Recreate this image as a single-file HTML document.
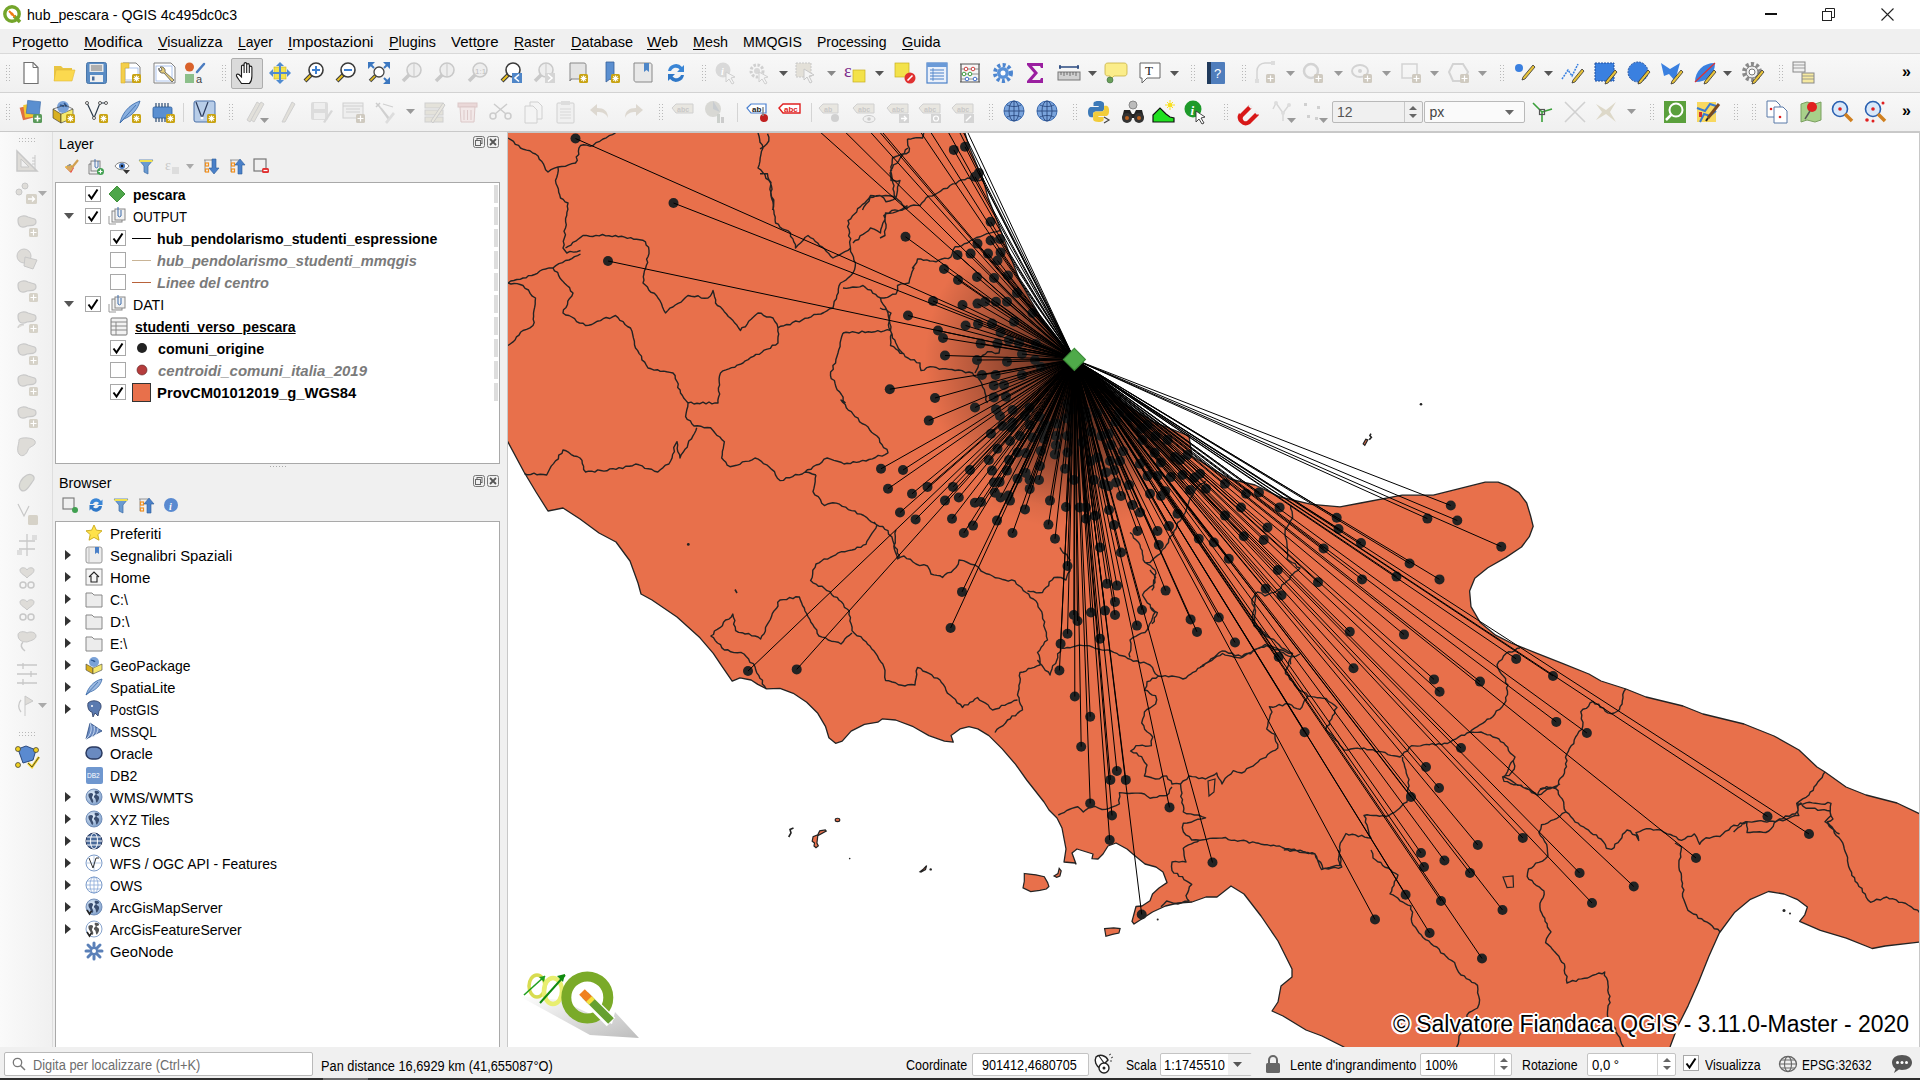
<!DOCTYPE html><html><head><meta charset="utf-8"><style>
*{box-sizing:border-box;margin:0;padding:0}
html,body{width:1920px;height:1080px;overflow:hidden;background:#f0f0f0;font-family:"Liberation Sans",sans-serif;color:#000}
.a{position:absolute}
.t{position:absolute;white-space:nowrap;line-height:1;transform-origin:0 0}
svg{position:absolute;overflow:visible}
</style></head><body><div class="a" style="left:0px;top:0px;width:1920px;height:29px;background:#ffffff;"></div>
<div class="t" style="left:27px;top:7.30px;font-size:15px;color:#000;font-weight:normal;font-style:normal;transform:scaleX(0.9433);">hub_pescara - QGIS 4c495dc0c3</div>
<div class="a" style="left:0px;top:29px;width:1920px;height:24px;background:#f0f0f0;"></div>
<div class="t" style="left:11.7px;top:34.30px;font-size:15px;color:#000;font-weight:normal;font-style:normal;transform:scaleX(0.9982);text-decoration-thickness:1px;text-underline-offset:2px;">P<u>r</u>ogetto</div>
<div class="t" style="left:84px;top:34.30px;font-size:15px;color:#000;font-weight:normal;font-style:normal;transform:scaleX(1.0474);text-decoration-thickness:1px;text-underline-offset:2px;"><u>M</u>odifica</div>
<div class="t" style="left:158px;top:34.30px;font-size:15px;color:#000;font-weight:normal;font-style:normal;transform:scaleX(0.9590);text-decoration-thickness:1px;text-underline-offset:2px;"><u>V</u>isualizza</div>
<div class="t" style="left:238px;top:34.30px;font-size:15px;color:#000;font-weight:normal;font-style:normal;transform:scaleX(0.9328);text-decoration-thickness:1px;text-underline-offset:2px;"><u>L</u>ayer</div>
<div class="t" style="left:288px;top:34.30px;font-size:15px;color:#000;font-weight:normal;font-style:normal;transform:scaleX(1.0154);text-decoration-thickness:1px;text-underline-offset:2px;"><u>I</u>mpostazioni</div>
<div class="t" style="left:389px;top:34.30px;font-size:15px;color:#000;font-weight:normal;font-style:normal;transform:scaleX(0.9553);text-decoration-thickness:1px;text-underline-offset:2px;"><u>P</u>lugins</div>
<div class="t" style="left:451px;top:34.30px;font-size:15px;color:#000;font-weight:normal;font-style:normal;transform:scaleX(0.9993);text-decoration-thickness:1px;text-underline-offset:2px;">Vett<u>o</u>re</div>
<div class="t" style="left:514px;top:34.30px;font-size:15px;color:#000;font-weight:normal;font-style:normal;transform:scaleX(0.9280);text-decoration-thickness:1px;text-underline-offset:2px;"><u>R</u>aster</div>
<div class="t" style="left:570.5px;top:34.30px;font-size:15px;color:#000;font-weight:normal;font-style:normal;transform:scaleX(0.9656);text-decoration-thickness:1px;text-underline-offset:2px;"><u>D</u>atabase</div>
<div class="t" style="left:647px;top:34.30px;font-size:15px;color:#000;font-weight:normal;font-style:normal;transform:scaleX(1.0140);text-decoration-thickness:1px;text-underline-offset:2px;"><u>W</u>eb</div>
<div class="t" style="left:693px;top:34.30px;font-size:15px;color:#000;font-weight:normal;font-style:normal;transform:scaleX(0.9542);text-decoration-thickness:1px;text-underline-offset:2px;"><u>M</u>esh</div>
<div class="t" style="left:743px;top:34.30px;font-size:15px;color:#000;font-weight:normal;font-style:normal;transform:scaleX(0.9440);text-decoration-thickness:1px;text-underline-offset:2px;">MMQGIS</div>
<div class="t" style="left:817px;top:34.30px;font-size:15px;color:#000;font-weight:normal;font-style:normal;transform:scaleX(0.9366);text-decoration-thickness:1px;text-underline-offset:2px;">Pro<u>c</u>essing</div>
<div class="t" style="left:902px;top:34.30px;font-size:15px;color:#000;font-weight:normal;font-style:normal;transform:scaleX(0.9619);text-decoration-thickness:1px;text-underline-offset:2px;"><u>G</u>uida</div>
<div class="a" style="left:0px;top:53px;width:1920px;height:1px;background:#d9d9d9;"></div>
<div class="a" style="left:0px;top:54px;width:1920px;height:38px;background:linear-gradient(#f8f8f8,#f0f0f0);"></div>
<div class="a" style="left:0px;top:92px;width:1920px;height:1px;background:#d2d2d2;"></div>
<div class="a" style="left:0px;top:93px;width:1920px;height:38px;background:linear-gradient(#f8f8f8,#f0f0f0);"></div>
<div class="a" style="left:0px;top:131px;width:1920px;height:1px;background:#c9c9c9;"></div>
<div class="a" style="left:0px;top:132px;width:53px;height:915px;background:linear-gradient(90deg,#fafafa,#f0f0f0);"></div>
<div class="a" style="left:52px;top:132px;width:1px;height:915px;background:#dedede;"></div>
<div class="a" style="left:53px;top:132px;width:455px;height:915px;background:#f0f0f0;"></div>
<div class="t" style="left:59.2px;top:135.60px;font-size:15px;color:#000;font-weight:normal;font-style:normal;transform:scaleX(0.9221);">Layer</div>
<div class="a" style="left:55px;top:182px;width:445px;height:282px;background:#ffffff;border:1px solid #a9a9a9"></div>
<div class="t" style="left:59.2px;top:475.00px;font-size:15px;color:#000;font-weight:normal;font-style:normal;transform:scaleX(0.9562);">Browser</div>
<div class="a" style="left:55px;top:521px;width:445px;height:527px;background:#ffffff;border:1px solid #a9a9a9"></div>
<div class="a" style="left:0px;top:1047px;width:1920px;height:31px;background:#f0f0f0;"></div>
<div class="a" style="left:0px;top:1078px;width:1920px;height:2px;background:#2e2e2e;"></div>
<div class="a" style="left:323px;top:1078px;width:45px;height:2px;background:#6a6a6a;"></div>
<svg style="left:508px;top:133px;overflow:hidden" width="1411" height="914" viewBox="508 133 1411 914"><rect x="508" y="133" width="1411" height="914" fill="#fff"/><polygon points="500,125 962,125 965,133 969,146.5 976,163 983,179 988,197.5 997,220.6 1004,239 1011,258 1020,281 1030,299 1044,322.5 1062,346 1074,359.6 1091,378 1123,403 1154,422 1189,436 1192,456 1208,466 1230,479 1255,485 1280,497 1311.5,504.3 1340,506.9 1360.7,503 1402.2,495.2 1433.3,495.2 1459.3,488.7 1485.2,482.2 1498.2,482.2 1508.5,486.1 1518.9,492.6 1526.7,503 1530.6,516 1533.2,526.3 1529.3,536.7 1521.5,547 1506,557.4 1487.8,567.8 1474.8,578.2 1469.6,591.1 1471,606.7 1480,622.2 1495.6,635.2 1511.1,643 1537,653.3 1563,663.7 1588.9,674 1601,681 1626,689 1646,697 1683,706 1703,714 1744,724 1774,736 1799,750 1817,767 1825,772 1846,787 1866,795 1897,803 1920,814 1926,817 1926,941 1920,942 1885.2,946 1872.2,948.5 1846.3,938.2 1820.4,930.4 1799.6,921.3 1804.8,914.8 1807.4,907 1797,899.3 1784,894 1768.5,891.5 1750.4,899.3 1734.8,912.2 1719.3,933 1708.9,956.3 1698.5,982.2 1688.2,1005.6 1677.8,1026.3 1670,1047 1666,1056 1347,1056 1344,1047 1322,1036 1306,1030 1283,1016 1272,1011 1278,1002 1281,986 1292,977 1292,969 1278,941 1261,916 1244,894 1231,886 1217,897 1206,897 1192,902 1178,903 1165.5,906 1152.5,912 1134,924 1132,921.4 1136,906.5 1142,906 1150,900.7 1152.5,894 1159,888 1167,882.6 1163,872 1156,867 1145,864 1134,855 1127,849 1116,843 1108,846 1103,854 1098,859 1092,858.6 1093,854 1085,851.5 1077,849 1072,853 1076,864 1075,863 1064,862 1066,849 1064,838.5 1062,828 1057,818 1049,810 1044,802 1026.7,780 1015.6,764.4 1002.2,748.9 988.9,735.6 977.8,728.9 968.9,726.7 960,728.9 951.1,735.6 953.3,742.2 944.4,741.1 928.9,735.6 913.3,726.7 895.6,720 882.2,718.9 877.8,722.2 864.4,724.4 851.1,731.1 842.2,741.1 835.6,743.3 828.9,737.8 825.6,726.7 817.8,713.3 806.7,702.2 793.3,693.3 780,688.4 766.7,688.9 757.8,684.4 751.1,680 740,677.8 732.2,681.1 722.2,666.7 713.3,653.3 700,637.8 677,617 652,600 641,594 638,583 630,561 616,542 599,533 580,519 563,508 548,511 536,492 524,472 508,442 500,430" fill="#e8704b" stroke="#232323" stroke-width="1.3" stroke-linejoin="round"/><path d="M788.7 837L791 833L790 829.5L793.5 828M1369.3 439.8L1371.4 437.3L1369.9 435.7L1370.9 433.7M735 589.5L737 593" stroke="#232323" stroke-width="1.6" fill="none"/><g fill="#232323"><circle cx="1421" cy="404.2" r="1.3"/><circle cx="849.7" cy="858.6" r="0.8"/><circle cx="930.7" cy="869.4" r="1.2"/><circle cx="1157.7" cy="919.5" r="1"/><circle cx="688.3" cy="544.4" r="1.4"/><circle cx="1784" cy="910.5" r="1.5"/><circle cx="1790" cy="913.5" r="1"/></g><ellipse cx="837.5" cy="819.9" rx="2.3" ry="1.7" fill="#e8704b" stroke="#232323" stroke-width="1.1"/><polygon points="1024.3,873.5 1029.4,874.1 1035.9,874.8 1044.3,876.7 1047.6,882.6 1048.9,886.5 1046.3,889 1039.8,890.3 1030.7,891.6 1023,887.8 1024.3,881.3" fill="#e8704b" stroke="#232323" stroke-width="1.2"/><polygon points="1054,876 1058,873.5 1059.2,868.3 1061.2,870.9 1059.9,876 1056.7,877.4" fill="#e8704b" stroke="#232323" stroke-width="1.2"/><polygon points="1104.6,928.6 1113.7,927.9 1120.1,928.6 1118.9,933.1 1112.4,934.4 1105.9,936.3" fill="#e8704b" stroke="#232323" stroke-width="1.2"/><polygon points="1363.2,443.9 1365.8,439.3 1367.8,439.8 1364.8,445.4" fill="#e8704b" stroke="#232323" stroke-width="1.2"/><polygon points="812.2,841.2 813.1,836.6 817.8,834.7 819.7,830.9 825.3,830 826.2,831 817.8,835.6 816.9,843.1 818.3,845.9 816,847.8 814,846 814.5,843.1" fill="#e8704b" stroke="#232323" stroke-width="1.2"/><polygon points="920,871.7 923.5,869 926.6,865.6 925.5,869.5 921,872" fill="#e8704b" stroke="#232323" stroke-width="1.2"/><path d="M508.0 138.0L510.7 139.7L513.5 141.4L515.3 144.3L518.6 145.3L520.5 148.0L523.5 149.3L526.6 150.1L529.9 150.7L532.5 152.8L535.5 154.0L538.1 156.0L539.2 159.1L541.6 161.2L543.4 163.8L544.6 166.8L545.6 169.8L548.0 172.0L551.0 169.6L554.4 168.1L558.0 167.0L561.6 166.5L565.2 166.4L568.5 164.8L571.9 163.6L575.5 163.0L577.3 160.4L576.2 156.9L578.8 154.5L578.4 151.2L578.9 148.2L580.5 145.5L583.6 144.7L586.8 145.1L589.9 146.2L593.0 145.5L596.0 142.7L599.8 141.3L603.0 139.0L606.3 137.8L609.1 135.7L612.4 134.6L615.5 133.0M558.0 167.0L558.3 170.6L557.7 173.9L556.8 177.2L555.5 180.5L556.0 183.5L557.3 186.3L558.4 189.1L558.7 192.2L559.8 195.1L560.5 198.0L563.2 199.3L565.1 201.9L568.0 203.0L567.3 206.1L567.9 209.3L566.9 212.4L566.7 215.5L565.6 218.5L565.6 221.7L566.3 224.9L565.5 228.0L564.0 231.2L565.5 234.8L564.4 238.0L563.3 241.3L564.2 244.8L563.0 248.0L564.9 250.5L566.8 253.0L570.0 251.4L573.7 252.1L577.2 251.7L580.5 250.5M565.5 248.0L568.1 246.3L571.0 245.1L572.8 242.3L575.7 241.2L578.1 239.2L580.6 237.4L583.0 235.5L586.2 235.4L589.5 236.2L592.8 236.5L596.0 235.4L599.2 235.9L602.5 234.5L605.8 235.9L609.0 235.8L612.2 236.6L615.5 235.5L618.4 236.8L621.6 236.3L624.6 237.1L627.4 238.4L630.7 237.6L633.5 239.2L636.6 239.2L639.7 239.7L642.7 240.2L645.5 241.8L646.1 244.9L648.6 247.3L649.0 250.5L649.0 253.6L648.1 256.5L646.6 259.2L647.7 262.5L646.4 265.3L645.6 268.2L644.4 271.0L643.9 274.0L643.3 276.9L644.0 280.1L643.0 283.0L645.3 285.0L647.5 287.1L648.8 290.0L650.9 292.3L654.3 293.2L656.4 295.4L658.0 298.0L660.0 300.7L661.5 303.7L662.5 307.0L663.8 310.1L665.5 313.0L667.7 310.6L669.8 308.2L672.9 307.0L675.3 305.0L678.1 303.4L681.1 302.1L683.3 299.7L685.5 297.5L688.0 295.5L691.3 296.2L694.6 296.7L698.1 295.8L701.2 298.0L704.6 298.2L708.0 298.0L710.4 296.0L711.9 293.4L713.0 290.5L713.9 293.6L714.5 296.7L715.7 299.7L715.5 303.0L717.4 305.5L720.4 306.9L722.5 309.2L724.3 311.7L726.5 314.0L728.3 316.5L730.8 318.4L733.0 320.6L734.8 323.1L737.0 325.3L738.6 328.0L740.5 330.5L741.9 327.6L745.5 326.7L747.2 324.1L748.7 321.2L751.1 319.2L753.4 317.1L755.6 315.0L758.0 313.0L761.3 313.2L763.8 315.7L766.7 317.0L770.0 316.9L773.0 318.0L774.7 321.3L777.1 324.3L778.0 328.0L780.7 326.2L783.9 325.7L786.8 324.5L790.2 324.7L792.8 322.3L795.7 321.0L799.3 321.9L802.0 320.1L804.8 318.3L808.0 318.0L811.2 316.8L813.9 314.5L817.4 314.3L820.9 314.0L823.9 312.5L826.9 310.9L829.7 308.8L833.0 308.0L833.7 304.8L834.2 301.5L836.4 298.8L836.8 295.5L838.3 292.6L838.3 289.1L839.0 285.9L840.5 283.0L843.4 281.5L846.2 279.8L848.5 277.6L850.9 275.5L853.0 273.0L854.5 269.8L855.2 266.5L855.5 263.0L853.9 260.2L853.5 257.0L852.2 254.1L850.5 251.3L850.5 248.0M508.0 283.0L510.7 281.0L513.8 280.5L516.8 279.5L520.1 279.4L523.0 278.0L526.2 277.8L528.6 275.6L531.8 275.5L534.6 274.5L537.4 273.3L539.8 271.0L542.5 269.6L545.5 269.0L549.2 267.9L553.0 268.0L555.8 265.6L558.9 263.7L562.5 262.6L565.5 260.5L568.9 260.0L571.8 258.6L574.5 256.6L577.6 255.6L580.5 254.0M553.0 268.0L554.5 270.9L557.7 272.4L558.7 275.7L560.3 278.6L562.5 280.9L564.6 283.3L567.0 285.5L569.6 287.6L570.5 290.9L573.0 293.0L571.9 296.0L569.6 298.4L567.8 301.1L567.5 304.5L566.1 307.4L563.5 309.7L563.0 313.0L565.6 315.0L569.0 315.5L571.8 317.0L574.6 318.6L576.6 321.6L579.5 323.0L583.1 323.3L585.5 325.5L588.7 325.2L591.8 324.5L594.6 322.8L597.4 321.2L600.5 320.6L603.2 318.7L606.2 317.5L609.8 318.5L612.6 316.8L615.5 315.5L618.0 317.6L619.9 320.4L623.1 321.6L625.0 324.5L627.5 326.5L630.5 328.0L632.0 331.2L632.7 334.5L633.4 337.9L634.4 341.2L634.5 344.7L635.5 348.0L637.7 350.6L639.2 353.6L641.5 356.1L641.9 359.9L644.7 362.1L646.3 365.1L648.0 368.0L651.1 368.8L654.1 370.1L657.4 369.7L660.3 371.4L663.6 371.1L666.7 371.8L669.9 372.4L673.0 373.0L675.1 375.5L675.3 378.7L676.9 381.3L678.3 384.0L677.7 387.5L680.1 389.9L680.5 393.0L682.4 395.5L683.9 398.3L686.0 400.6L688.0 403.0L687.8 406.5L686.8 409.8L686.1 413.3L685.6 416.7L687.2 419.4L690.4 420.8L691.8 423.8L694.0 426.0L697.4 425.8L700.7 426.2L703.9 427.7L707.3 427.5L710.6 427.8L712.8 430.2L714.8 432.8L716.9 435.4L719.9 437.0L721.9 439.6L724.4 441.7L723.8 445.0L723.3 448.2L722.4 451.4L722.3 454.8L721.7 458.0L723.7 460.2L725.9 462.3L727.2 465.2L730.0 466.7L733.3 466.0L736.5 465.3L739.7 464.4L742.3 461.9L745.7 461.4L749.1 461.1L752.1 459.8L755.0 458.0L758.2 459.2L761.0 461.1L763.4 463.6L766.7 464.8L769.2 467.0L771.7 469.4L774.5 471.6L775.6 475.2L777.4 478.2L780.0 480.6L783.4 480.4L786.0 477.7L789.5 477.8L792.6 476.6L795.4 474.5L799.0 474.9L802.2 474.0L805.0 472.0L807.4 469.7L811.1 469.3L813.2 466.6L816.1 465.0L819.4 464.2L822.0 462.1L824.0 459.1L827.2 458.0L830.6 459.1L833.9 460.4L837.4 461.3L840.9 462.2L844.0 464.0L847.1 463.2L850.4 463.6L853.3 461.7L856.6 462.4L859.7 461.7L862.7 460.4L866.0 461.0L869.0 459.5L872.4 458.9L875.4 457.5L878.2 455.4L882.1 456.1L885.1 454.6L888.0 452.8L887.0 449.4L883.6 447.7L882.1 444.7L879.8 442.2L879.3 438.5L877.0 436.0L874.2 434.2L871.6 432.3L869.6 429.7L867.8 426.7L865.2 424.8L862.0 423.5L859.4 421.6L858.1 418.2L855.0 416.7L853.1 414.2L851.3 411.6L848.3 410.1L846.3 407.8L845.3 404.5L842.9 402.5L841.0 400.0L845.5 403.0M688.0 403.0L691.0 402.1L694.0 404.0L697.0 403.3L700.0 403.7L703.0 402.1L706.0 403.8L709.0 402.0L712.0 403.8L715.0 402.9L718.0 403.0L717.9 400.0L718.6 397.0L719.7 394.1L718.5 391.0L718.4 387.9L719.6 385.0L719.2 382.0L719.1 378.9L719.5 375.9L720.5 373.0L722.9 370.8L725.9 369.9L728.8 368.9L731.6 367.6L734.8 367.3L737.2 365.1L740.2 364.3L743.0 363.0L745.3 360.8L748.2 359.6L750.6 357.5L753.5 356.4L755.9 354.4L759.4 354.2L761.9 352.3L764.2 350.1L767.2 349.1L770.4 348.4L772.2 345.3L775.7 345.1L778.0 343.0L777.9 340.0L778.0 337.0L778.7 334.0L777.8 331.0L778.0 328.0M758.0 133.0L759.0 136.0L759.6 139.1L760.0 142.3L762.3 144.9L763.0 148.0L761.5 151.2L760.9 154.6L760.2 157.9L759.9 161.4L759.2 164.7L758.0 168.0L760.8 169.9L762.8 172.5L765.0 174.9L765.9 178.3L768.8 180.2L770.5 183.0L771.5 186.1L772.0 189.2L770.7 192.4L770.9 195.6L771.7 198.7L772.9 201.7L773.3 204.8L773.0 208.0L773.9 210.9L774.1 214.0L775.2 216.9L775.1 220.0L775.5 223.0L778.3 224.2L779.9 227.2L782.4 228.9L785.4 229.8L788.3 230.9L790.5 233.0L790.5 236.3L792.9 238.9L793.8 241.9L795.5 244.7L795.5 248.0L797.8 245.3L800.5 243.0L803.0 240.5L805.0 237.5L808.0 235.5L810.3 237.6L813.3 238.8L815.2 241.3L817.7 243.0L819.5 245.6L822.3 247.0L824.6 249.0L826.5 251.5L828.8 253.5L830.6 256.1L833.0 258.0L835.9 256.4L839.1 255.1L841.9 253.3L844.9 251.7L848.0 250.4L850.5 248.0L850.0 245.0L849.6 241.9L850.7 238.7L848.6 235.8L849.6 232.7L849.1 229.6L847.6 226.7L849.0 223.5L848.0 220.5L850.7 218.8L852.3 216.1L854.5 214.0L856.7 211.9L857.6 208.6L860.3 206.9L862.3 204.6L864.9 202.8L866.9 200.5L869.0 198.3L870.5 195.5L873.5 195.7L876.5 196.4L879.5 195.9L882.5 195.9L885.5 195.5L889.0 195.8L892.4 196.2L895.5 198.0L894.2 195.1L894.1 191.9L893.0 189.0L894.0 185.6L892.8 182.7L892.4 179.6L891.9 176.6L891.4 173.5L890.5 170.5L892.4 168.0L893.5 164.8L896.9 163.4L898.7 160.8L900.2 158.0L902.2 155.5L904.4 153.2L905.3 149.9L908.0 148.0M508.0 283.0L510.9 284.0L514.1 283.5L517.2 283.6L520.1 284.5L523.0 285.5L525.1 288.4L528.5 290.0L530.1 293.4L532.3 296.2L535.5 298.0L535.2 301.1L535.2 304.1L534.7 307.2L534.0 310.2L533.5 313.2L533.6 316.3L533.2 319.4L534.2 322.5L533.0 325.5L530.0 327.9L526.6 329.3L523.0 330.5L520.5 332.3L519.0 335.1L516.5 336.8L515.2 339.8L513.0 341.9L510.5 343.7L508.0 345.5M843.0 333.0L841.8 336.2L840.9 339.6L840.1 342.9L840.1 346.4L838.8 349.7L838.0 353.0L837.0 356.2L835.9 359.5L835.6 362.9L832.9 365.6L833.3 369.3L830.6 372.0L830.5 375.5L831.2 378.7L834.4 380.5L835.1 383.7L835.9 386.8L837.1 389.7L839.6 391.9L841.4 394.5L843.1 397.2L843.1 400.7L845.5 403.0M843.0 333.0L846.1 332.2L849.3 332.8L852.5 331.7L855.7 332.4L858.9 333.2L862.0 331.2L865.2 332.5L868.3 331.7L871.5 332.3L874.7 331.8L877.8 330.6L881.0 331.9L884.2 330.8L887.3 329.6L890.5 330.5L891.6 333.5L890.5 336.5L890.6 339.5L890.9 342.5L890.5 345.5L893.5 346.6L895.7 348.8L898.2 350.5L900.1 353.3L903.6 353.5L905.2 356.7L908.0 358.0L910.7 359.9L914.3 359.7L916.6 362.6L920.0 363.0L920.0 366.8L921.0 370.5L924.3 370.1L926.8 367.6L930.0 366.8L933.2 366.9L936.3 367.5L939.2 369.2L942.5 368.8L945.7 368.8L948.8 369.4L951.9 369.5L955.0 370.5L958.6 370.0L962.1 370.6L965.4 372.7L969.1 372.0L972.5 373.0L974.3 376.2L977.9 377.6L980.0 380.5L981.7 383.4L982.5 386.8L984.4 389.6L985.0 393.0L986.1 396.3L985.7 399.9L987.5 403.0M843.0 288.0L846.4 288.4L849.8 287.8L853.0 287.0L856.4 287.2L859.8 286.9L863.0 285.5L865.4 287.4L867.7 289.5L871.1 290.1L872.7 293.1L875.6 294.3L877.7 296.7L880.5 298.0L884.0 298.0L887.5 297.4L890.2 295.8L892.8 294.2L896.0 294.0L897.7 289.9L897.5 285.5L901.2 283.9L905.2 283.8L909.0 283.0L909.7 279.2L911.0 275.5L912.1 271.6L914.0 268.0L912.5 268.0L914.6 265.3L916.7 262.5L917.5 259.0L920.7 258.9L923.6 260.3L926.8 259.9L929.8 261.0L933.0 261.1L936.0 261.8L938.8 260.1L941.8 259.0L944.8 258.1L948.3 258.6L951.0 256.8L952.3 253.4L953.1 249.9L955.0 246.8L958.4 246.7L961.6 245.9L964.3 243.8L967.5 243.0L970.3 240.7L973.4 239.3L976.5 237.5L980.0 236.8L983.2 235.4L986.4 233.8L989.8 233.1L993.2 232.1L996.7 231.7L1000.0 230.5M880.5 298.0L881.2 301.4L883.0 304.2L885.2 306.9L886.7 309.9L888.0 313.0L888.4 316.5L889.3 320.0L889.9 323.4L891.0 326.9L890.5 330.5M853.0 243.0L855.2 240.5L858.7 239.5L860.0 235.9L863.0 234.4L865.7 232.5L868.5 230.7L870.5 228.0L874.1 229.1L877.4 230.9L880.5 233.0L880.8 229.5L882.0 226.3L882.9 223.0L884.8 219.9L885.4 216.5L885.5 213.0L888.9 213.1L891.7 210.5L894.9 209.9L898.5 210.6L901.8 210.3L904.8 208.7L908.0 208.0M880.0 308.0L882.7 309.4L886.0 309.5L888.3 311.5L891.0 313.0L889.7 315.9L889.5 318.9L889.0 321.9L888.4 324.9L889.0 328.0L890.7 331.2L892.1 334.4L892.5 338.0L894.8 340.1L895.8 343.0L897.2 345.7L898.4 348.5L900.4 350.8L902.5 353.0M975.0 373.0L976.5 370.2L978.0 367.4L978.7 364.2L980.1 361.4L980.3 358.0L982.5 355.5L985.4 354.1L987.5 351.8L991.4 351.6L995.1 353.5L999.0 353.0L1000.0 348.0M907.5 139.0L910.5 139.1L913.5 138.2L916.4 137.6L919.5 137.7L922.5 138.0L923.8 133.0M907.5 139.0L907.6 142.2L907.8 145.4L909.5 148.5L909.0 151.8L906.1 153.8L902.5 154.0L899.1 155.3L895.8 156.5L892.5 158.0L892.2 161.0L892.1 164.1L890.8 167.0L891.6 170.2L890.0 173.0L890.9 176.7L891.0 180.5L894.0 180.4L897.0 181.5L900.0 180.5L898.9 183.8L897.5 187.0L897.5 190.5L896.8 194.3L896.0 198.0L892.9 199.8L889.5 201.0L886.0 201.8L883.7 197.9L880.0 195.5L876.6 195.7L873.4 197.2L870.0 197.5L869.0 201.2L866.3 203.8L864.0 206.7L862.5 210.0M896.0 198.0L898.4 200.1L900.9 202.0L902.5 204.8L905.0 206.8L908.1 207.4L911.0 205.7L913.9 205.0L917.0 205.4L920.0 205.5L921.9 202.9L924.3 200.8L926.0 198.0L928.6 196.1L932.0 196.1L934.8 194.7L937.5 193.0L940.6 191.1L943.4 188.7L947.4 188.3L950.0 185.5L952.8 183.9L956.1 183.6L958.5 181.2L961.4 179.9L964.8 179.8L967.5 178.0L971.4 178.8L975.0 180.5L979.5 180.7L983.8 179.0M907.5 205.5L904.6 207.1L902.1 209.2L899.2 210.7L896.0 211.8L893.0 212.9L889.8 213.3L886.5 213.6L883.8 215.5L885.1 218.5L885.1 221.7L886.1 224.8L886.0 228.0L884.5 231.6L885.0 235.5L880.0 238.0M767.5 133.8L768.9 137.2L768.8 141.0L766.5 144.3L763.6 146.9L760.0 148.8M760.0 173.8L763.8 173.5L767.5 173.8L767.9 177.0L769.0 179.9L771.0 182.5L770.5 185.8L769.9 189.2L771.0 192.5L771.5 196.6L773.8 200.0L773.7 203.4L773.6 206.8L772.5 210.0M524.4 473.6L527.5 474.8L530.7 474.5L534.0 473.2L537.1 474.8L540.3 474.3L543.5 474.5L546.7 475.0L548.2 472.0L549.7 469.0L551.2 466.1L553.5 463.6L555.5 460.9L558.4 458.9L558.7 455.1L562.0 453.3L563.0 450.0L566.1 450.8L568.8 452.4L571.2 454.6L574.0 456.0L577.2 456.5L580.0 458.0L582.0 460.4L582.3 463.6L583.6 466.3L583.6 469.5L585.6 472.0L588.6 471.1L591.7 471.2L594.8 472.1L597.7 469.9L600.8 470.5L603.9 471.1L606.9 470.8L609.8 468.9L612.9 468.6L616.0 469.4L619.0 467.6L622.8 468.5L625.7 466.2L629.2 466.3L632.6 465.7L635.6 464.0L638.9 464.8L642.1 465.8L644.8 468.4L648.2 468.8L651.6 469.2L654.5 471.3L657.8 472.0L660.3 469.7L663.1 467.6L665.5 465.1L668.9 464.0L670.6 461.0L672.1 457.9L672.6 454.5L674.4 451.6L673.7 447.7L675.3 444.7L677.0 441.7L677.7 445.0L677.2 448.4L677.8 451.7L679.6 454.7L680.0 458.0L681.1 454.9L683.1 452.3L684.8 449.6L687.2 447.3L688.0 444.0L688.8 441.0L691.5 438.9L692.8 436.1L694.4 433.5L695.8 430.8L696.7 427.8M816.0 475.0L815.2 478.3L815.2 481.7L814.6 485.1L813.9 488.4L813.0 491.7L814.8 494.9L818.3 496.7L820.4 499.6L821.7 503.2L824.4 505.6L828.4 503.7L832.8 502.8L836.3 503.1L839.5 504.2L842.3 506.4L845.6 507.1L848.3 509.6L851.5 510.6L855.0 511.0L857.2 513.7L860.8 514.1L863.7 515.5L866.5 517.3L868.8 519.7L871.3 521.9L874.3 523.2L877.0 525.0L875.9 528.1L874.0 530.6L872.1 533.2L870.4 535.9L868.7 538.6L866.9 541.3L866.0 544.4L863.1 545.2L860.7 547.4L857.3 547.1L855.0 549.3L852.0 550.0L848.5 550.6L845.2 551.7L841.6 551.6L838.3 552.8L835.8 554.8L833.0 556.1L830.2 557.5L827.5 559.1L824.0 559.0L821.5 561.0L819.0 562.9L816.0 564.0L815.1 567.4L812.8 570.3L812.7 574.0L812.2 577.5L810.6 580.6L813.0 582.8L816.0 584.1L818.4 586.3L822.1 586.2L824.5 588.5L826.9 590.7L830.0 591.7L831.6 594.4L833.7 596.6L837.2 597.4L838.9 600.0L841.4 601.8L843.4 604.1L844.4 607.4L847.1 609.0L849.4 611.0L848.9 614.4L850.5 617.5L849.9 620.9L851.2 624.1L852.1 627.3L852.0 630.6L854.4 633.3L857.0 635.8L860.9 636.6L863.1 639.6L866.0 641.7L867.7 644.3L870.2 646.3L871.8 649.0L874.1 651.1L875.9 653.7L877.6 656.2L878.9 659.2L880.7 661.7L882.8 664.0L884.0 667.2L885.0 670.5L884.9 673.9L884.7 677.3L885.6 680.6L889.0 680.8L892.2 682.0L895.5 682.7L898.4 684.8L901.7 685.2L905.0 686.0L908.2 684.7L911.6 684.5L915.0 685.0L915.3 681.5L916.1 678.0L916.8 674.5L916.1 670.9L917.5 667.5L920.7 668.4L922.9 671.0L926.0 672.0L929.0 673.3L931.8 674.9L933.9 677.7L937.4 678.1L940.0 680.0L941.5 682.6L943.6 684.8L945.2 687.4L946.0 690.4L947.4 693.1L950.0 695.0L952.7 697.3L955.5 699.5L957.1 702.9L960.5 704.5L962.5 707.5L964.4 704.9L968.0 704.9L969.9 702.4L972.9 701.4L974.9 699.0L977.5 697.5L979.5 700.2L982.6 701.6L985.5 703.2L988.2 705.0L989.9 708.0L992.5 710.0L995.7 709.0L999.1 708.3L1001.5 705.4L1005.1 705.2L1008.0 703.5L1011.3 702.5L1014.1 700.5L1017.5 700.0M805.0 472.0L808.8 472.5L812.3 474.0L816.0 475.0M710.6 636.0L713.5 634.5L714.4 631.0L717.2 629.4L720.0 627.7L722.4 625.7L723.5 622.3L725.6 620.0L729.0 619.1L731.3 616.9L732.8 614.0L733.4 617.3L734.9 620.5L733.6 624.1L735.3 627.2L735.6 630.6L738.6 632.4L742.0 632.7L745.1 634.0L748.7 633.5L751.6 635.7L755.0 636.0L758.1 637.0L760.6 639.0L761.8 636.1L764.1 633.8L765.4 631.0L765.5 627.5L767.0 624.8L768.7 622.2L770.3 619.5L771.5 616.6L772.3 613.6L774.0 610.9L776.3 608.6L778.0 606.0L777.7 602.3L780.0 600.0L783.3 599.6L786.6 599.6L789.5 597.5L793.0 598.7L796.0 596.7L799.4 597.0L800.3 599.9L801.5 602.6L802.5 605.5L804.3 608.0L805.0 611.0L806.7 613.7L808.0 616.6L809.8 619.3L810.9 622.3L812.9 624.8L814.5 627.6L816.8 629.9L817.2 633.4L819.0 636.0L822.2 637.1L825.5 637.7L828.2 640.0L831.4 641.2L834.7 641.6L838.1 642.2L841.0 644.0L843.2 641.8L844.8 639.0L847.0 636.8L849.7 635.1L852.0 633.0M710.6 636.0L713.5 637.7L715.3 640.6L717.5 643.0L720.5 644.6L721.9 647.9L724.4 650.0L727.9 649.8L730.8 651.8L734.1 652.6L737.5 652.7L740.9 652.4L744.0 654.0L746.2 656.5L748.6 658.9L749.9 662.3L753.4 663.6L755.0 666.7L755.7 669.8L756.8 672.8L758.7 675.3L759.9 678.2L762.5 680.3L762.3 683.9L764.6 686.2L766.0 689.0M874.0 522.0L876.3 524.6L879.1 526.2L882.8 526.5L884.9 529.4L888.0 530.6L888.6 534.3L891.9 536.9L892.8 540.5L894.0 544.0L894.8 547.1L897.4 549.5L897.3 553.1L899.4 555.6L897.5 559.0L900.5 557.1L904.0 556.0L906.6 558.6L910.4 559.3L913.0 562.0L916.0 564.0L919.7 565.6L923.8 564.7L927.5 566.0L929.7 569.8L931.0 574.0L933.9 574.9L936.9 575.4L939.9 575.7L942.5 577.5L944.8 574.9L947.5 572.9L951.2 572.3L953.5 569.8L956.0 567.5L958.3 564.1L959.0 560.0L963.5 560.6L967.5 562.5L971.1 564.3L975.0 565.0L978.6 567.4L981.0 571.0L983.8 572.3L986.6 573.8L989.7 574.5L992.5 576.0L995.4 577.8L998.7 578.1L1001.8 579.2L1005.0 580.0L1008.2 581.2L1011.8 579.8L1015.0 581.0L1016.4 584.0L1019.2 585.8L1021.8 587.7L1023.3 590.7L1026.0 592.5L1028.8 594.2L1030.3 597.6L1033.4 599.0L1036.0 601.0L1037.6 603.7L1038.1 606.8L1040.0 609.3L1041.8 611.9L1042.5 615.0L1042.6 618.6L1044.7 621.8L1043.7 625.6L1045.0 629.0L1046.4 632.5L1046.4 636.4L1047.5 640.0L1044.7 641.8L1043.4 644.9L1041.2 647.3L1039.8 650.3L1037.5 652.5L1039.2 655.4L1039.8 658.5L1040.1 661.7L1040.0 665.0L1037.1 665.8L1034.3 667.3L1031.4 668.2L1028.3 668.5L1026.0 671.1L1023.1 672.0L1020.0 672.5L1019.3 675.7L1020.3 679.0L1020.0 682.3L1018.9 685.4L1019.1 688.7L1018.2 691.8L1017.5 695.0L1019.1 697.8L1019.3 701.1L1020.3 704.1L1022.1 706.8L1022.5 710.0L1019.8 711.4L1017.5 713.4L1015.4 715.7L1012.0 715.9L1010.3 718.8L1007.5 720.0L1005.5 723.0L1003.1 725.6L999.8 727.3L996.9 729.4L995.0 732.5M896.0 530.0L894.9 533.1L895.3 536.4L895.2 539.7L895.3 542.9L893.8 546.0L894.4 549.3L895.5 552.5L896.9 555.7L897.5 559.0M1027.5 591.0L1030.5 591.6L1033.5 591.5L1036.4 592.9L1039.4 592.7L1042.5 592.5L1043.8 589.7L1046.0 587.5L1048.7 585.6L1049.2 581.9L1052.1 580.0L1054.0 577.5L1057.5 577.3L1061.0 577.5L1066.0 580.0L1066.8 576.8L1067.8 573.6L1070.0 571.0L1070.6 567.3L1068.9 563.7L1070.0 560.0L1068.1 557.4L1066.8 554.4L1063.4 553.0L1061.5 550.4L1060.0 547.5M1037.5 660.0L1039.4 662.7L1041.7 665.0L1043.5 667.7L1045.3 670.4L1048.5 672.0L1050.0 675.0L1050.8 671.9L1052.0 668.9L1052.7 665.7L1055.7 663.5L1056.7 660.4L1057.8 657.4L1057.6 653.8L1060.5 651.6L1061.0 648.3L1064.2 648.4L1067.3 647.5L1070.5 647.7L1073.6 646.7L1076.6 645.8L1079.8 645.1L1083.0 645.6L1086.2 645.6L1089.4 645.8L1092.4 647.0L1095.3 648.5L1098.5 649.0L1101.5 649.9L1104.7 650.3L1108.0 649.9L1111.0 651.0L1113.8 652.3L1116.7 653.3L1119.2 655.2L1122.2 655.8L1125.2 656.5L1127.7 658.5L1130.6 659.4L1133.5 661.3L1137.2 660.7L1140.1 663.0L1143.8 662.1L1146.9 663.6L1150.0 665.0L1152.5 667.4L1153.7 670.8L1155.4 673.8L1158.3 676.0L1161.7 676.5L1165.2 675.6L1168.6 676.8L1172.0 676.0L1175.8 676.6L1179.5 677.4L1183.0 679.0L1186.0 678.0L1188.1 675.7L1190.7 674.1L1193.1 672.3L1196.0 671.1L1197.8 668.4L1200.8 667.4L1202.8 665.0L1205.8 663.4L1208.7 661.6L1210.9 658.9L1214.1 657.4L1216.6 655.1L1219.0 652.7L1222.0 651.0L1225.5 651.3L1228.5 653.2L1232.1 653.0L1234.9 655.7L1238.6 655.0L1241.7 656.7L1244.1 654.5L1246.9 653.4L1250.4 653.9L1252.7 651.5L1255.3 649.8L1257.9 648.4L1260.7 647.1L1264.1 647.2L1266.7 645.6L1269.4 647.1L1272.1 648.5L1274.8 649.8L1278.2 649.7L1280.5 651.9L1283.5 652.7L1285.9 654.9L1288.6 656.1L1291.7 656.7L1296.1 656.2L1300.0 654.0M1130.0 657.5L1129.0 654.0L1130.8 650.5L1130.9 647.0L1131.0 643.5L1130.0 640.0L1132.6 637.7L1135.7 636.4L1138.6 634.7L1141.5 633.1L1145.0 632.5L1147.1 630.0L1148.5 627.1L1149.5 624.1L1151.4 621.4L1152.4 618.3L1153.2 615.1L1155.0 612.5L1152.5 610.5L1150.7 608.0L1150.1 604.7L1147.3 602.9L1145.7 600.2L1144.1 597.6L1142.5 595.0L1144.3 591.8L1147.1 589.6L1149.7 587.2L1152.8 585.3L1155.0 582.5L1154.7 579.4L1154.6 576.2L1156.0 573.1L1155.0 570.0L1152.5 568.1L1150.5 565.6L1147.7 564.2L1145.0 562.5L1143.2 559.9L1143.1 556.7L1142.4 553.8L1142.2 550.7L1140.5 548.0L1140.0 545.0L1138.4 542.2L1136.1 539.9L1133.5 537.9L1132.6 534.5L1130.0 532.5M1158.3 676.0L1155.9 678.2L1152.3 678.2L1150.2 680.9L1147.0 681.7L1146.7 686.2L1144.4 690.0L1147.5 690.8L1149.7 693.3L1152.3 695.1L1155.6 695.6L1156.7 699.8L1155.6 704.0L1152.8 706.0L1150.0 708.0L1146.8 709.5L1144.4 712.0L1144.2 715.8L1142.6 719.3L1141.7 723.0L1143.8 725.7L1144.6 729.2L1147.0 731.7L1150.3 734.0L1152.8 737.0L1151.1 741.1L1151.4 745.6L1148.3 746.1L1145.2 746.2L1142.2 745.2L1139.1 745.6L1136.0 745.6L1133.9 748.9L1130.6 751.0L1133.2 752.7L1136.6 753.0L1138.6 755.8L1141.7 756.7L1143.1 759.7L1144.7 762.6L1147.0 765.0L1145.9 768.6L1145.6 772.4L1144.4 776.0L1148.2 776.8L1151.9 777.8L1155.6 779.0L1159.5 778.8L1162.8 776.1L1166.7 776.0L1167.8 779.1L1171.1 780.8L1172.0 784.0L1176.3 783.4L1180.6 784.0L1183.0 781.0L1186.8 779.3L1189.0 776.0L1192.3 776.6L1195.7 776.9L1198.8 778.6L1202.4 777.8L1205.6 779.0L1208.3 777.4L1211.2 776.1L1214.2 775.0L1216.7 773.0L1217.5 776.0L1219.1 778.6L1221.0 781.1L1222.0 784.0L1223.6 781.1L1225.3 778.2L1227.8 776.0L1231.1 773.8L1233.3 770.6L1237.4 772.1L1241.7 773.0L1244.7 771.6L1246.7 768.7L1249.8 767.4L1252.9 766.2L1255.4 764.0L1258.0 762.0L1260.0 759.6L1262.9 758.4L1265.9 757.4L1267.6 754.5L1270.0 752.7L1272.6 751.1L1275.6 750.1L1277.8 748.0L1277.8 744.4L1275.7 741.4L1275.0 738.0L1275.0 734.4L1271.9 733.1L1269.3 731.1L1266.7 729.0L1267.8 725.6L1268.1 722.0L1269.5 718.7L1270.3 715.2L1272.0 712.0L1269.4 706.7L1272.8 707.3L1276.0 706.3L1279.0 704.5L1282.5 705.9L1285.5 703.6L1288.9 704.0L1291.8 705.1L1294.0 707.7L1296.9 708.6L1300.0 709.4L1302.0 707.0L1303.1 704.0L1304.2 701.0L1306.7 698.8L1308.0 696.0M1255.0 595.0L1255.6 598.1L1255.1 601.2L1254.4 604.2L1254.9 607.3L1253.8 610.3L1252.7 613.3L1252.6 616.4L1252.8 619.4L1252.5 622.5L1254.8 624.9L1257.6 626.7L1260.5 628.3L1262.4 631.2L1265.1 633.1L1267.2 635.8L1270.0 637.5M1200.0 667.0L1203.3 666.1L1205.5 663.5L1208.5 662.1L1211.5 660.7L1214.0 658.4L1216.6 656.4L1219.9 655.6L1222.5 653.5L1225.3 655.1L1228.4 655.6L1231.4 656.2L1234.3 657.3L1237.4 657.6L1240.5 658.0L1243.4 656.8L1245.9 654.9L1248.5 653.1L1251.5 652.2L1253.7 649.7L1256.7 648.8L1259.9 648.0L1262.5 646.4L1265.0 644.5L1267.9 645.8L1271.2 646.0L1274.1 647.3L1277.0 648.4L1279.9 649.8L1283.1 650.3L1285.9 651.9L1288.7 653.4L1292.0 653.5L1291.7 656.6L1289.8 659.2L1288.6 662.0L1288.5 665.1L1287.4 668.0L1285.4 670.5L1285.5 673.8L1288.5 675.9L1289.9 679.4L1292.8 681.7L1294.5 685.0L1296.8 687.7L1299.3 690.2L1302.6 691.6L1305.9 693.1L1308.0 696.0L1311.0 696.6L1314.0 696.9L1316.9 697.7L1320.0 697.7L1323.0 698.4L1326.0 698.5L1328.3 701.3L1331.5 703.0L1334.4 705.1L1337.0 707.5L1334.7 709.9L1334.8 713.4L1332.5 715.8L1331.7 718.9L1329.6 721.3L1329.5 724.7L1326.4 726.7L1326.0 730.0L1328.5 732.3L1331.2 734.3L1333.1 737.2L1335.2 739.9L1338.0 741.8L1339.6 744.9L1341.9 747.4L1344.0 750.0L1347.4 750.1L1350.6 749.0L1353.9 748.5L1357.3 748.1L1360.7 748.9L1364.0 748.0L1366.8 749.7L1370.0 749.6L1373.1 749.7L1375.8 751.6L1379.1 751.5L1382.2 751.9L1385.2 752.5L1387.9 754.6L1390.8 755.4L1393.9 755.8L1397.0 756.2L1400.0 757.0L1402.4 754.8L1404.2 752.1L1407.6 751.0L1409.0 747.8L1411.5 745.8L1414.5 745.9L1417.5 746.1L1420.5 745.9L1423.5 744.9L1426.5 744.4L1429.5 744.7L1432.4 743.6L1435.5 745.0L1438.5 743.7L1441.5 744.6L1444.5 743.2L1447.5 743.5L1450.2 741.8L1452.9 740.1L1455.9 739.0L1458.4 737.1L1461.1 735.3L1464.6 735.3L1467.0 733.0L1470.0 732.0L1472.1 729.8L1474.7 728.1L1477.4 726.6L1479.8 724.8L1482.6 723.4L1485.1 721.6L1487.1 719.3L1490.3 718.6L1492.7 716.7L1494.8 714.2L1496.3 710.9L1499.8 709.3L1502.2 706.7L1504.2 703.9L1506.0 700.8L1505.6 697.5L1507.5 694.5L1507.5 691.3L1506.5 688.0L1508.0 685.0L1505.5 682.6L1505.7 678.7L1503.6 676.2L1501.2 673.7L1499.4 671.0L1497.9 668.0L1497.0 664.8L1498.8 661.6L1502.0 659.5L1503.5 656.1L1506.0 653.5L1508.5 651.7L1511.9 652.1L1514.6 650.8L1516.9 648.4L1520.0 648.0M1402.5 757.0L1402.6 760.5L1404.1 763.5L1404.7 766.8L1405.9 770.0L1406.3 773.3L1407.5 776.5L1409.0 779.5L1408.0 782.6L1409.1 786.0L1407.7 789.1L1407.8 792.4L1407.0 795.5L1407.4 798.8L1407.0 802.0L1403.9 803.3L1401.8 805.8L1399.6 808.2L1397.1 810.2L1394.6 812.3L1391.6 813.6L1389.0 815.5L1385.9 816.5L1382.8 815.6L1379.6 816.3L1376.5 815.5L1373.4 815.5L1370.2 815.4L1367.1 814.7L1364.0 815.5L1366.0 818.4L1365.3 822.2L1367.1 825.1L1367.9 828.4L1368.7 831.7L1369.3 835.0L1371.0 838.0L1367.8 837.7L1364.7 837.1L1361.8 835.3L1358.3 836.7L1355.4 834.9L1352.3 834.3L1348.9 835.1L1346.0 833.5L1344.2 836.8L1342.4 840.1L1340.3 843.2L1339.5 847.0L1340.2 850.3L1339.2 853.8L1340.6 857.0L1341.0 860.3L1340.5 863.8L1341.8 867.0L1338.5 868.4L1334.9 867.4L1331.6 868.0L1328.3 869.0L1324.8 868.3L1321.5 869.5L1319.9 866.5L1318.7 863.2L1317.5 860.0L1316.6 856.7L1314.8 853.8L1311.7 853.8L1308.8 852.8L1305.9 852.2L1303.0 851.4L1300.1 850.2L1296.9 850.8L1294.2 849.1L1291.1 849.5L1288.2 848.7L1285.1 848.6L1282.3 847.5L1279.5 846.0L1276.4 846.1L1273.5 845.2L1270.4 845.7L1267.5 844.8L1264.4 844.7L1261.4 844.3L1258.5 843.2L1255.5 842.7L1252.6 841.9L1249.3 843.1L1246.6 841.1L1243.6 840.3L1240.5 840.6L1237.4 841.2L1234.4 840.2L1231.3 840.4L1228.4 839.6L1225.6 837.5L1222.5 838.0L1219.3 838.1L1216.0 838.3L1212.8 838.3L1209.6 838.4L1206.4 839.4L1203.2 839.7L1200.0 840.2M1470.0 732.0L1473.7 732.3L1477.3 732.4L1481.0 732.0L1483.9 733.4L1486.9 734.7L1490.2 734.9L1492.9 737.0L1496.0 737.7L1499.0 739.0L1500.6 741.6L1503.7 742.9L1505.5 745.3L1507.8 747.3L1508.5 750.7L1510.3 753.1L1512.7 755.0L1515.0 757.0L1513.7 760.0L1511.2 762.4L1509.7 765.3L1508.6 768.4L1507.6 771.5L1506.0 774.4L1504.0 777.0L1506.9 778.3L1509.8 779.6L1512.4 781.4L1515.0 783.3L1517.5 785.3L1521.2 785.1L1523.5 787.6L1526.8 788.1L1529.5 789.8L1531.6 792.6L1534.6 793.6L1537.5 795.0L1541.3 794.2L1544.2 791.6L1547.2 789.2L1551.0 788.5L1553.9 786.8L1557.1 785.7L1560.0 784.0M1625.6 689.0L1623.8 691.7L1622.8 694.6L1623.0 697.8L1622.3 700.8L1622.1 704.0L1620.1 706.6L1619.5 709.6L1616.9 711.5L1614.2 713.0L1611.0 713.7L1607.8 712.8L1605.2 711.1L1603.5 708.1L1600.2 707.4L1598.7 704.1L1595.1 704.0L1593.0 701.5L1590.0 702.9L1588.6 706.2L1586.3 708.4L1582.9 709.3L1580.8 711.7L1581.8 715.2L1581.3 718.9L1583.0 722.3L1582.8 726.0L1582.0 729.3L1579.0 731.4L1577.5 734.3L1575.6 737.0L1574.2 740.0L1573.8 743.6L1571.1 745.8L1569.4 748.6L1568.2 751.7L1566.5 754.5L1565.5 757.5L1567.0 760.6L1565.5 763.7L1566.5 766.7L1564.6 769.4L1564.5 773.0L1563.1 775.9L1560.4 778.2L1558.6 780.9L1558.6 784.5L1556.3 787.0L1553.1 787.8L1549.7 787.3L1546.6 788.9L1543.2 787.8L1540.0 789.0M1825.0 771.8L1823.2 774.4L1822.2 777.5L1819.9 779.7L1817.8 782.0L1816.2 784.8L1814.0 787.0L1813.2 790.3L1810.2 792.1L1809.0 795.0L1806.1 797.3L1802.7 798.9L1799.6 801.1L1796.7 803.4L1797.4 806.4L1798.0 809.5L1797.6 812.7L1798.8 815.6L1795.2 815.5L1792.1 816.7L1789.0 818.1L1785.9 819.5L1782.8 820.9L1779.0 819.8L1776.0 821.7L1773.0 821.3L1770.0 821.0L1766.9 822.1L1763.9 821.5L1760.9 820.6L1757.9 821.0L1754.9 821.5L1751.8 822.1L1748.8 821.9L1745.8 821.7L1742.8 823.1L1741.1 826.0L1738.2 827.6L1735.9 829.8L1733.6 832.0M1796.7 803.4L1799.8 804.3L1802.9 804.1L1806.1 802.9L1809.2 802.3L1812.3 802.9L1815.4 803.2L1818.5 803.6L1821.6 804.1L1824.8 804.3L1827.9 802.4L1831.0 803.4L1830.3 806.5L1830.3 809.5L1830.2 812.5L1831.0 815.6L1827.9 818.5L1825.0 821.7L1827.7 823.4L1829.3 826.4L1831.8 828.4L1834.4 830.2L1836.5 832.6L1839.5 834.0M1513.0 760.0L1513.8 763.0L1514.8 765.9L1514.3 769.0L1511.6 772.2L1509.0 775.6L1505.7 775.6L1502.6 776.9L1504.0 781.4L1507.4 781.6L1510.3 783.5L1513.4 784.7L1516.9 784.6L1520.3 785.4L1523.3 787.4L1526.4 788.9L1529.8 789.8L1532.4 791.7L1535.4 793.1L1537.6 795.6L1538.3 792.5L1540.0 789.8L1543.6 788.7L1546.7 786.6L1549.6 787.9L1552.7 787.8L1555.7 788.5L1558.1 790.6L1558.4 794.1L1560.1 796.6L1562.2 798.9L1563.7 802.0L1563.9 805.4L1564.2 808.9L1566.0 811.9L1562.5 813.3L1560.0 816.1L1557.0 818.3L1553.9 819.6L1550.7 820.7L1548.0 822.8L1544.9 824.1L1541.5 824.8L1540.9 828.9L1538.9 832.6L1540.5 835.8L1543.1 838.3L1544.6 841.5L1546.7 844.3L1547.3 848.2L1547.5 852.1L1548.0 856.0L1545.4 858.8L1542.5 861.1L1538.9 862.4L1535.7 863.1L1533.8 865.9L1531.6 868.0L1528.5 868.9L1527.6 872.8L1527.2 876.7L1528.9 879.3L1532.1 880.5L1533.7 883.2L1536.1 885.3L1539.1 886.8L1541.4 889.1L1544.0 891.0L1544.2 894.3L1543.3 897.3L1541.5 900.0L1540.0 903.3L1539.9 906.8L1540.3 910.4L1541.7 913.1L1542.8 915.8L1544.8 918.2L1545.1 921.4L1547.1 923.8L1547.4 927.0L1549.1 929.5L1551.0 931.9L1548.6 935.2L1546.5 938.6L1545.6 942.6L1548.1 944.6L1550.5 946.7L1552.4 949.3L1554.5 951.6L1556.7 953.9L1558.9 956.2L1560.1 959.3L1561.7 962.2L1564.4 964.0L1564.9 967.2L1564.3 970.5L1564.8 973.6L1567.1 976.5L1566.4 979.9L1567.0 983.0L1569.8 981.9L1572.6 980.5L1576.0 981.4L1578.5 979.1L1581.5 978.9L1584.5 978.2L1587.6 978.0L1590.3 976.6L1593.0 975.2L1596.0 974.4L1598.7 973.0L1602.1 973.8L1604.7 972.0L1604.3 975.3L1606.6 977.9L1607.7 980.9L1607.9 984.0L1608.3 987.1L1607.8 990.4L1608.5 993.5L1610.0 996.3L1608.8 999.3L1610.1 1002.7L1608.1 1005.6L1607.8 1008.7L1607.5 1011.8L1607.4 1015.0L1608.1 1018.2L1611.5 1019.9L1612.9 1022.7L1613.4 1026.1L1615.5 1028.5L1615.9 1032.0L1617.8 1034.8L1619.9 1037.6L1620.6 1040.9L1621.6 1044.1L1623.5 1047.0M1566.0 811.9L1568.9 813.9L1570.9 816.8L1573.3 819.3L1575.2 822.2L1578.2 823.2L1580.4 825.6L1583.4 826.8L1585.9 828.7L1588.6 830.2L1590.7 832.6L1593.1 834.5L1596.4 834.9L1598.2 837.8L1601.0 839.0L1603.3 841.7L1605.4 844.6L1606.3 848.2L1611.5 849.4L1614.2 847.6L1614.9 844.2L1618.1 842.7L1619.9 840.2L1621.9 837.8L1622.5 834.4L1625.0 832.4L1627.0 830.0L1630.4 831.0L1632.5 834.3L1636.0 835.2L1638.7 840.4L1638.1 836.3L1636.0 832.6L1639.6 831.6L1643.0 829.9L1646.5 828.7L1650.1 828.7L1653.5 830.1L1657.2 829.6L1660.7 830.0L1663.8 832.2L1667.2 833.9L1670.4 834.5L1673.2 835.9L1676.2 836.9L1678.4 839.5L1681.5 840.4L1684.8 838.9L1687.6 836.5L1691.5 836.3L1694.4 833.9L1696.6 837.1L1698.0 840.7L1699.6 844.3L1701.2 841.6L1703.5 839.6L1706.0 837.8L1709.6 838.2L1713.0 836.8L1716.4 836.1L1720.0 836.5L1722.7 834.1L1725.2 831.4L1728.8 830.0L1731.0 827.0L1733.9 825.2L1737.7 825.9L1740.3 823.0L1744.1 823.7L1747.0 821.8L1746.6 825.4L1747.6 828.9L1747.0 832.5L1750.1 832.5L1753.3 832.0L1756.4 832.0L1759.5 831.8L1762.7 832.2L1765.8 832.5L1768.8 831.0L1771.1 828.8L1773.2 826.4L1774.2 822.9L1776.7 820.9L1779.3 819.0L1782.8 818.8L1785.4 816.0L1789.1 816.3L1792.0 814.3L1795.4 813.7L1798.1 810.6L1798.0 806.1L1800.8 803.0L1802.9 806.1L1806.0 808.3L1809.0 808.3L1812.1 808.2L1815.1 808.2L1817.9 810.4L1821.0 810.0L1824.1 809.6L1827.0 810.5L1830.0 811.0L1830.7 815.3L1833.0 819.0L1830.6 821.0L1827.6 821.8L1829.3 824.6L1831.8 826.7L1833.6 829.5L1834.3 832.9L1836.2 835.5L1838.9 837.6L1840.9 840.1L1842.7 842.8L1843.7 846.0L1844.3 849.0L1845.3 851.9L1846.6 854.7L1847.6 857.6L1847.5 860.8L1848.1 863.8L1848.7 866.8L1850.0 869.6L1851.6 872.4L1851.8 875.5L1854.5 877.6L1855.1 881.2L1857.6 883.4L1858.9 886.5L1862.0 888.3L1862.5 892.0L1865.3 894.1L1866.2 897.4L1868.1 900.1L1870.6 902.3L1873.8 901.2L1876.7 899.2L1880.5 900.0L1883.5 898.0L1886.7 897.0L1889.5 898.9L1893.0 898.8L1896.1 899.8L1898.6 902.3L1902.0 902.4L1905.2 903.2L1908.0 905.0L1911.2 906.8L1913.9 909.2L1917.6 910.1L1920.0 913.0M1675.0 843.0L1678.2 845.0L1681.5 846.9L1681.1 850.3L1680.4 853.6L1680.8 857.1L1679.0 860.3L1678.9 863.7L1678.9 867.1L1679.4 870.4L1681.2 873.4L1681.5 876.7L1681.4 880.1L1682.5 883.3L1682.0 886.7L1683.9 889.9L1682.5 893.4L1682.6 896.8L1684.0 900.0L1685.3 903.5L1686.6 906.9L1688.0 910.4L1690.6 912.2L1693.3 914.0L1696.6 914.8L1698.1 918.3L1701.7 918.7L1704.0 921.0L1707.1 922.2L1709.8 923.9L1712.3 926.0L1714.3 928.8L1717.9 929.2L1720.0 931.9M1283.8 850.0L1287.0 849.5L1289.9 851.2L1293.2 850.5L1296.4 850.5L1299.3 852.2L1302.5 852.6L1305.6 852.8L1308.7 853.6L1312.0 852.7L1315.0 854.0L1315.9 857.3L1317.8 860.1L1320.7 862.4L1322.1 865.4L1323.0 868.8L1326.4 868.1L1329.8 867.5L1333.1 866.4L1336.4 865.4L1340.0 865.6L1339.4 862.5L1338.4 859.5L1339.0 856.2L1339.2 853.0L1338.0 850.0M1371.0 850.0L1372.8 853.8L1373.0 858.0L1375.4 859.8L1377.7 861.8L1380.9 862.5L1382.6 865.4L1385.0 867.3L1388.1 868.0L1390.6 869.8L1392.6 872.2L1395.5 873.3L1398.0 875.0L1396.9 878.5L1394.4 881.6L1394.0 885.4L1392.1 887.9L1391.7 891.1L1390.0 893.8L1392.9 894.8L1395.4 896.5L1397.9 898.2L1400.0 900.8L1402.8 902.0L1405.3 903.7L1408.0 905.1L1411.0 906.0L1410.6 909.2L1412.6 912.2L1412.0 915.5L1411.3 918.8L1411.7 921.9L1413.0 925.0L1415.4 927.2L1417.1 929.9L1418.8 932.7L1421.2 934.8L1423.0 937.5L1425.6 939.6L1428.8 940.9L1431.0 943.6L1433.5 945.8L1436.8 947.0L1439.2 949.3L1440.7 952.8L1444.0 954.0L1446.3 956.6L1448.7 959.0L1451.8 960.6L1454.6 962.5L1455.6 965.9L1457.0 969.1L1458.6 972.3L1461.0 975.0L1464.3 975.9L1466.3 978.7L1469.5 979.8L1471.8 982.3L1475.0 983.2L1477.5 985.4L1477.9 989.1L1477.6 992.8L1478.8 996.4L1479.6 1000.0L1479.1 1004.1L1477.5 1008.0L1474.6 1009.5L1471.9 1011.1L1469.0 1012.5L1466.9 1015.1L1467.1 1018.5L1466.0 1021.4L1464.1 1024.1L1464.1 1027.4L1461.9 1030.0L1461.0 1033.0L1459.0 1036.2L1458.8 1040.0L1458.3 1043.6L1456.7 1047.0M1058.3 815.0L1061.1 813.7L1063.9 812.7L1066.4 810.7L1069.1 809.5L1071.9 808.3L1074.8 807.5L1077.8 806.7L1080.7 809.2L1083.3 812.0L1085.9 809.8L1088.6 808.0L1091.7 806.7L1095.3 806.5L1098.6 808.2L1102.0 809.5L1105.6 809.4L1109.1 808.3L1112.6 806.8L1116.1 805.7L1119.4 804.0L1118.7 800.3L1119.9 796.5L1119.4 792.8L1122.5 792.9L1125.6 793.2L1128.8 793.5L1131.9 793.3L1135.0 793.1L1138.2 793.1L1141.3 793.2L1144.4 794.0L1147.2 796.2L1150.0 798.3L1153.3 797.5L1156.7 797.4L1159.8 795.6L1163.3 795.8L1166.7 795.6L1169.1 793.2L1169.7 789.6L1172.0 787.0M1180.6 784.0L1180.8 787.1L1181.2 790.2L1182.0 793.3L1180.7 796.5L1182.5 799.5L1181.8 802.7L1183.4 805.7L1183.9 808.8L1183.3 812.0L1186.8 813.8L1190.7 813.9L1194.4 815.0L1198.4 815.0L1201.9 816.6L1205.6 817.8L1201.9 818.9L1198.0 819.2L1194.4 820.6L1190.9 822.3L1187.1 823.0L1183.3 823.3L1182.3 827.5L1183.3 831.7L1185.7 834.8L1189.4 836.7L1191.7 840.0L1195.9 839.8L1200.0 840.2M1200.0 840.0L1197.4 841.7L1194.3 842.4L1191.5 843.9L1188.5 844.8L1185.8 846.3L1183.3 848.3L1183.9 851.7L1184.1 855.3L1184.8 858.7L1186.0 862.0L1182.5 861.4L1179.0 862.1L1175.5 861.4L1172.0 862.0L1171.5 866.3L1172.0 870.6L1173.9 873.1L1177.4 873.4L1178.9 876.4L1182.5 876.6L1184.0 879.7L1186.7 881.1L1189.2 882.7L1191.7 884.4L1189.4 886.7L1188.7 889.9L1187.6 892.9L1186.0 895.6L1187.0 898.6L1189.0 901.0L1185.1 901.2L1181.5 902.8L1177.8 904.0L1174.0 903.3L1170.4 902.1L1166.7 901.0L1163.9 903.9L1161.0 906.7M1290.7 505.2L1290.7 508.5L1292.1 511.5L1292.4 514.8L1292.6 518.0L1290.6 520.8L1289.1 523.8L1287.4 526.7L1285.2 529.3L1285.0 533.1L1285.3 536.7L1286.6 540.3L1287.0 544.0L1287.1 547.0L1287.7 550.0L1287.4 553.0L1287.8 556.0L1287.0 559.0L1289.5 560.9L1292.1 562.7L1295.3 563.7L1296.9 567.0L1300.0 568.0L1298.1 570.4L1295.1 571.8L1293.0 574.0L1290.6 576.0L1289.6 579.3L1287.0 581.0L1284.8 583.4L1281.8 584.9L1280.9 588.5L1277.8 590.0L1275.0 592.4L1271.2 592.9L1268.1 594.5L1264.8 596.0L1261.5 593.2L1257.4 592.0L1255.1 594.2L1253.7 597.0L1251.9 599.6L1252.1 603.6L1254.3 607.0L1255.6 610.7L1255.2 613.7L1254.4 616.6L1254.7 619.7L1254.4 622.7L1253.7 625.6L1256.3 628.1L1259.5 629.9L1261.4 633.3L1264.8 634.8L1267.4 636.9L1270.4 638.4L1273.7 639.5L1276.0 642.0L1279.0 644.7L1281.5 647.8L1284.4 649.0L1287.0 650.7L1289.8 652.1L1292.6 653.3L1291.1 656.9L1290.3 660.5L1290.7 664.4M1145.0 562.5L1150.0 562.6L1152.4 560.1L1154.8 557.6L1157.6 555.4L1160.6 553.5L1162.1 550.0L1164.8 547.8L1166.4 545.0L1168.5 542.5L1168.8 539.1L1170.6 536.4L1173.4 534.3L1174.0 531.0L1176.1 528.7L1176.9 525.7L1177.6 522.6L1180.5 520.7L1181.6 517.9L1183.3 515.3L1185.1 512.8L1186.3 510.1L1187.0 507.0L1188.3 503.8L1189.3 500.5L1191.1 497.5L1193.0 494.7L1194.5 491.6L1196.0 488.5L1198.0 486.1L1200.4 484.2L1203.4 483.1L1205.6 481.0M1150.0 570.0L1151.7 572.6L1154.0 574.7L1155.6 577.4L1153.6 580.4L1153.5 583.8L1153.8 587.4L1151.9 590.4M1150.0 607.0L1152.6 608.7L1154.6 611.2L1157.4 612.6L1156.4 615.6L1154.3 618.0L1154.3 621.4L1151.9 623.7" stroke="#232323" stroke-width="1.4" fill="none" stroke-linejoin="round"/><polygon points="1503,877 1513,876 1513.5,887 1507,887.5" fill="none" stroke="#232323" stroke-width="1.2"/><polygon points="1208,781 1215,779 1214,792 1209,796" fill="none" stroke="#232323" stroke-width="1.2"/><defs><radialGradient id="rg" cx="1074.4" cy="359.4" r="170" gradientUnits="userSpaceOnUse"><stop offset="0" stop-color="#000" stop-opacity="0.95"/><stop offset="0.35" stop-color="#000" stop-opacity="0.6"/><stop offset="1" stop-color="#000" stop-opacity="0"/></radialGradient><radialGradient id="rg2" cx="1074.4" cy="359.4" r="110" gradientUnits="userSpaceOnUse"><stop offset="0" stop-color="#000" stop-opacity="0.9"/><stop offset="0.4" stop-color="#000" stop-opacity="0.45"/><stop offset="1" stop-color="#000" stop-opacity="0"/></radialGradient></defs><clipPath id="landclip"><polygon points="500,125 962,125 965,133 969,146.5 976,163 983,179 988,197.5 997,220.6 1004,239 1011,258 1020,281 1030,299 1044,322.5 1062,346 1074,359.6 1091,378 1123,403 1154,422 1189,436 1192,456 1208,466 1230,479 1255,485 1280,497 1311.5,504.3 1340,506.9 1360.7,503 1402.2,495.2 1433.3,495.2 1459.3,488.7 1485.2,482.2 1498.2,482.2 1508.5,486.1 1518.9,492.6 1526.7,503 1530.6,516 1533.2,526.3 1529.3,536.7 1521.5,547 1506,557.4 1487.8,567.8 1474.8,578.2 1469.6,591.1 1471,606.7 1480,622.2 1495.6,635.2 1511.1,643 1537,653.3 1563,663.7 1588.9,674 1601,681 1626,689 1646,697 1683,706 1703,714 1744,724 1774,736 1799,750 1817,767 1825,772 1846,787 1866,795 1897,803 1920,814 1926,817 1926,941 1920,942 1885.2,946 1872.2,948.5 1846.3,938.2 1820.4,930.4 1799.6,921.3 1804.8,914.8 1807.4,907 1797,899.3 1784,894 1768.5,891.5 1750.4,899.3 1734.8,912.2 1719.3,933 1708.9,956.3 1698.5,982.2 1688.2,1005.6 1677.8,1026.3 1670,1047 1666,1056 1347,1056 1344,1047 1322,1036 1306,1030 1283,1016 1272,1011 1278,1002 1281,986 1292,977 1292,969 1278,941 1261,916 1244,894 1231,886 1217,897 1206,897 1192,902 1178,903 1165.5,906 1152.5,912 1134,924 1132,921.4 1136,906.5 1142,906 1150,900.7 1152.5,894 1159,888 1167,882.6 1163,872 1156,867 1145,864 1134,855 1127,849 1116,843 1108,846 1103,854 1098,859 1092,858.6 1093,854 1085,851.5 1077,849 1072,853 1076,864 1075,863 1064,862 1066,849 1064,838.5 1062,828 1057,818 1049,810 1044,802 1026.7,780 1015.6,764.4 1002.2,748.9 988.9,735.6 977.8,728.9 968.9,726.7 960,728.9 951.1,735.6 953.3,742.2 944.4,741.1 928.9,735.6 913.3,726.7 895.6,720 882.2,718.9 877.8,722.2 864.4,724.4 851.1,731.1 842.2,741.1 835.6,743.3 828.9,737.8 825.6,726.7 817.8,713.3 806.7,702.2 793.3,693.3 780,688.4 766.7,688.9 757.8,684.4 751.1,680 740,677.8 732.2,681.1 722.2,666.7 713.3,653.3 700,637.8 677,617 652,600 641,594 638,583 630,561 616,542 599,533 580,519 563,508 548,511 536,492 524,472 508,442 500,430"/></clipPath><defs><radialGradient id="rg3" cx="1074.4" cy="359.4" r="150" gradientUnits="userSpaceOnUse"><stop offset="0" stop-color="#000" stop-opacity="0.9"/><stop offset="0.3" stop-color="#000" stop-opacity="0.45"/><stop offset="1" stop-color="#000" stop-opacity="0"/></radialGradient></defs><g clip-path="url(#landclip)"><circle cx="1074.4" cy="359.4" r="150" fill="url(#rg3)"/><path d="M1074.4 359.4L1217.8 459.8L1209.9 470.1L1201.3 479.9L1192.1 488.9L1182.1 497.3L1171.6 504.9L1160.6 511.7L1149.0 517.7L1137.1 522.8L1124.8 527.0L1112.3 530.3L1099.5 532.6L1086.6 534.0L1073.6 534.4L1060.7 533.9L1047.8 532.4L1035.0 529.9L1022.5 526.5L1010.3 522.2L998.4 517.0L986.9 511.0Z" fill="url(#rg)" opacity="0.5"/></g><g fill="#232323"><circle cx="575.5" cy="138.5" r="5"/><circle cx="673.5" cy="203.0" r="5"/><circle cx="608.0" cy="261.0" r="5"/><circle cx="905.5" cy="236.8" r="5"/><circle cx="908.0" cy="315.5" r="5"/><circle cx="889.8" cy="389.2" r="5"/><circle cx="953.8" cy="149.9" r="5"/><circle cx="965.0" cy="146.8" r="5"/><circle cx="978.8" cy="173.0" r="5"/><circle cx="975.0" cy="176.8" r="5"/><circle cx="990.6" cy="221.8" r="5"/><circle cx="977.5" cy="243.6" r="5"/><circle cx="990.6" cy="240.5" r="5"/><circle cx="1000.0" cy="239.0" r="5"/><circle cx="957.5" cy="254.9" r="5"/><circle cx="970.6" cy="253.6" r="5"/><circle cx="988.0" cy="253.6" r="5"/><circle cx="1000.6" cy="252.4" r="5"/><circle cx="997.5" cy="260.5" r="5"/><circle cx="944.0" cy="269.0" r="5"/><circle cx="958.0" cy="280.0" r="5"/><circle cx="977.0" cy="277.0" r="5"/><circle cx="994.0" cy="278.0" r="5"/><circle cx="1008.0" cy="275.5" r="5"/><circle cx="1017.0" cy="293.0" r="5"/><circle cx="933.0" cy="301.0" r="5"/><circle cx="962.5" cy="305.0" r="5"/><circle cx="977.5" cy="303.6" r="5"/><circle cx="985.0" cy="301.8" r="5"/><circle cx="996.0" cy="301.8" r="5"/><circle cx="1007.0" cy="301.8" r="5"/><circle cx="1032.5" cy="313.0" r="5"/><circle cx="1014.0" cy="321.8" r="5"/><circle cx="965.6" cy="325.5" r="5"/><circle cx="978.0" cy="324.0" r="5"/><circle cx="992.0" cy="323.6" r="5"/><circle cx="938.0" cy="330.5" r="5"/><circle cx="1000.6" cy="332.4" r="5"/><circle cx="943.0" cy="338.0" r="5"/><circle cx="980.6" cy="343.6" r="5"/><circle cx="997.5" cy="343.6" r="5"/><circle cx="1009.0" cy="340.0" r="5"/><circle cx="1019.0" cy="343.0" r="5"/><circle cx="1036.0" cy="344.0" r="5"/><circle cx="945.0" cy="355.5" r="5"/><circle cx="977.0" cy="360.0" r="5"/><circle cx="1007.0" cy="361.8" r="5"/><circle cx="1022.0" cy="354.0" r="5"/><circle cx="1035.0" cy="360.0" r="5"/><circle cx="1041.0" cy="367.0" r="5"/><circle cx="982.0" cy="375.0" r="5"/><circle cx="995.6" cy="375.0" r="5"/><circle cx="1022.0" cy="375.0" r="5"/><circle cx="993.8" cy="385.5" r="5"/><circle cx="1004.0" cy="385.0" r="5"/><circle cx="935.0" cy="398.0" r="5"/><circle cx="993.8" cy="397.4" r="5"/><circle cx="1006.0" cy="396.8" r="5"/><circle cx="975.0" cy="407.5" r="5"/><circle cx="928.8" cy="420.6" r="5"/><circle cx="996.0" cy="409.4" r="5"/><circle cx="1012.5" cy="410.0" r="5"/><circle cx="1000.0" cy="416.0" r="5"/><circle cx="1012.5" cy="422.5" r="5"/><circle cx="1002.5" cy="426.0" r="5"/><circle cx="1025.0" cy="416.0" r="5"/><circle cx="1030.0" cy="425.0" r="5"/><circle cx="991.0" cy="433.8" r="5"/><circle cx="1011.0" cy="427.5" r="5"/><circle cx="1020.0" cy="436.0" r="5"/><circle cx="1032.5" cy="437.5" r="5"/><circle cx="1044.0" cy="439.0" r="5"/><circle cx="1056.0" cy="436.0" r="5"/><circle cx="1067.5" cy="436.0" r="5"/><circle cx="1046.0" cy="425.0" r="5"/><circle cx="1010.0" cy="441.0" r="5"/><circle cx="997.5" cy="448.8" r="5"/><circle cx="1017.5" cy="452.5" r="5"/><circle cx="1041.0" cy="451.0" r="5"/><circle cx="1067.5" cy="452.5" r="5"/><circle cx="881.0" cy="468.8" r="5"/><circle cx="903.0" cy="470.0" r="5"/><circle cx="988.8" cy="460.0" r="5"/><circle cx="1009.0" cy="460.0" r="5"/><circle cx="1040.0" cy="466.0" r="5"/><circle cx="1065.0" cy="468.8" r="5"/><circle cx="970.0" cy="470.0" r="5"/><circle cx="992.0" cy="470.6" r="5"/><circle cx="1007.0" cy="470.6" r="5"/><circle cx="1017.5" cy="478.8" r="5"/><circle cx="1039.0" cy="480.0" r="5"/><circle cx="1074.0" cy="480.0" r="5"/><circle cx="888.0" cy="488.8" r="5"/><circle cx="927.5" cy="486.9" r="5"/><circle cx="953.0" cy="486.9" r="5"/><circle cx="912.0" cy="493.8" r="5"/><circle cx="994.0" cy="482.5" r="5"/><circle cx="958.8" cy="497.5" r="5"/><circle cx="945.0" cy="500.6" r="5"/><circle cx="1000.6" cy="497.5" r="5"/><circle cx="1010.0" cy="500.6" r="5"/><circle cx="1050.0" cy="500.6" r="5"/><circle cx="1066.0" cy="507.0" r="5"/><circle cx="900.0" cy="512.5" r="5"/><circle cx="915.6" cy="519.4" r="5"/><circle cx="952.0" cy="518.8" r="5"/><circle cx="1025.0" cy="509.4" r="5"/><circle cx="997.0" cy="520.6" r="5"/><circle cx="973.0" cy="525.6" r="5"/><circle cx="963.8" cy="533.0" r="5"/><circle cx="1012.5" cy="533.0" r="5"/><circle cx="1108.8" cy="433.8" r="5"/><circle cx="1142.5" cy="440.0" r="5"/><circle cx="1167.5" cy="440.0" r="5"/><circle cx="1147.5" cy="425.0" r="5"/><circle cx="1111.0" cy="445.0" r="5"/><circle cx="1097.5" cy="457.5" r="5"/><circle cx="1110.0" cy="461.0" r="5"/><circle cx="1120.0" cy="461.0" r="5"/><circle cx="1140.0" cy="463.8" r="5"/><circle cx="1161.0" cy="462.5" r="5"/><circle cx="1187.5" cy="455.0" r="5"/><circle cx="1180.0" cy="460.0" r="5"/><circle cx="1094.0" cy="480.0" r="5"/><circle cx="1106.0" cy="472.5" r="5"/><circle cx="1116.0" cy="482.5" r="5"/><circle cx="1129.0" cy="485.0" r="5"/><circle cx="1147.5" cy="476.0" r="5"/><circle cx="1157.5" cy="476.0" r="5"/><circle cx="1182.5" cy="475.0" r="5"/><circle cx="1200.0" cy="473.8" r="5"/><circle cx="1225.0" cy="483.8" r="5"/><circle cx="1190.0" cy="490.0" r="5"/><circle cx="1206.0" cy="488.8" r="5"/><circle cx="1121.0" cy="496.0" r="5"/><circle cx="1150.0" cy="493.8" r="5"/><circle cx="1161.0" cy="496.0" r="5"/><circle cx="1246.0" cy="493.8" r="5"/><circle cx="1259.0" cy="492.5" r="5"/><circle cx="1086.0" cy="507.5" r="5"/><circle cx="1109.0" cy="510.0" r="5"/><circle cx="1132.5" cy="505.0" r="5"/><circle cx="1140.0" cy="512.5" r="5"/><circle cx="1177.5" cy="513.8" r="5"/><circle cx="1241.0" cy="507.5" r="5"/><circle cx="1225.0" cy="515.6" r="5"/><circle cx="1086.0" cy="518.8" r="5"/><circle cx="1114.0" cy="525.0" r="5"/><circle cx="1137.5" cy="531.0" r="5"/><circle cx="1157.5" cy="531.0" r="5"/><circle cx="1169.0" cy="526.0" r="5"/><circle cx="1267.5" cy="527.5" r="5"/><circle cx="1279.6" cy="507.4" r="5"/><circle cx="1263.7" cy="540.0" r="5"/><circle cx="1336.7" cy="517.7" r="5"/><circle cx="1338.5" cy="529.0" r="5"/><circle cx="1450.8" cy="505.5" r="5"/><circle cx="1427.4" cy="518.6" r="5"/><circle cx="1457.3" cy="520.5" r="5"/><circle cx="1501.3" cy="546.7" r="5"/><circle cx="1361.0" cy="543.0" r="5"/><circle cx="1323.6" cy="548.5" r="5"/><circle cx="1409.6" cy="563.5" r="5"/><circle cx="1277.8" cy="570.0" r="5"/><circle cx="1396.5" cy="576.6" r="5"/><circle cx="1439.5" cy="579.4" r="5"/><circle cx="1362.0" cy="579.4" r="5"/><circle cx="1318.0" cy="582.2" r="5"/><circle cx="1265.6" cy="588.8" r="5"/><circle cx="1281.5" cy="595.3" r="5"/><circle cx="1349.8" cy="631.8" r="5"/><circle cx="1404.0" cy="634.6" r="5"/><circle cx="1278.7" cy="657.0" r="5"/><circle cx="1353.5" cy="668.2" r="5"/><circle cx="1516.2" cy="658.9" r="5"/><circle cx="1055.0" cy="538.8" r="5"/><circle cx="962.0" cy="591.9" r="5"/><circle cx="950.6" cy="628.0" r="5"/><circle cx="1067.5" cy="566.0" r="5"/><circle cx="1073.8" cy="615.0" r="5"/><circle cx="1077.5" cy="621.0" r="5"/><circle cx="1067.5" cy="633.8" r="5"/><circle cx="1060.6" cy="643.8" r="5"/><circle cx="1198.8" cy="538.8" r="5"/><circle cx="1213.8" cy="542.5" r="5"/><circle cx="1243.8" cy="536.2" r="5"/><circle cx="1228.8" cy="558.8" r="5"/><circle cx="1100.0" cy="547.5" r="5"/><circle cx="1121.0" cy="552.5" r="5"/><circle cx="1158.8" cy="545.0" r="5"/><circle cx="1107.0" cy="583.8" r="5"/><circle cx="1117.0" cy="585.6" r="5"/><circle cx="1165.6" cy="590.6" r="5"/><circle cx="1115.0" cy="601.9" r="5"/><circle cx="1142.0" cy="610.0" r="5"/><circle cx="1091.0" cy="612.5" r="5"/><circle cx="1105.0" cy="610.6" r="5"/><circle cx="1115.0" cy="615.0" r="5"/><circle cx="1190.6" cy="619.4" r="5"/><circle cx="1218.8" cy="617.5" r="5"/><circle cx="1136.9" cy="625.6" r="5"/><circle cx="1197.0" cy="631.9" r="5"/><circle cx="1100.0" cy="638.8" r="5"/><circle cx="1235.0" cy="642.5" r="5"/><circle cx="1059.4" cy="670.5" r="5"/><circle cx="1074.8" cy="696.5" r="5"/><circle cx="1090.2" cy="716.7" r="5"/><circle cx="1081.2" cy="746.7" r="5"/><circle cx="1116.9" cy="771.0" r="5"/><circle cx="1110.4" cy="779.9" r="5"/><circle cx="1125.8" cy="779.9" r="5"/><circle cx="1090.2" cy="803.4" r="5"/><circle cx="1112.0" cy="815.5" r="5"/><circle cx="1169.5" cy="807.4" r="5"/><circle cx="748.0" cy="671.0" r="5"/><circle cx="796.7" cy="669.4" r="5"/><circle cx="1109.7" cy="840.0" r="5"/><circle cx="1141.7" cy="914.5" r="5"/><circle cx="1212.5" cy="862.5" r="5"/><circle cx="1375.0" cy="919.5" r="5"/><circle cx="1429.6" cy="933.0" r="5"/><circle cx="1482.0" cy="958.5" r="5"/><circle cx="1405.6" cy="894.8" r="5"/><circle cx="1441.0" cy="901.0" r="5"/><circle cx="1421.0" cy="853.0" r="5"/><circle cx="1444.4" cy="860.5" r="5"/><circle cx="1470.0" cy="873.0" r="5"/><circle cx="1477.8" cy="845.0" r="5"/><circle cx="1502.5" cy="910.0" r="5"/><circle cx="1411.0" cy="797.0" r="5"/><circle cx="1439.0" cy="788.0" r="5"/><circle cx="1522.8" cy="837.9" r="5"/><circle cx="1579.6" cy="873.0" r="5"/><circle cx="1592.0" cy="903.0" r="5"/><circle cx="1633.8" cy="886.5" r="5"/><circle cx="1696.0" cy="858.0" r="5"/><circle cx="1767.5" cy="816.5" r="5"/><circle cx="1809.0" cy="834.0" r="5"/><circle cx="1553.0" cy="676.0" r="5"/><circle cx="1556.3" cy="721.9" r="5"/><circle cx="1586.9" cy="733.0" r="5"/><circle cx="1434.0" cy="679.4" r="5"/><circle cx="1439.6" cy="691.8" r="5"/><circle cx="1480.0" cy="681.6" r="5"/><circle cx="1304.6" cy="732.2" r="5"/><circle cx="1461.0" cy="748.0" r="5"/><circle cx="1426.0" cy="767.0" r="5"/><circle cx="1424.0" cy="867.0" r="5"/><circle cx="1041.9" cy="431.5" r="5"/><circle cx="1066.5" cy="418.3" r="5"/><circle cx="1056.8" cy="423.6" r="5"/><circle cx="1067.4" cy="404.3" r="5"/><circle cx="1086.7" cy="416.6" r="5"/><circle cx="1091.0" cy="431.5" r="5"/><circle cx="1039.3" cy="416.6" r="5"/><circle cx="1029.6" cy="407.8" r="5"/><circle cx="1114.2" cy="470.2" r="5"/><circle cx="1025.8" cy="453.1" r="5"/><circle cx="1155.4" cy="436.1" r="5"/><circle cx="1079.6" cy="507.4" r="5"/><circle cx="1070.6" cy="409.7" r="5"/><circle cx="981.0" cy="502.0" r="5"/><circle cx="1085.5" cy="411.0" r="5"/><circle cx="1103.4" cy="484.3" r="5"/><circle cx="1108.4" cy="486.0" r="5"/><circle cx="1101.2" cy="436.0" r="5"/><circle cx="974.9" cy="502.7" r="5"/><circle cx="1029.7" cy="488.9" r="5"/><circle cx="1115.7" cy="421.8" r="5"/><circle cx="1106.3" cy="403.1" r="5"/><circle cx="1054.8" cy="454.5" r="5"/><circle cx="994.9" cy="492.7" r="5"/><circle cx="999.6" cy="481.9" r="5"/><circle cx="1090.7" cy="461.3" r="5"/><circle cx="1175.1" cy="456.9" r="5"/><circle cx="1129.7" cy="417.3" r="5"/><circle cx="1165.2" cy="491.2" r="5"/><circle cx="1141.2" cy="428.7" r="5"/><circle cx="1029.6" cy="479.8" r="5"/><circle cx="1055.8" cy="445.2" r="5"/><circle cx="1154.7" cy="452.8" r="5"/><circle cx="1122.9" cy="451.3" r="5"/><circle cx="1095.1" cy="515.7" r="5"/><circle cx="1008.4" cy="495.6" r="5"/><circle cx="1119.2" cy="412.7" r="5"/><circle cx="1048.4" cy="524.6" r="5"/><circle cx="1194.3" cy="477.8" r="5"/><circle cx="1025.7" cy="472.9" r="5"/><circle cx="1097.1" cy="413.3" r="5"/><circle cx="1170.7" cy="477.1" r="5"/><circle cx="1082.2" cy="442.2" r="5"/></g><path d="M1074.4 359.4L575.5 138.5M1074.4 359.4L673.5 203.0M1074.4 359.4L608.0 261.0M1074.4 359.4L905.5 236.8M1074.4 359.4L908.0 315.5M1074.4 359.4L889.8 389.2M1074.4 359.4L953.8 149.9M1074.4 359.4L965.0 146.8M1074.4 359.4L978.8 173.0M1074.4 359.4L975.0 176.8M1074.4 359.4L990.6 221.8M1074.4 359.4L977.5 243.6M1074.4 359.4L990.6 240.5M1074.4 359.4L1000.0 239.0M1074.4 359.4L957.5 254.9M1074.4 359.4L970.6 253.6M1074.4 359.4L988.0 253.6M1074.4 359.4L1000.6 252.4M1074.4 359.4L997.5 260.5M1074.4 359.4L944.0 269.0M1074.4 359.4L958.0 280.0M1074.4 359.4L977.0 277.0M1074.4 359.4L994.0 278.0M1074.4 359.4L1008.0 275.5M1074.4 359.4L1017.0 293.0M1074.4 359.4L933.0 301.0M1074.4 359.4L962.5 305.0M1074.4 359.4L977.5 303.6M1074.4 359.4L985.0 301.8M1074.4 359.4L996.0 301.8M1074.4 359.4L1007.0 301.8M1074.4 359.4L1032.5 313.0M1074.4 359.4L1014.0 321.8M1074.4 359.4L965.6 325.5M1074.4 359.4L978.0 324.0M1074.4 359.4L992.0 323.6M1074.4 359.4L938.0 330.5M1074.4 359.4L1000.6 332.4M1074.4 359.4L943.0 338.0M1074.4 359.4L980.6 343.6M1074.4 359.4L997.5 343.6M1074.4 359.4L1009.0 340.0M1074.4 359.4L1019.0 343.0M1074.4 359.4L1036.0 344.0M1074.4 359.4L945.0 355.5M1074.4 359.4L977.0 360.0M1074.4 359.4L1007.0 361.8M1074.4 359.4L1022.0 354.0M1074.4 359.4L1035.0 360.0M1074.4 359.4L1041.0 367.0M1074.4 359.4L982.0 375.0M1074.4 359.4L995.6 375.0M1074.4 359.4L1022.0 375.0M1074.4 359.4L993.8 385.5M1074.4 359.4L1004.0 385.0M1074.4 359.4L935.0 398.0M1074.4 359.4L993.8 397.4M1074.4 359.4L1006.0 396.8M1074.4 359.4L975.0 407.5M1074.4 359.4L928.8 420.6M1074.4 359.4L996.0 409.4M1074.4 359.4L1012.5 410.0M1074.4 359.4L1000.0 416.0M1074.4 359.4L1012.5 422.5M1074.4 359.4L1002.5 426.0M1074.4 359.4L1025.0 416.0M1074.4 359.4L1030.0 425.0M1074.4 359.4L991.0 433.8M1074.4 359.4L1011.0 427.5M1074.4 359.4L1020.0 436.0M1074.4 359.4L1032.5 437.5M1074.4 359.4L1044.0 439.0M1074.4 359.4L1056.0 436.0M1074.4 359.4L1067.5 436.0M1074.4 359.4L1046.0 425.0M1074.4 359.4L1010.0 441.0M1074.4 359.4L997.5 448.8M1074.4 359.4L1017.5 452.5M1074.4 359.4L1041.0 451.0M1074.4 359.4L1067.5 452.5M1074.4 359.4L881.0 468.8M1074.4 359.4L903.0 470.0M1074.4 359.4L988.8 460.0M1074.4 359.4L1009.0 460.0M1074.4 359.4L1040.0 466.0M1074.4 359.4L1065.0 468.8M1074.4 359.4L970.0 470.0M1074.4 359.4L992.0 470.6M1074.4 359.4L1007.0 470.6M1074.4 359.4L1017.5 478.8M1074.4 359.4L1039.0 480.0M1074.4 359.4L1074.0 480.0M1074.4 359.4L888.0 488.8M1074.4 359.4L927.5 486.9M1074.4 359.4L953.0 486.9M1074.4 359.4L912.0 493.8M1074.4 359.4L994.0 482.5M1074.4 359.4L958.8 497.5M1074.4 359.4L945.0 500.6M1074.4 359.4L1000.6 497.5M1074.4 359.4L1010.0 500.6M1074.4 359.4L1050.0 500.6M1074.4 359.4L1066.0 507.0M1074.4 359.4L900.0 512.5M1074.4 359.4L915.6 519.4M1074.4 359.4L952.0 518.8M1074.4 359.4L1025.0 509.4M1074.4 359.4L997.0 520.6M1074.4 359.4L973.0 525.6M1074.4 359.4L963.8 533.0M1074.4 359.4L1012.5 533.0M1074.4 359.4L1108.8 433.8M1074.4 359.4L1142.5 440.0M1074.4 359.4L1167.5 440.0M1074.4 359.4L1147.5 425.0M1074.4 359.4L1111.0 445.0M1074.4 359.4L1097.5 457.5M1074.4 359.4L1110.0 461.0M1074.4 359.4L1120.0 461.0M1074.4 359.4L1140.0 463.8M1074.4 359.4L1161.0 462.5M1074.4 359.4L1187.5 455.0M1074.4 359.4L1180.0 460.0M1074.4 359.4L1094.0 480.0M1074.4 359.4L1106.0 472.5M1074.4 359.4L1116.0 482.5M1074.4 359.4L1129.0 485.0M1074.4 359.4L1147.5 476.0M1074.4 359.4L1157.5 476.0M1074.4 359.4L1182.5 475.0M1074.4 359.4L1200.0 473.8M1074.4 359.4L1225.0 483.8M1074.4 359.4L1190.0 490.0M1074.4 359.4L1206.0 488.8M1074.4 359.4L1121.0 496.0M1074.4 359.4L1150.0 493.8M1074.4 359.4L1161.0 496.0M1074.4 359.4L1246.0 493.8M1074.4 359.4L1259.0 492.5M1074.4 359.4L1086.0 507.5M1074.4 359.4L1109.0 510.0M1074.4 359.4L1132.5 505.0M1074.4 359.4L1140.0 512.5M1074.4 359.4L1177.5 513.8M1074.4 359.4L1241.0 507.5M1074.4 359.4L1225.0 515.6M1074.4 359.4L1086.0 518.8M1074.4 359.4L1114.0 525.0M1074.4 359.4L1137.5 531.0M1074.4 359.4L1157.5 531.0M1074.4 359.4L1169.0 526.0M1074.4 359.4L1267.5 527.5M1074.4 359.4L1279.6 507.4M1074.4 359.4L1263.7 540.0M1074.4 359.4L1336.7 517.7M1074.4 359.4L1338.5 529.0M1074.4 359.4L1450.8 505.5M1074.4 359.4L1427.4 518.6M1074.4 359.4L1457.3 520.5M1074.4 359.4L1501.3 546.7M1074.4 359.4L1361.0 543.0M1074.4 359.4L1323.6 548.5M1074.4 359.4L1409.6 563.5M1074.4 359.4L1277.8 570.0M1074.4 359.4L1396.5 576.6M1074.4 359.4L1439.5 579.4M1074.4 359.4L1362.0 579.4M1074.4 359.4L1318.0 582.2M1074.4 359.4L1265.6 588.8M1074.4 359.4L1281.5 595.3M1074.4 359.4L1349.8 631.8M1074.4 359.4L1404.0 634.6M1074.4 359.4L1278.7 657.0M1074.4 359.4L1353.5 668.2M1074.4 359.4L1516.2 658.9M1074.4 359.4L1055.0 538.8M1074.4 359.4L962.0 591.9M1074.4 359.4L950.6 628.0M1074.4 359.4L1067.5 566.0M1074.4 359.4L1073.8 615.0M1074.4 359.4L1077.5 621.0M1074.4 359.4L1067.5 633.8M1074.4 359.4L1060.6 643.8M1074.4 359.4L1198.8 538.8M1074.4 359.4L1213.8 542.5M1074.4 359.4L1243.8 536.2M1074.4 359.4L1228.8 558.8M1074.4 359.4L1100.0 547.5M1074.4 359.4L1121.0 552.5M1074.4 359.4L1158.8 545.0M1074.4 359.4L1107.0 583.8M1074.4 359.4L1117.0 585.6M1074.4 359.4L1165.6 590.6M1074.4 359.4L1115.0 601.9M1074.4 359.4L1142.0 610.0M1074.4 359.4L1091.0 612.5M1074.4 359.4L1105.0 610.6M1074.4 359.4L1115.0 615.0M1074.4 359.4L1190.6 619.4M1074.4 359.4L1218.8 617.5M1074.4 359.4L1136.9 625.6M1074.4 359.4L1197.0 631.9M1074.4 359.4L1100.0 638.8M1074.4 359.4L1235.0 642.5M1074.4 359.4L1059.4 670.5M1074.4 359.4L1074.8 696.5M1074.4 359.4L1090.2 716.7M1074.4 359.4L1081.2 746.7M1074.4 359.4L1116.9 771.0M1074.4 359.4L1110.4 779.9M1074.4 359.4L1125.8 779.9M1074.4 359.4L1090.2 803.4M1074.4 359.4L1112.0 815.5M1074.4 359.4L1169.5 807.4M1074.4 359.4L748.0 671.0M1074.4 359.4L796.7 669.4M1074.4 359.4L1109.7 840.0M1074.4 359.4L1141.7 914.5M1074.4 359.4L1212.5 862.5M1074.4 359.4L1375.0 919.5M1074.4 359.4L1429.6 933.0M1074.4 359.4L1482.0 958.5M1074.4 359.4L1405.6 894.8M1074.4 359.4L1441.0 901.0M1074.4 359.4L1421.0 853.0M1074.4 359.4L1444.4 860.5M1074.4 359.4L1470.0 873.0M1074.4 359.4L1477.8 845.0M1074.4 359.4L1502.5 910.0M1074.4 359.4L1411.0 797.0M1074.4 359.4L1439.0 788.0M1074.4 359.4L1522.8 837.9M1074.4 359.4L1579.6 873.0M1074.4 359.4L1592.0 903.0M1074.4 359.4L1633.8 886.5M1074.4 359.4L1696.0 858.0M1074.4 359.4L1767.5 816.5M1074.4 359.4L1809.0 834.0M1074.4 359.4L1553.0 676.0M1074.4 359.4L1556.3 721.9M1074.4 359.4L1586.9 733.0M1074.4 359.4L1434.0 679.4M1074.4 359.4L1439.6 691.8M1074.4 359.4L1480.0 681.6M1074.4 359.4L1304.6 732.2M1074.4 359.4L1461.0 748.0M1074.4 359.4L1426.0 767.0M1074.4 359.4L1424.0 867.0M1074.4 359.4L1041.9 431.5M1074.4 359.4L1066.5 418.3M1074.4 359.4L1056.8 423.6M1074.4 359.4L1067.4 404.3M1074.4 359.4L1086.7 416.6M1074.4 359.4L1091.0 431.5M1074.4 359.4L1039.3 416.6M1074.4 359.4L1029.6 407.8M1074.4 359.4L1114.2 470.2M1074.4 359.4L1025.8 453.1M1074.4 359.4L1155.4 436.1M1074.4 359.4L1079.6 507.4M1074.4 359.4L1070.6 409.7M1074.4 359.4L981.0 502.0M1074.4 359.4L1085.5 411.0M1074.4 359.4L1103.4 484.3M1074.4 359.4L1108.4 486.0M1074.4 359.4L1101.2 436.0M1074.4 359.4L974.9 502.7M1074.4 359.4L1029.7 488.9M1074.4 359.4L1115.7 421.8M1074.4 359.4L1106.3 403.1M1074.4 359.4L1054.8 454.5M1074.4 359.4L994.9 492.7M1074.4 359.4L999.6 481.9M1074.4 359.4L1090.7 461.3M1074.4 359.4L1175.1 456.9M1074.4 359.4L1129.7 417.3M1074.4 359.4L1165.2 491.2M1074.4 359.4L1141.2 428.7M1074.4 359.4L1029.6 479.8M1074.4 359.4L1055.8 445.2M1074.4 359.4L1154.7 452.8M1074.4 359.4L1122.9 451.3M1074.4 359.4L1095.1 515.7M1074.4 359.4L1008.4 495.6M1074.4 359.4L1119.2 412.7M1074.4 359.4L1048.4 524.6M1074.4 359.4L1194.3 477.8M1074.4 359.4L1025.7 472.9M1074.4 359.4L1097.1 413.3M1074.4 359.4L1170.7 477.1M1074.4 359.4L1082.2 442.2M1074.4 359.4L770.6 87.7M1074.4 359.4L800.6 87.7M1074.4 359.4L830.6 87.7M1074.4 359.4L841.7 87.7M1074.4 359.4L844.7 87.7M1074.4 359.4L890.6 87.7M1074.4 359.4L902.6 87.7M1074.4 359.4L923.6 87.7M1074.4 359.4L937.1 87.7M1074.4 359.4L941.6 87.7M1074.4 359.4L946.7 87.7" stroke="#000" stroke-width="1" fill="none"/><polygon points="1074.4,348.4 1085.4,359.4 1074.4,370.4 1063.4,359.4" fill="#4faa4a" stroke="#3a8a36" stroke-width="1.2"/></svg>
<div class="a" style="left:507px;top:132px;width:1413px;height:1px;background:#c8c8c8;"></div>
<div class="a" style="left:507px;top:132px;width:1px;height:915px;background:#c8c8c8;"></div>
<div class="a" style="left:1919px;top:132px;width:1px;height:915px;background:#c8c8c8;"></div>
<svg style="left:515px;top:970px" width="130" height="75" viewBox="515 970 130 75">
<defs><linearGradient id="sh" x1="0" y1="0" x2="1" y2="1"><stop offset="0" stop-color="#fff"/><stop offset="1" stop-color="#bdbdbd"/></linearGradient></defs>
<path d="M519 996L590 1035L639 1038L615 1012L612 1024L560 1000z" fill="url(#sh)"/>
<ellipse cx="537" cy="986" rx="8" ry="11" fill="none" stroke="#d8dc50" stroke-width="3.5"/>
<path d="M524 995L545 976" stroke="#20a020" stroke-width="1.6"/><path d="M545 976l-6 1 5 5z" fill="#20a020"/>
<ellipse cx="553" cy="991" rx="9" ry="13" fill="none" stroke="#e8ee70" stroke-width="4.5"/>
<path d="M540 1003L565 975" stroke="#108a10" stroke-width="2"/><path d="M565 974l-8 2 6 6z" fill="#108a10"/>
<circle cx="587.3" cy="997.4" r="21" fill="none" stroke="#7aaa28" stroke-width="10"/>
<path d="M584 995L611 1022" stroke="#fff" stroke-width="12"/>
<path d="M585 995L611 1021" stroke="#66a030" stroke-width="8"/>
<path d="M582 992L590 1000" stroke="#f08020" stroke-width="8"/>
<path d="M589 999L592 1002" stroke="#f4e040" stroke-width="8"/>
</svg>
<div class="t" style="left:133.2px;top:187.20px;font-size:15px;color:#000;font-weight:bold;font-style:normal;transform:scaleX(0.9275);">pescara</div>
<div class="t" style="left:133.2px;top:208.60px;font-size:15px;color:#000;font-weight:normal;font-style:normal;transform:scaleX(0.8774);">OUTPUT</div>
<div class="t" style="left:157.4px;top:230.90px;font-size:15px;color:#000;font-weight:bold;font-style:normal;transform:scaleX(0.9446);">hub_pendolarismo_studenti_espressione</div>
<div class="t" style="left:157.4px;top:252.90px;font-size:15px;color:#7a7a7a;font-weight:bold;font-style:italic;transform:scaleX(0.9741);">hub_pendolarismo_studenti_mmqgis</div>
<div class="t" style="left:157.4px;top:274.90px;font-size:15px;color:#7a7a7a;font-weight:bold;font-style:italic;transform:scaleX(0.9719);">Linee del centro</div>
<div class="t" style="left:133.2px;top:296.80px;font-size:15px;color:#000;font-weight:normal;font-style:normal;transform:scaleX(0.9439);">DATI</div>
<div class="t" style="left:135.4px;top:318.90px;font-size:15px;color:#000;font-weight:bold;font-style:normal;transform:scaleX(0.9351);"><u>studenti_verso_pescara</u></div>
<div class="t" style="left:158.4px;top:340.90px;font-size:15px;color:#000;font-weight:bold;font-style:normal;transform:scaleX(0.9500);">comuni_origine</div>
<div class="t" style="left:158.4px;top:362.90px;font-size:15px;color:#7a7a7a;font-weight:bold;font-style:italic;transform:scaleX(0.9988);">centroidi_comuni_italia_2019</div>
<div class="t" style="left:157.4px;top:384.70px;font-size:15px;color:#000;font-weight:bold;font-style:normal;transform:scaleX(0.9877);">ProvCM01012019_g_WGS84</div>
<div class="t" style="left:110.2px;top:526.00px;font-size:15px;color:#000;font-weight:normal;font-style:normal;transform:scaleX(0.9927);">Preferiti</div>
<div class="t" style="left:110.2px;top:548.00px;font-size:15px;color:#000;font-weight:normal;font-style:normal;transform:scaleX(0.9902);">Segnalibri Spaziali</div>
<div class="t" style="left:110.2px;top:570.00px;font-size:15px;color:#000;font-weight:normal;font-style:normal;transform:scaleX(1.0072);">Home</div>
<div class="t" style="left:110.2px;top:592.00px;font-size:15px;color:#000;font-weight:normal;font-style:normal;transform:scaleX(0.9339);">C:\</div>
<div class="t" style="left:110.2px;top:614.00px;font-size:15px;color:#000;font-weight:normal;font-style:normal;transform:scaleX(1.0173);">D:\</div>
<div class="t" style="left:110.2px;top:636.00px;font-size:15px;color:#000;font-weight:normal;font-style:normal;transform:scaleX(0.9269);">E:\</div>
<div class="t" style="left:110.2px;top:658.00px;font-size:15px;color:#000;font-weight:normal;font-style:normal;transform:scaleX(0.9294);">GeoPackage</div>
<div class="t" style="left:110.2px;top:680.00px;font-size:15px;color:#000;font-weight:normal;font-style:normal;transform:scaleX(0.9818);">SpatiaLite</div>
<div class="t" style="left:110.2px;top:702.00px;font-size:15px;color:#000;font-weight:normal;font-style:normal;transform:scaleX(0.8737);">PostGIS</div>
<div class="t" style="left:110.2px;top:724.00px;font-size:15px;color:#000;font-weight:normal;font-style:normal;transform:scaleX(0.8874);">MSSQL</div>
<div class="t" style="left:110.2px;top:746.00px;font-size:15px;color:#000;font-weight:normal;font-style:normal;transform:scaleX(0.9688);">Oracle</div>
<div class="t" style="left:110.2px;top:768.00px;font-size:15px;color:#000;font-weight:normal;font-style:normal;transform:scaleX(0.9390);">DB2</div>
<div class="t" style="left:110.2px;top:790.00px;font-size:15px;color:#000;font-weight:normal;font-style:normal;transform:scaleX(0.9625);">WMS/WMTS</div>
<div class="t" style="left:110.2px;top:812.00px;font-size:15px;color:#000;font-weight:normal;font-style:normal;transform:scaleX(0.9278);">XYZ Tiles</div>
<div class="t" style="left:110.2px;top:834.00px;font-size:15px;color:#000;font-weight:normal;font-style:normal;transform:scaleX(0.8744);">WCS</div>
<div class="t" style="left:110.2px;top:856.00px;font-size:15px;color:#000;font-weight:normal;font-style:normal;transform:scaleX(0.9267);">WFS / OGC API - Features</div>
<div class="t" style="left:110.2px;top:878.00px;font-size:15px;color:#000;font-weight:normal;font-style:normal;transform:scaleX(0.9015);">OWS</div>
<div class="t" style="left:110.2px;top:900.00px;font-size:15px;color:#000;font-weight:normal;font-style:normal;transform:scaleX(0.9513);">ArcGisMapServer</div>
<div class="t" style="left:110.2px;top:922.00px;font-size:15px;color:#000;font-weight:normal;font-style:normal;transform:scaleX(0.9349);">ArcGisFeatureServer</div>
<div class="t" style="left:110.2px;top:944.00px;font-size:15px;color:#000;font-weight:normal;font-style:normal;transform:scaleX(0.9874);">GeoNode</div>
<div class="t" style="left:321px;top:1058.85px;font-size:14px;color:#000;font-weight:normal;font-style:normal;transform:scaleX(0.9127);">Pan distance 16,6929 km (41,655087°O)</div>
<div class="t" style="left:906.3px;top:1058.45px;font-size:14px;color:#000;font-weight:normal;font-style:normal;transform:scaleX(0.8936);">Coordinate</div>
<div class="t" style="left:1125.9px;top:1058.45px;font-size:14px;color:#000;font-weight:normal;font-style:normal;transform:scaleX(0.8681);">Scala</div>
<div class="t" style="left:1290.3px;top:1058.45px;font-size:14px;color:#000;font-weight:normal;font-style:normal;transform:scaleX(0.9160);">Lente d'ingrandimento</div>
<div class="t" style="left:1521.9px;top:1058.45px;font-size:14px;color:#000;font-weight:normal;font-style:normal;transform:scaleX(0.8804);">Rotazione</div>
<div class="t" style="left:1705.2px;top:1058.45px;font-size:14px;color:#000;font-weight:normal;font-style:normal;transform:scaleX(0.8857);">Visualizza</div>
<div class="t" style="left:1802.2px;top:1058.45px;font-size:14px;color:#000;font-weight:normal;font-style:normal;transform:scaleX(0.8517);">EPSG:32632</div>
<svg style="left:6.0px;top:65.0px" width="4" height="16" viewBox="0 0 4 16"><rect x="0" y="0" width="1" height="1" fill="#b8b8b8"/><rect x="0" y="3" width="1" height="1" fill="#b8b8b8"/><rect x="0" y="6" width="1" height="1" fill="#b8b8b8"/><rect x="0" y="9" width="1" height="1" fill="#b8b8b8"/><rect x="0" y="12" width="1" height="1" fill="#b8b8b8"/><rect x="0" y="15" width="1" height="1" fill="#b8b8b8"/><rect x="3" y="0" width="1" height="1" fill="#b8b8b8"/><rect x="3" y="3" width="1" height="1" fill="#b8b8b8"/><rect x="3" y="6" width="1" height="1" fill="#b8b8b8"/><rect x="3" y="9" width="1" height="1" fill="#b8b8b8"/><rect x="3" y="12" width="1" height="1" fill="#b8b8b8"/><rect x="3" y="15" width="1" height="1" fill="#b8b8b8"/></svg>
<svg style="left:19.0px;top:61.0px" width="24" height="24" viewBox="0 0 24 24"><path d="M5 1.5h9l5 5v16H5z" fill="#fff" stroke="#707070" stroke-width="1.2"/><path d="M14 1.5v5h5" fill="none" stroke="#707070" stroke-width="1"/></svg>
<svg style="left:52.0px;top:61.0px" width="24" height="24" viewBox="0 0 24 24"><path d="M2 5h7l2 2h9v13H2z" fill="#e9c542"/><path d="M4 9h19l-3 11H2z" fill="#fbd94f" stroke="#e0b83a" stroke-width=".6"/></svg>
<svg style="left:85.0px;top:61.0px" width="24" height="24" viewBox="0 0 24 24"><rect x="1.5" y="1.5" width="20" height="21" rx="2" fill="#5a8cc4" stroke="#4a77aa"/><rect x="4.5" y="3" width="14" height="8" fill="#e9e9e9"/><path d="M6 5h11M6 7h11M6 9h11" stroke="#555" stroke-width=".8"/><rect x="5" y="14" width="13" height="7" fill="#f0f0f0"/><rect x="7" y="15.5" width="2.5" height="4" fill="#4a6c9a"/></svg>
<svg style="left:118.5px;top:61.0px" width="24" height="24" viewBox="0 0 24 24"><path d="M4 2h13l4 4v15H4z" fill="#fff" stroke="#808080"/><rect x="6" y="7" width="13" height="12" fill="none" stroke="#9ab6e8" stroke-width=".8"/><path d="M2 2h8v5H6v15H2z" fill="#f4cf4a" stroke="#d8b030" stroke-width=".6"/><rect x="13" y="13" width="9" height="9" rx="1.5" fill="#c9a414"/><path d="M17.5 14.5v6M14.5 17.5h6M15.3 15.3l4.4 4.4M19.7 15.3l-4.4 4.4" stroke="#fff" stroke-width="1.2"/></svg>
<svg style="left:151.5px;top:61.0px" width="24" height="24" viewBox="0 0 24 24"><path d="M2 2h17l4 4v16H2z" fill="#fff" stroke="#808080"/><rect x="4" y="5" width="16" height="15" fill="none" stroke="#9ab6e8" stroke-width=".8"/><path d="M7 7a4 4 0 0 0 5 5l8 9 2-2-9-8a4 4 0 0 0-5-5l2 2-1 2-2-1z" fill="#e8d07a" stroke="#555" stroke-width=".8"/></svg>
<svg style="left:183.5px;top:61.0px" width="24" height="24" viewBox="0 0 24 24"><circle cx="5.5" cy="6" r="4.5" fill="#d9622b"/><path d="M13 11L20 3" stroke="#4b7cc0" stroke-width="2.5" stroke-linecap="round"/><rect x="1" y="13" width="9" height="9" fill="#8cbf8a"/><text x="12" y="22" font-size="11" font-family="Liberation Sans" fill="#444">a</text></svg>
<svg style="left:222.0px;top:65.0px" width="4" height="16" viewBox="0 0 4 16"><rect x="0" y="0" width="1" height="1" fill="#b8b8b8"/><rect x="0" y="3" width="1" height="1" fill="#b8b8b8"/><rect x="0" y="6" width="1" height="1" fill="#b8b8b8"/><rect x="0" y="9" width="1" height="1" fill="#b8b8b8"/><rect x="0" y="12" width="1" height="1" fill="#b8b8b8"/><rect x="0" y="15" width="1" height="1" fill="#b8b8b8"/><rect x="3" y="0" width="1" height="1" fill="#b8b8b8"/><rect x="3" y="3" width="1" height="1" fill="#b8b8b8"/><rect x="3" y="6" width="1" height="1" fill="#b8b8b8"/><rect x="3" y="9" width="1" height="1" fill="#b8b8b8"/><rect x="3" y="12" width="1" height="1" fill="#b8b8b8"/><rect x="3" y="15" width="1" height="1" fill="#b8b8b8"/></svg>
<div class="a" style="left:231px;top:58px;width:32px;height:31px;background:#dadada;border:1px solid #adadad;border-radius:2px"></div>
<svg style="left:235.0px;top:61.0px" width="24" height="24" viewBox="0 0 24 24"><g fill="#fff" stroke="#1a1a1a" stroke-width="1.1"><path d="M6.5 22.5c-1.5-2.5-4.5-6-5-7.5-.5-1.5 1-2.5 2.5-1.5l2.5 2.5V5.5c0-1.8 2.6-1.8 2.6 0V12V3c0-1.8 2.6-1.8 2.6 0v9V4c0-1.8 2.6-1.8 2.6 0v8V6.5c0-1.8 2.6-1.8 2.6 0v8.5c0 3.5-1 6-2.5 7.5z"/></g></svg>
<svg style="left:268.0px;top:61.0px" width="24" height="24" viewBox="0 0 24 24"><rect x="6" y="6" width="12" height="12" fill="#f3e24a" stroke="#c8b020" stroke-width=".6"/><path d="M12 1l4 4h-8zM12 23l4-4h-8zM1 12l4 4V8zM23 12l-4 4V8z" fill="#4f8ad0"/><path d="M12 4v16M4 12h16" stroke="#4f8ad0" stroke-width="2"/></svg>
<svg style="left:301.5px;top:61.0px" width="24" height="24" viewBox="0 0 24 24"><circle cx="14" cy="9" r="7" fill="#fff" stroke="#3a3a3a" stroke-width="1.6"/><path d="M9 14L3 20" stroke="#3a3a3a" stroke-width="4"/><path d="M8.5 14.5L3.5 19.5" stroke="#e8c020" stroke-width="2"/><path d="M10 9h8M14 5v8" stroke="#3d7fd0" stroke-width="2"/></svg>
<svg style="left:334.0px;top:61.0px" width="24" height="24" viewBox="0 0 24 24"><circle cx="14" cy="9" r="7" fill="#fff" stroke="#3a3a3a" stroke-width="1.6"/><path d="M9 14L3 20" stroke="#3a3a3a" stroke-width="4"/><path d="M8.5 14.5L3.5 19.5" stroke="#e8c020" stroke-width="2"/><path d="M10 9h8" stroke="#3d7fd0" stroke-width="2"/></svg>
<svg style="left:367.0px;top:61.0px" width="24" height="24" viewBox="0 0 24 24"><path d="M1 1h7L1 8zM23 1h-7l7 7zM23 23h-7l7-7z" fill="#3d78c0"/><path d="M2 2l5 5M22 2l-5 5M22 22l-5-5" stroke="#3d78c0" stroke-width="2"/><circle cx="12" cy="11" r="5" fill="#fff" stroke="#444" stroke-width="1.3"/><path d="M8.5 14.5L3 20" stroke="#444" stroke-width="3.5"/><path d="M8 15L3.5 19.5" stroke="#e8c020" stroke-width="1.6"/></svg>
<svg style="left:399.5px;top:61.0px" width="24" height="24" viewBox="0 0 24 24"><circle cx="14" cy="9" r="7" fill="#eee" stroke="#c9c9c9" stroke-width="1.6"/><path d="M14 2v14" stroke="#c9c9c9" stroke-width="1"/><path d="M9 14L3 20" stroke="#c9c9c9" stroke-width="3.5"/></svg>
<svg style="left:433.0px;top:61.0px" width="24" height="24" viewBox="0 0 24 24"><circle cx="14" cy="9" r="7" fill="#eee" stroke="#c9c9c9" stroke-width="1.6"/><path d="M14 2v14" stroke="#c9c9c9" stroke-width="1"/><path d="M9 14L3 20" stroke="#c9c9c9" stroke-width="3.5"/></svg>
<svg style="left:465.5px;top:61.0px" width="24" height="24" viewBox="0 0 24 24"><circle cx="14" cy="9" r="7" fill="#eee" stroke="#c9c9c9" stroke-width="1.6"/><text x="9" y="13" font-size="8" font-family="Liberation Sans" fill="#c0c0c0">1:1</text><path d="M9 14L3 20" stroke="#c9c9c9" stroke-width="3.5"/></svg>
<svg style="left:499.0px;top:61.0px" width="24" height="24" viewBox="0 0 24 24"><circle cx="14" cy="9" r="7" fill="#fff" stroke="#3a3a3a" stroke-width="1.6"/><path d="M9 14L3 20" stroke="#3a3a3a" stroke-width="4"/><path d="M8.5 14.5L3.5 19.5" stroke="#e8c020" stroke-width="2"/><rect x="13" y="12" width="10" height="10" fill="#4f86c8"/><path d="M20 13.5l-4 3.5 4 3.5" stroke="#fff" stroke-width="1.6" fill="none"/></svg>
<svg style="left:532.0px;top:61.0px" width="24" height="24" viewBox="0 0 24 24"><circle cx="14" cy="9" r="7" fill="#eee" stroke="#c9c9c9" stroke-width="1.6"/><path d="M14 2v14" stroke="#c9c9c9" stroke-width="1"/><path d="M9 14L3 20" stroke="#c9c9c9" stroke-width="3.5"/><rect x="13" y="12" width="10" height="10" fill="#d5d5d5"/><path d="M16 13.5l4 3.5-4 3.5" stroke="#fff" stroke-width="1.6" fill="none"/></svg>
<svg style="left:565.5px;top:61.0px" width="24" height="24" viewBox="0 0 24 24"><path d="M4 2h14c2 0 2 2 2 2v14H6c-2 0-2 2-2 2z" fill="#e4e4e4" stroke="#888"/><path d="M4 20c0-2 2-2 2-2" fill="none" stroke="#888"/><rect x="13" y="13" width="9" height="9" rx="1.5" fill="#c9a414"/><path d="M17.5 14.5v6M14.5 17.5h6M15.3 15.3l4.4 4.4M19.7 15.3l-4.4 4.4" stroke="#fff" stroke-width="1.2"/></svg>
<svg style="left:599.0px;top:61.0px" width="24" height="24" viewBox="0 0 24 24"><path d="M6 1h8v20l-4-3-4 3z" fill="#5b8fd0" stroke="#35609a" stroke-width=".8" transform="translate(1,0)"/><rect x="12" y="13" width="9" height="9" rx="1.5" fill="#c9a414"/><path d="M16.5 14.5v6M13.5 17.5h6M14.3 15.3l4.4 4.4M18.7 15.3l-4.4 4.4" stroke="#fff" stroke-width="1.2"/></svg>
<svg style="left:630.5px;top:61.0px" width="24" height="24" viewBox="0 0 24 24"><path d="M3 2h16c1 0 2 1 2 2v17H5c-1 0-2-1-2-2z" fill="#e8e8e8" stroke="#888"/><path d="M13 2h5v9l-2.5-2-2.5 2z" fill="#4d86c8"/></svg>
<svg style="left:664.0px;top:61.0px" width="24" height="24" viewBox="0 0 24 24"><path d="M4 10a8 8 0 0 1 14-4l2-2v7h-7l2.5-2.5A5 5 0 0 0 7 10z" fill="#3a86d6"/><path d="M20 14a8 8 0 0 1-14 4l-2 2v-7h7l-2.5 2.5A5 5 0 0 0 17 14z" fill="#2f78c8"/></svg>
<svg style="left:702.0px;top:65.0px" width="4" height="16" viewBox="0 0 4 16"><rect x="0" y="0" width="1" height="1" fill="#b8b8b8"/><rect x="0" y="3" width="1" height="1" fill="#b8b8b8"/><rect x="0" y="6" width="1" height="1" fill="#b8b8b8"/><rect x="0" y="9" width="1" height="1" fill="#b8b8b8"/><rect x="0" y="12" width="1" height="1" fill="#b8b8b8"/><rect x="0" y="15" width="1" height="1" fill="#b8b8b8"/><rect x="3" y="0" width="1" height="1" fill="#b8b8b8"/><rect x="3" y="3" width="1" height="1" fill="#b8b8b8"/><rect x="3" y="6" width="1" height="1" fill="#b8b8b8"/><rect x="3" y="9" width="1" height="1" fill="#b8b8b8"/><rect x="3" y="12" width="1" height="1" fill="#b8b8b8"/><rect x="3" y="15" width="1" height="1" fill="#b8b8b8"/></svg>
<svg style="left:714.0px;top:61.0px" width="24" height="24" viewBox="0 0 24 24"><circle cx="9" cy="9" r="7.5" fill="#d9d9d9"/><text x="7" y="14" font-size="10" font-weight="bold" font-style="italic" font-family="Liberation Serif" fill="#fff">i</text><path d="M12 11l9 5-4 1 3 5-2 1-3-5-3 3z" fill="#f4f4f4" stroke="#cfcfcf"/></svg>
<svg style="left:747.0px;top:61.0px" width="24" height="24" viewBox="0 0 24 24"><circle cx="10" cy="10" r="6" fill="none" stroke="#d0d0d0" stroke-width="3" stroke-dasharray="2.5 1.5"/><circle cx="10" cy="10" r="3" fill="#d8d8d8"/><path d="M12 11l9 5-4 1 3 5-2 1-3-5-3 3z" fill="#f4f4f4" stroke="#cfcfcf"/></svg>
<svg style="left:778.5px;top:70.5px" width="9" height="5" viewBox="0 0 9 5"><path d="M0 0h9l-4.5 5z" fill="#555"/></svg>
<svg style="left:794.0px;top:61.0px" width="24" height="24" viewBox="0 0 24 24"><rect x="2" y="2" width="15" height="14" fill="#e3e0d8" stroke="#c8c8c8" stroke-dasharray="2 1"/><path d="M10 8l10 6-5 1 3 6-2 1-3-6-3 3z" fill="#f4f4f4" stroke="#c8c8c8"/></svg>
<svg style="left:826.5px;top:70.5px" width="9" height="5" viewBox="0 0 9 5"><path d="M0 0h9l-4.5 5z" fill="#888"/></svg>
<svg style="left:843.0px;top:61.0px" width="24" height="24" viewBox="0 0 24 24"><rect x="10" y="9" width="12" height="12" fill="#f3e24a" stroke="#c8b020" stroke-width=".7"/><text x="1" y="16" font-size="18" font-family="Liberation Serif" fill="#7c2a8a">&#949;</text></svg>
<svg style="left:874.5px;top:70.5px" width="9" height="5" viewBox="0 0 9 5"><path d="M0 0h9l-4.5 5z" fill="#555"/></svg>
<svg style="left:893.0px;top:61.0px" width="24" height="24" viewBox="0 0 24 24"><rect x="2" y="2" width="14" height="14" fill="#f3e24a" stroke="#c8b020" stroke-width=".7"/><circle cx="17" cy="17" r="5.5" fill="#e03030"/><path d="M14.5 19.5l5-5" stroke="#fff" stroke-width="1.6"/></svg>
<svg style="left:925.0px;top:61.0px" width="24" height="24" viewBox="0 0 24 24"><rect x="2" y="2" width="20" height="20" fill="#eaf0fa" stroke="#4a80c8" stroke-width="1.2"/><rect x="2" y="2" width="20" height="4" fill="#6a9ad8"/><path d="M5 9h14M5 12h14M5 15h14M5 18h14" stroke="#4a80c8" stroke-width="1"/><path d="M8 7v13" stroke="#4a80c8" stroke-width=".8"/></svg>
<svg style="left:958.0px;top:61.0px" width="24" height="24" viewBox="0 0 24 24"><path d="M2 3h20M2 21h20M3 3v18M21 3v18" stroke="#555" stroke-width="1.2"/><path d="M3 8h18M3 13h18M3 18h18" stroke="#777" stroke-width=".8"/><circle cx="8" cy="8" r="1.8" fill="#fff" stroke="#d04040"/><circle cx="15" cy="8" r="1.8" fill="#fff" stroke="#d04040"/><circle cx="6" cy="13" r="1.8" fill="#fff" stroke="#40a040"/><circle cx="12" cy="13" r="1.8" fill="#fff" stroke="#40a040"/><circle cx="9" cy="18" r="1.8" fill="#fff" stroke="#4070d0"/><circle cx="17" cy="18" r="1.8" fill="#fff" stroke="#4070d0"/></svg>
<svg style="left:990.5px;top:61.0px" width="24" height="24" viewBox="0 0 24 24"><circle cx="12" cy="12" r="8" fill="none" stroke="#4d86d0" stroke-width="4" stroke-dasharray="3 2.3"/><circle cx="12" cy="12" r="6" fill="#5a92d8"/><circle cx="12" cy="12" r="2.5" fill="#fff"/></svg>
<svg style="left:1023.0px;top:61.0px" width="24" height="24" viewBox="0 0 24 24"><path d="M4 2h16v5h-2l-1-2H9l6 7-6 7h8l1-2h2v5H4v-2l7-8-7-8z" fill="#9a1fa0"/></svg>
<svg style="left:1057.0px;top:61.0px" width="24" height="24" viewBox="0 0 24 24"><path d="M2 6h20M3 4v4M21 4v4" stroke="#2a4a80" stroke-width="1.5"/><rect x="1" y="11" width="22" height="8" fill="#d0d0d0" stroke="#777"/><path d="M4 11v3M7 11v4M10 11v3M13 11v4M16 11v3M19 11v4" stroke="#555" stroke-width=".8"/></svg>
<svg style="left:1088.0px;top:70.5px" width="9" height="5" viewBox="0 0 9 5"><path d="M0 0h9l-4.5 5z" fill="#555"/></svg>
<svg style="left:1104.0px;top:61.0px" width="24" height="24" viewBox="0 0 24 24"><path d="M4 2h16c2 0 3 1 3 3v7c0 2-1 3-3 3H10l-4 4v-4H4c-2 0-3-1-3-3V5c0-2 1-3 3-3z" fill="#fbed8a" stroke="#c8b040" stroke-width=".8"/><circle cx="6" cy="19" r="3" fill="#6aa05a" stroke="#3a6a3a" stroke-width=".6"/></svg>
<svg style="left:1138.0px;top:61.0px" width="24" height="24" viewBox="0 0 24 24"><path d="M2 2h20v15H9l-5 5v-5H2z" fill="#fff" stroke="#666"/><text x="7" y="14" font-size="13" font-family="Liberation Serif" fill="#222">T</text></svg>
<svg style="left:1169.5px;top:70.5px" width="9" height="5" viewBox="0 0 9 5"><path d="M0 0h9l-4.5 5z" fill="#555"/></svg>
<svg style="left:1190.5px;top:65.0px" width="4" height="16" viewBox="0 0 4 16"><rect x="0" y="0" width="1" height="1" fill="#b8b8b8"/><rect x="0" y="3" width="1" height="1" fill="#b8b8b8"/><rect x="0" y="6" width="1" height="1" fill="#b8b8b8"/><rect x="0" y="9" width="1" height="1" fill="#b8b8b8"/><rect x="0" y="12" width="1" height="1" fill="#b8b8b8"/><rect x="0" y="15" width="1" height="1" fill="#b8b8b8"/><rect x="3" y="0" width="1" height="1" fill="#b8b8b8"/><rect x="3" y="3" width="1" height="1" fill="#b8b8b8"/><rect x="3" y="6" width="1" height="1" fill="#b8b8b8"/><rect x="3" y="9" width="1" height="1" fill="#b8b8b8"/><rect x="3" y="12" width="1" height="1" fill="#b8b8b8"/><rect x="3" y="15" width="1" height="1" fill="#b8b8b8"/></svg>
<svg style="left:1204.0px;top:61.0px" width="24" height="24" viewBox="0 0 24 24"><rect x="3" y="1" width="18" height="22" rx="1" fill="#4f7dbc"/><rect x="3" y="1" width="4" height="22" fill="#203a5c"/><text x="10" y="17" font-size="13" font-family="Liberation Sans" fill="#fff">?</text></svg>
<svg style="left:1242.0px;top:65.0px" width="4" height="16" viewBox="0 0 4 16"><rect x="0" y="0" width="1" height="1" fill="#b8b8b8"/><rect x="0" y="3" width="1" height="1" fill="#b8b8b8"/><rect x="0" y="6" width="1" height="1" fill="#b8b8b8"/><rect x="0" y="9" width="1" height="1" fill="#b8b8b8"/><rect x="0" y="12" width="1" height="1" fill="#b8b8b8"/><rect x="0" y="15" width="1" height="1" fill="#b8b8b8"/><rect x="3" y="0" width="1" height="1" fill="#b8b8b8"/><rect x="3" y="3" width="1" height="1" fill="#b8b8b8"/><rect x="3" y="6" width="1" height="1" fill="#b8b8b8"/><rect x="3" y="9" width="1" height="1" fill="#b8b8b8"/><rect x="3" y="12" width="1" height="1" fill="#b8b8b8"/><rect x="3" y="15" width="1" height="1" fill="#b8b8b8"/></svg>
<svg style="left:1253.0px;top:61.0px" width="24" height="24" viewBox="0 0 24 24"><path d="M4 20V10a8 8 0 0 1 8-8h8" fill="none" stroke="#d3d3d3" stroke-width="1.5"/><rect x="2" y="18" width="4" height="4" fill="#ddd"/><rect x="18" y="0" width="4" height="4" fill="#ddd"/><rect x="13" y="13" width="9" height="9" rx="1.5" fill="#cfcac0"/><path d="M17.5 14.5v6M14.5 17.5h6" stroke="#fff" stroke-width="1.2"/></svg>
<svg style="left:1285.5px;top:70.5px" width="9" height="5" viewBox="0 0 9 5"><path d="M0 0h9l-4.5 5z" fill="#999"/></svg>
<svg style="left:1301.0px;top:61.0px" width="24" height="24" viewBox="0 0 24 24"><circle cx="10" cy="10" r="7" fill="none" stroke="#d3d3d3" stroke-width="2.5"/><rect x="13" y="13" width="9" height="9" rx="1.5" fill="#cfcac0"/><path d="M17.5 14.5v6M14.5 17.5h6" stroke="#fff" stroke-width="1.2"/></svg>
<svg style="left:1334.2px;top:70.5px" width="9" height="5" viewBox="0 0 9 5"><path d="M0 0h9l-4.5 5z" fill="#999"/></svg>
<svg style="left:1350.0px;top:61.0px" width="24" height="24" viewBox="0 0 24 24"><ellipse cx="10" cy="10" rx="8" ry="6" fill="none" stroke="#d3d3d3" stroke-width="2"/><circle cx="10" cy="10" r="2" fill="#d3d3d3"/><rect x="13" y="13" width="9" height="9" rx="1.5" fill="#cfcac0"/><path d="M17.5 14.5v6M14.5 17.5h6" stroke="#fff" stroke-width="1.2"/></svg>
<svg style="left:1381.5px;top:70.5px" width="9" height="5" viewBox="0 0 9 5"><path d="M0 0h9l-4.5 5z" fill="#999"/></svg>
<svg style="left:1398.6px;top:61.0px" width="24" height="24" viewBox="0 0 24 24"><rect x="3" y="3" width="15" height="14" fill="none" stroke="#d3d3d3" stroke-width="1.5"/><rect x="13" y="13" width="9" height="9" rx="1.5" fill="#cfcac0"/><path d="M17.5 14.5v6M14.5 17.5h6" stroke="#fff" stroke-width="1.2"/></svg>
<svg style="left:1430.2px;top:70.5px" width="9" height="5" viewBox="0 0 9 5"><path d="M0 0h9l-4.5 5z" fill="#999"/></svg>
<svg style="left:1447.0px;top:61.0px" width="24" height="24" viewBox="0 0 24 24"><path d="M6 3h10l5 8-5 9H6l-4-9z" fill="none" stroke="#d3d3d3" stroke-width="2"/><rect x="13" y="13" width="9" height="9" rx="1.5" fill="#cfcac0"/><path d="M17.5 14.5v6M14.5 17.5h6" stroke="#fff" stroke-width="1.2"/></svg>
<svg style="left:1478.0px;top:70.5px" width="9" height="5" viewBox="0 0 9 5"><path d="M0 0h9l-4.5 5z" fill="#999"/></svg>
<svg style="left:1500.0px;top:65.0px" width="4" height="16" viewBox="0 0 4 16"><rect x="0" y="0" width="1" height="1" fill="#b8b8b8"/><rect x="0" y="3" width="1" height="1" fill="#b8b8b8"/><rect x="0" y="6" width="1" height="1" fill="#b8b8b8"/><rect x="0" y="9" width="1" height="1" fill="#b8b8b8"/><rect x="0" y="12" width="1" height="1" fill="#b8b8b8"/><rect x="0" y="15" width="1" height="1" fill="#b8b8b8"/><rect x="3" y="0" width="1" height="1" fill="#b8b8b8"/><rect x="3" y="3" width="1" height="1" fill="#b8b8b8"/><rect x="3" y="6" width="1" height="1" fill="#b8b8b8"/><rect x="3" y="9" width="1" height="1" fill="#b8b8b8"/><rect x="3" y="12" width="1" height="1" fill="#b8b8b8"/><rect x="3" y="15" width="1" height="1" fill="#b8b8b8"/></svg>
<svg style="left:1512.7px;top:61.0px" width="24" height="24" viewBox="0 0 24 24"><circle cx="6" cy="7" r="4" fill="#3a80e0"/><path d="M20 4l2 2-10 12-3 1 1-3z" fill="#e8c33a" stroke="#333" stroke-width=".8"/></svg>
<svg style="left:1544.2px;top:70.5px" width="9" height="5" viewBox="0 0 9 5"><path d="M0 0h9l-4.5 5z" fill="#555"/></svg>
<svg style="left:1561.0px;top:61.0px" width="24" height="24" viewBox="0 0 24 24"><path d="M1 18l6-9 4 6 6-12" fill="none" stroke="#3a80e0" stroke-width="1.5" stroke-dasharray="2 1"/><path d="M21 8l2 2-9 11-3 1 1-3z" fill="#e8c33a" stroke="#333" stroke-width=".8"/></svg>
<svg style="left:1594.0px;top:61.0px" width="24" height="24" viewBox="0 0 24 24"><rect x="1" y="2" width="19" height="18" fill="#3a80e0" stroke="#2050a0" stroke-dasharray="2 1"/><path d="M21 9l2 2-9 11-3 1 1-3z" fill="#e8c33a" stroke="#333" stroke-width=".8"/></svg>
<svg style="left:1626.8px;top:61.0px" width="24" height="24" viewBox="0 0 24 24"><circle cx="11" cy="11" r="10" fill="#3a80e0" stroke="#2050a0" stroke-dasharray="2 1"/><path d="M21 9l2 2-9 11-3 1 1-3z" fill="#e8c33a" stroke="#333" stroke-width=".8"/></svg>
<svg style="left:1659.6px;top:61.0px" width="24" height="24" viewBox="0 0 24 24"><path d="M1 2l9 6 10-6-5 18-6-7-5 2z" fill="#3a80e0"/><path d="M21 9l2 2-9 11-3 1 1-3z" fill="#e8c33a" stroke="#333" stroke-width=".8"/></svg>
<svg style="left:1693.0px;top:61.0px" width="24" height="24" viewBox="0 0 24 24"><path d="M2 21C2 10 10 2 22 2c0 12-8 19-20 19z" fill="#3a80e0"/><path d="M2 21L22 2" stroke="#e03030" stroke-width="1.2"/><path d="M21 9l2 2-9 11-3 1 1-3z" fill="#e8c33a" stroke="#333" stroke-width=".8"/></svg>
<svg style="left:1723.3px;top:70.5px" width="9" height="5" viewBox="0 0 9 5"><path d="M0 0h9l-4.5 5z" fill="#555"/></svg>
<svg style="left:1740.8px;top:61.0px" width="24" height="24" viewBox="0 0 24 24"><circle cx="11" cy="11" r="8" fill="none" stroke="#8a8a8a" stroke-width="4" stroke-dasharray="3 2.2"/><circle cx="11" cy="11" r="6" fill="#eee" stroke="#777"/><circle cx="11" cy="11" r="3" fill="#fff" stroke="#777"/><path d="M21 9l2 2-9 11-3 1 1-3z" fill="#e8c33a" stroke="#333" stroke-width=".8"/></svg>
<svg style="left:1779.0px;top:65.0px" width="4" height="16" viewBox="0 0 4 16"><rect x="0" y="0" width="1" height="1" fill="#b8b8b8"/><rect x="0" y="3" width="1" height="1" fill="#b8b8b8"/><rect x="0" y="6" width="1" height="1" fill="#b8b8b8"/><rect x="0" y="9" width="1" height="1" fill="#b8b8b8"/><rect x="0" y="12" width="1" height="1" fill="#b8b8b8"/><rect x="0" y="15" width="1" height="1" fill="#b8b8b8"/><rect x="3" y="0" width="1" height="1" fill="#b8b8b8"/><rect x="3" y="3" width="1" height="1" fill="#b8b8b8"/><rect x="3" y="6" width="1" height="1" fill="#b8b8b8"/><rect x="3" y="9" width="1" height="1" fill="#b8b8b8"/><rect x="3" y="12" width="1" height="1" fill="#b8b8b8"/><rect x="3" y="15" width="1" height="1" fill="#b8b8b8"/></svg>
<svg style="left:1791.8px;top:61.0px" width="24" height="24" viewBox="0 0 24 24"><rect x="1" y="1" width="12" height="10" fill="#f0f0f0" stroke="#888"/><path d="M1 4h12M1 7h12" stroke="#888" stroke-width=".8"/><rect x="10" y="12" width="12" height="10" fill="#f6e9a0" stroke="#888"/><path d="M10 15h12M10 18h12" stroke="#888" stroke-width=".8"/></svg>
<div class="t" style="left:1902px;top:64.46px;font-size:16px;color:#000;font-weight:bold;font-style:normal;">»</div>
<svg style="left:6.0px;top:103.5px" width="4" height="16" viewBox="0 0 4 16"><rect x="0" y="0" width="1" height="1" fill="#b8b8b8"/><rect x="0" y="3" width="1" height="1" fill="#b8b8b8"/><rect x="0" y="6" width="1" height="1" fill="#b8b8b8"/><rect x="0" y="9" width="1" height="1" fill="#b8b8b8"/><rect x="0" y="12" width="1" height="1" fill="#b8b8b8"/><rect x="0" y="15" width="1" height="1" fill="#b8b8b8"/><rect x="3" y="0" width="1" height="1" fill="#b8b8b8"/><rect x="3" y="3" width="1" height="1" fill="#b8b8b8"/><rect x="3" y="6" width="1" height="1" fill="#b8b8b8"/><rect x="3" y="9" width="1" height="1" fill="#b8b8b8"/><rect x="3" y="12" width="1" height="1" fill="#b8b8b8"/><rect x="3" y="15" width="1" height="1" fill="#b8b8b8"/></svg>
<svg style="left:19.0px;top:99.5px" width="24" height="24" viewBox="0 0 24 24"><rect x="2" y="6" width="13" height="13" fill="#e07040" transform="rotate(-15 8 12)"/><rect x="5" y="4" width="13" height="13" fill="#f2c830" transform="rotate(-8 11 10)"/><rect x="8" y="1" width="13" height="13" fill="#5a8fd0" stroke="#3a6aa8" stroke-width=".6" transform="rotate(6 14 7)"/><rect x="14" y="14" width="9" height="9" rx="1.5" fill="#5a9a5a"/><path d="M18.5 15.5v6M15.5 18.5h6" stroke="#fff" stroke-width="1.6"/></svg>
<svg style="left:52.0px;top:99.5px" width="24" height="24" viewBox="0 0 24 24"><path d="M1 9l8 5v9l-8-5z" fill="#d8b020" stroke="#333" stroke-width=".6"/><path d="M9 14l12-5v9l-12 5z" fill="#f6ea70" stroke="#333" stroke-width=".6"/><circle cx="11" cy="7" r="6" fill="#7aa2d8"/><path d="M8 5c2 1 3 0 4 2M12 3c1 1 3 2 2 4" stroke="#2d5a9a" stroke-width="1.5"/><path d="M1 9l12-4 8 4" fill="none" stroke="#333" stroke-width=".6"/><rect x="14" y="14" width="9" height="9" rx="1.5" fill="#c9a414"/><path d="M18.5 15.5v6M15.5 18.5h6M16.3 16.3l4.4 4.4M20.7 16.3l-4.4 4.4" stroke="#fff" stroke-width="1.2"/></svg>
<svg style="left:85.0px;top:99.5px" width="24" height="24" viewBox="0 0 24 24"><path d="M2 3l7 15 6-15h6" fill="none" stroke="#2a3a4a" stroke-width="1.2"/><circle cx="2" cy="3" r="1.5" fill="#fff" stroke="#333" stroke-width=".8"/><circle cx="9" cy="18" r="1.5" fill="#fff" stroke="#333" stroke-width=".8"/><circle cx="15" cy="3" r="1.5" fill="#fff" stroke="#333" stroke-width=".8"/><circle cx="21" cy="3" r="1.5" fill="#fff" stroke="#333" stroke-width=".8"/><rect x="14" y="14" width="9" height="9" rx="1.5" fill="#c9a414"/><path d="M18.5 15.5v6M15.5 18.5h6M16.3 16.3l4.4 4.4M20.7 16.3l-4.4 4.4" stroke="#fff" stroke-width="1.2"/></svg>
<svg style="left:118.0px;top:99.5px" width="24" height="24" viewBox="0 0 24 24"><path d="M2 23C4 14 10 5 22 1c-2 8-8 15-16 18z" fill="#8ab0e0" stroke="#3a6aa8" stroke-width=".8"/><path d="M2 23L18 5" stroke="#3a6aa8" stroke-width=".8"/><rect x="14" y="14" width="9" height="9" rx="1.5" fill="#c9a414"/><path d="M18.5 15.5v6M15.5 18.5h6M16.3 16.3l4.4 4.4M20.7 16.3l-4.4 4.4" stroke="#fff" stroke-width="1.2"/></svg>
<svg style="left:152.0px;top:99.5px" width="24" height="24" viewBox="0 0 24 24"><rect x="1" y="7" width="19" height="11" rx="1.5" fill="#5a8fd0" stroke="#2a5a9a" stroke-width=".8"/><path d="M4 3v4M7 3v4M10 3v4M13 3v4M16 3v4M4 18v4M7 18v4M10 18v4M13 18v4" stroke="#2a4a70" stroke-width="1.2"/><rect x="14" y="14" width="9" height="9" rx="1.5" fill="#c9a414"/><path d="M18.5 15.5v6M15.5 18.5h6M16.3 16.3l4.4 4.4M20.7 16.3l-4.4 4.4" stroke="#fff" stroke-width="1.2"/></svg>
<div class="a" style="left:183px;top:103px;width:1px;height:19px;background:#d4d4d4;"></div>
<svg style="left:192.5px;top:99.5px" width="24" height="24" viewBox="0 0 24 24"><rect x="1" y="1" width="21" height="21" rx="2" fill="#b8cde8" stroke="#4a70a8"/><path d="M3 2l6 16 6-16" fill="none" stroke="#2a3a5a" stroke-width="1.2"/><circle cx="9" cy="18" r="1.5" fill="#fff"/><rect x="14" y="14" width="9" height="9" rx="1.5" fill="#c9a414"/><path d="M18.5 15.5v6M15.5 18.5h6M16.3 16.3l4.4 4.4M20.7 16.3l-4.4 4.4" stroke="#fff" stroke-width="1.2"/></svg>
<svg style="left:229.0px;top:103.5px" width="4" height="16" viewBox="0 0 4 16"><rect x="0" y="0" width="1" height="1" fill="#b8b8b8"/><rect x="0" y="3" width="1" height="1" fill="#b8b8b8"/><rect x="0" y="6" width="1" height="1" fill="#b8b8b8"/><rect x="0" y="9" width="1" height="1" fill="#b8b8b8"/><rect x="0" y="12" width="1" height="1" fill="#b8b8b8"/><rect x="0" y="15" width="1" height="1" fill="#b8b8b8"/><rect x="3" y="0" width="1" height="1" fill="#b8b8b8"/><rect x="3" y="3" width="1" height="1" fill="#b8b8b8"/><rect x="3" y="6" width="1" height="1" fill="#b8b8b8"/><rect x="3" y="9" width="1" height="1" fill="#b8b8b8"/><rect x="3" y="12" width="1" height="1" fill="#b8b8b8"/><rect x="3" y="15" width="1" height="1" fill="#b8b8b8"/></svg>
<svg style="left:243.0px;top:99.5px" width="24" height="24" viewBox="0 0 24 24"><path d="M4 20L14 2l3 2L7 22z" fill="#e2e0da" stroke="#cfcfcf"/><path d="M8 20L18 2l3 2-10 18z" fill="#e2e0da" stroke="#cfcfcf"/></svg>
<svg style="left:260.0px;top:117.5px" width="9" height="5" viewBox="0 0 9 5"><path d="M0 0h9l-4.5 5z" fill="#999"/></svg>
<svg style="left:275.5px;top:99.5px" width="24" height="24" viewBox="0 0 24 24"><path d="M6 22L16 2l3 2L9 22z" fill="#e2e0da" stroke="#cfcfcf"/></svg>
<svg style="left:309.0px;top:99.5px" width="24" height="24" viewBox="0 0 24 24"><rect x="2" y="2" width="17" height="18" rx="2" fill="#dcdcdc"/><rect x="5" y="3" width="11" height="6" fill="#eee"/><rect x="5" y="13" width="11" height="6" fill="#eee"/><path d="M14 22l8-12 2 1-8 12z" fill="#d8d8d8"/></svg>
<svg style="left:342.0px;top:99.5px" width="24" height="24" viewBox="0 0 24 24"><rect x="1" y="3" width="20" height="15" fill="#eee" stroke="#d0d0d0"/><path d="M1 6h20M4 9h14M4 12h14" stroke="#d0d0d0"/><rect x="14" y="14" width="9" height="9" rx="1.5" fill="#cfcac0"/><path d="M18.5 15.5v6M15.5 18.5h6" stroke="#fff" stroke-width="1.2"/></svg>
<svg style="left:373.0px;top:99.5px" width="24" height="24" viewBox="0 0 24 24"><path d="M3 3l4 4M7 3l-4 4" stroke="#ccc" stroke-width="1.5"/><path d="M6 6l10 14M10 4l10 3M8 8l8 10" stroke="#d0d0d0" stroke-width="1.3"/><path d="M12 22l8-10 2 2-8 10z" fill="#ddd"/></svg>
<svg style="left:405.5px;top:109.0px" width="9" height="5" viewBox="0 0 9 5"><path d="M0 0h9l-4.5 5z" fill="#999"/></svg>
<svg style="left:423.0px;top:99.5px" width="24" height="24" viewBox="0 0 24 24"><rect x="2" y="3" width="18" height="5" fill="#e4e2da" stroke="#d0d0d0"/><rect x="2" y="10" width="18" height="5" fill="#e4e2da" stroke="#d0d0d0"/><rect x="2" y="17" width="18" height="5" fill="#e4e2da" stroke="#d0d0d0"/><path d="M8 21l12-18 2 2-12 18z" fill="#e8e6de" stroke="#ccc"/></svg>
<svg style="left:455.5px;top:99.5px" width="24" height="24" viewBox="0 0 24 24"><rect x="2" y="3" width="19" height="4" fill="#ead8d8" stroke="#dcc8c8"/><path d="M4 7h15l-1 15H5z" fill="#f2e8e8" stroke="#dcc8c8"/><path d="M8 10v10M11.5 10v10M15 10v10" stroke="#dcc8c8"/></svg>
<svg style="left:489.0px;top:99.5px" width="24" height="24" viewBox="0 0 24 24"><circle cx="4" cy="16" r="3" fill="none" stroke="#ccc" stroke-width="1.5"/><circle cx="19" cy="16" r="3" fill="none" stroke="#ccc" stroke-width="1.5"/><path d="M6 14L18 4M17 14L5 4" stroke="#ccc" stroke-width="1.5"/></svg>
<svg style="left:522.0px;top:99.5px" width="24" height="24" viewBox="0 0 24 24"><path d="M8 2h8l4 4v13H8z" fill="#f4f4f4" stroke="#d0d0d0"/><path d="M3 6h8l4 4v13H3z" fill="#f4f4f4" stroke="#d0d0d0"/></svg>
<svg style="left:554.0px;top:99.5px" width="24" height="24" viewBox="0 0 24 24"><rect x="3" y="3" width="17" height="20" rx="1" fill="#f0f0f0" stroke="#d0d0d0"/><rect x="7" y="1" width="9" height="4" fill="#ddd"/><path d="M6 9h11M6 12h11M6 15h11M6 18h11" stroke="#d8d8d8"/></svg>
<svg style="left:588.0px;top:99.5px" width="24" height="24" viewBox="0 0 24 24"><path d="M9 4L2 10l7 6v-4c5 0 9 1 11 6 0-7-4-10-11-10z" fill="#ddd8d0"/></svg>
<svg style="left:620.5px;top:99.5px" width="24" height="24" viewBox="0 0 24 24"><path d="M15 4l7 6-7 6v-4c-5 0-9 1-11 6 0-7 4-10 11-10z" fill="#ddd8d0"/></svg>
<svg style="left:659.0px;top:103.5px" width="4" height="16" viewBox="0 0 4 16"><rect x="0" y="0" width="1" height="1" fill="#b8b8b8"/><rect x="0" y="3" width="1" height="1" fill="#b8b8b8"/><rect x="0" y="6" width="1" height="1" fill="#b8b8b8"/><rect x="0" y="9" width="1" height="1" fill="#b8b8b8"/><rect x="0" y="12" width="1" height="1" fill="#b8b8b8"/><rect x="0" y="15" width="1" height="1" fill="#b8b8b8"/><rect x="3" y="0" width="1" height="1" fill="#b8b8b8"/><rect x="3" y="3" width="1" height="1" fill="#b8b8b8"/><rect x="3" y="6" width="1" height="1" fill="#b8b8b8"/><rect x="3" y="9" width="1" height="1" fill="#b8b8b8"/><rect x="3" y="12" width="1" height="1" fill="#b8b8b8"/><rect x="3" y="15" width="1" height="1" fill="#b8b8b8"/></svg>
<svg style="left:670.5px;top:99.5px" width="24" height="24" viewBox="0 0 24 24"><path d="M1 8l4-4h17v9H5z" fill="#e8e6e0" stroke="#d0d0d0"/><text x="6" y="12" font-size="7" font-weight="bold" font-family="Liberation Sans" fill="#c8c8c8">abc</text></svg>
<svg style="left:704.0px;top:99.5px" width="24" height="24" viewBox="0 0 24 24"><circle cx="9" cy="9" r="8" fill="#d8d8d4"/><path d="M9 1v8l7 3" fill="#c8ccd0"/><rect x="13" y="14" width="3" height="9" fill="#ccd0cc"/><rect x="17" y="17" width="3" height="6" fill="#cccccc"/></svg>
<div class="a" style="left:737px;top:103px;width:1px;height:19px;background:#d4d4d4;"></div>
<svg style="left:745.5px;top:99.5px" width="24" height="24" viewBox="0 0 24 24"><path d="M1 8l4-4h15v9H5z" fill="#fff" stroke="#4a80d0" stroke-width="1.2"/><text x="6" y="12" font-size="8" font-weight="bold" font-family="Liberation Sans" fill="#222">ab</text><circle cx="18" cy="18" r="4" fill="#c02020"/><path d="M17 7v9" stroke="#888" stroke-width="1.5"/></svg>
<svg style="left:778.0px;top:99.5px" width="24" height="24" viewBox="0 0 24 24"><path d="M1 8l4-4h17v9H5z" fill="#fff" stroke="#e02020" stroke-width="1.4"/><text x="6" y="12" font-size="8" font-weight="bold" font-family="Liberation Sans" fill="#e02020">abc</text></svg>
<div class="a" style="left:811px;top:103px;width:1px;height:19px;background:#d4d4d4;"></div>
<svg style="left:818.0px;top:99.5px" width="24" height="24" viewBox="0 0 24 24"><path d="M1 8l4-4h15v9H5z" fill="#e8e6e0" stroke="#d0d0d0"/><text x="6" y="12" font-size="7" font-weight="bold" font-family="Liberation Sans" fill="#c8c8c8">ab</text><circle cx="17" cy="18" r="4" fill="#d0d0d0"/></svg>
<svg style="left:852.0px;top:99.5px" width="24" height="24" viewBox="0 0 24 24"><path d="M1 8l4-4h17v9H5z" fill="#e8e6e0" stroke="#d0d0d0"/><text x="6" y="12" font-size="7" font-weight="bold" font-family="Liberation Sans" fill="#c8c8c8">abc</text><ellipse cx="17" cy="19" rx="6" ry="3.5" fill="#f0f0f0" stroke="#ccc"/><circle cx="17" cy="19" r="1.8" fill="#ccc"/></svg>
<svg style="left:885.5px;top:99.5px" width="24" height="24" viewBox="0 0 24 24"><path d="M1 8l4-4h17v9H5z" fill="#e8e6e0" stroke="#d0d0d0"/><text x="6" y="12" font-size="7" font-weight="bold" font-family="Liberation Sans" fill="#c8c8c8">abc</text><rect x="13" y="14" width="10" height="9" fill="#d4d4d4"/><path d="M15 18.5h5M18 16l2.5 2.5L18 21" stroke="#fff" stroke-width="1.3" fill="none"/></svg>
<svg style="left:918.0px;top:99.5px" width="24" height="24" viewBox="0 0 24 24"><path d="M1 8l4-4h17v9H5z" fill="#e8e6e0" stroke="#d0d0d0"/><text x="6" y="12" font-size="7" font-weight="bold" font-family="Liberation Sans" fill="#c8c8c8">abc</text><rect x="13" y="14" width="10" height="9" fill="#d4d4d4"/><circle cx="18" cy="18.5" r="2.5" fill="none" stroke="#fff" stroke-width="1.2"/></svg>
<svg style="left:950.5px;top:99.5px" width="24" height="24" viewBox="0 0 24 24"><path d="M1 8l4-4h17v9H5z" fill="#e8e6e0" stroke="#d0d0d0"/><text x="6" y="12" font-size="7" font-weight="bold" font-family="Liberation Sans" fill="#c8c8c8">abc</text><rect x="13" y="14" width="10" height="9" fill="#d4d4d4"/><path d="M15 21l5-5" stroke="#fff" stroke-width="1.5"/></svg>
<svg style="left:989.0px;top:103.5px" width="4" height="16" viewBox="0 0 4 16"><rect x="0" y="0" width="1" height="1" fill="#b8b8b8"/><rect x="0" y="3" width="1" height="1" fill="#b8b8b8"/><rect x="0" y="6" width="1" height="1" fill="#b8b8b8"/><rect x="0" y="9" width="1" height="1" fill="#b8b8b8"/><rect x="0" y="12" width="1" height="1" fill="#b8b8b8"/><rect x="0" y="15" width="1" height="1" fill="#b8b8b8"/><rect x="3" y="0" width="1" height="1" fill="#b8b8b8"/><rect x="3" y="3" width="1" height="1" fill="#b8b8b8"/><rect x="3" y="6" width="1" height="1" fill="#b8b8b8"/><rect x="3" y="9" width="1" height="1" fill="#b8b8b8"/><rect x="3" y="12" width="1" height="1" fill="#b8b8b8"/><rect x="3" y="15" width="1" height="1" fill="#b8b8b8"/></svg>
<svg style="left:1003.0px;top:99.5px" width="24" height="24" viewBox="0 0 24 24"><circle cx="11" cy="11" r="10" fill="#7aa4dc" stroke="#3a6ab0"/><path d="M1 11h20M11 1v20M4 5c4 2 10 2 14 0M4 17c4-2 10-2 14 0" fill="none" stroke="#2a4a80" stroke-width=".9"/><ellipse cx="11" cy="11" rx="5" ry="10" fill="none" stroke="#2a4a80" stroke-width=".9"/></svg>
<svg style="left:1035.5px;top:99.5px" width="24" height="24" viewBox="0 0 24 24"><circle cx="11" cy="11" r="10" fill="#7aa4dc" stroke="#3a6ab0"/><path d="M1 11h20M11 1v20M4 5c4 2 10 2 14 0M4 17c4-2 10-2 14 0" fill="none" stroke="#2a4a80" stroke-width=".9"/><ellipse cx="11" cy="11" rx="5" ry="10" fill="none" stroke="#2a4a80" stroke-width=".9"/></svg>
<svg style="left:1073.0px;top:103.5px" width="4" height="16" viewBox="0 0 4 16"><rect x="0" y="0" width="1" height="1" fill="#b8b8b8"/><rect x="0" y="3" width="1" height="1" fill="#b8b8b8"/><rect x="0" y="6" width="1" height="1" fill="#b8b8b8"/><rect x="0" y="9" width="1" height="1" fill="#b8b8b8"/><rect x="0" y="12" width="1" height="1" fill="#b8b8b8"/><rect x="0" y="15" width="1" height="1" fill="#b8b8b8"/><rect x="3" y="0" width="1" height="1" fill="#b8b8b8"/><rect x="3" y="3" width="1" height="1" fill="#b8b8b8"/><rect x="3" y="6" width="1" height="1" fill="#b8b8b8"/><rect x="3" y="9" width="1" height="1" fill="#b8b8b8"/><rect x="3" y="12" width="1" height="1" fill="#b8b8b8"/><rect x="3" y="15" width="1" height="1" fill="#b8b8b8"/></svg>
<svg style="left:1087.0px;top:99.5px" width="24" height="24" viewBox="0 0 24 24"><path d="M11.5 1C6 1 6.5 3.5 6.5 3.5V6h5.2v1H4.5S1 6.6 1 12s3 5.2 3 5.2h2v-2.6s-.1-3 3-3h5.1s2.9.1 2.9-2.8V3.9S17.5 1 11.5 1z" fill="#3d7ab8"/><path d="M11.6 22c5.5 0 5-2.5 5-2.5V17h-5.2v-1h7.2s3.5.4 3.5-5-3-5.2-3-5.2h-2v2.6s.1 3-3 3H9s-2.9-.1-2.9 2.8v4.9S5.6 22 11.6 22z" fill="#f2cc3a"/><path d="M17 17l5 3-5 3" fill="none" stroke="#444" stroke-width="1.2"/></svg>
<svg style="left:1120.5px;top:99.5px" width="24" height="24" viewBox="0 0 24 24"><circle cx="12" cy="5" r="4" fill="#bbb" stroke="#888"/><path d="M3 10h6l2 4h2l2-4h6l2 8H1z" fill="#222"/><circle cx="6" cy="18" r="5" fill="#333"/><circle cx="18" cy="18" r="5" fill="#333"/><circle cx="6" cy="18" r="2" fill="#b86020"/><circle cx="18" cy="18" r="2" fill="#b86020"/></svg>
<svg style="left:1152.0px;top:99.5px" width="24" height="24" viewBox="0 0 24 24"><path d="M1 22V15l7-7 6 6 4 3 4 1v4z" fill="#20e020" stroke="#111" stroke-width="1.2"/><circle cx="18" cy="5" r="2.5" fill="#f8e020"/><path d="M18 0v2M18 8v2M13 5h2M21 5h2M15 2l1 1M20 7l1 1M21 2l-1 1M15 8l1-1" stroke="#f8e020" stroke-width="1"/></svg>
<svg style="left:1184.0px;top:99.5px" width="24" height="24" viewBox="0 0 24 24"><circle cx="9" cy="9" r="8.5" fill="#1e9a2a"/><text x="6.5" y="15" font-size="13" font-weight="bold" font-style="italic" font-family="Liberation Serif" fill="#fff">i</text><path d="M12 11l9 6-4 1 3 5-2 1-3-5-3 3z" fill="#fff" stroke="#333" stroke-width=".9"/></svg>
<svg style="left:1224.0px;top:103.5px" width="4" height="16" viewBox="0 0 4 16"><rect x="0" y="0" width="1" height="1" fill="#b8b8b8"/><rect x="0" y="3" width="1" height="1" fill="#b8b8b8"/><rect x="0" y="6" width="1" height="1" fill="#b8b8b8"/><rect x="0" y="9" width="1" height="1" fill="#b8b8b8"/><rect x="0" y="12" width="1" height="1" fill="#b8b8b8"/><rect x="0" y="15" width="1" height="1" fill="#b8b8b8"/><rect x="3" y="0" width="1" height="1" fill="#b8b8b8"/><rect x="3" y="3" width="1" height="1" fill="#b8b8b8"/><rect x="3" y="6" width="1" height="1" fill="#b8b8b8"/><rect x="3" y="9" width="1" height="1" fill="#b8b8b8"/><rect x="3" y="12" width="1" height="1" fill="#b8b8b8"/><rect x="3" y="15" width="1" height="1" fill="#b8b8b8"/></svg>
<svg style="left:1237.0px;top:99.5px" width="24" height="24" viewBox="0 0 24 24"><path d="M3 14L12 5l3 3-9 9a3 3 0 0 0 4 4l9-9 3 3-9 9a8 8 0 0 1-11-11z" fill="#d81818"/><path d="M12 5l3 3M18 11l3 3" stroke="#eee" stroke-width="2.5"/></svg>
<svg style="left:1270.5px;top:99.5px" width="24" height="24" viewBox="0 0 24 24"><path d="M5 3l7 10 6-8M12 13v8M5 3l-3 6" stroke="#d6d6d6" stroke-width="1.4" fill="none"/><circle cx="5" cy="3" r="2" fill="#ddd"/><circle cx="18" cy="5" r="2" fill="#ddd"/><circle cx="12" cy="13" r="2" fill="#ddd"/></svg>
<svg style="left:1286.5px;top:117.5px" width="9" height="5" viewBox="0 0 9 5"><path d="M0 0h9l-4.5 5z" fill="#999"/></svg>
<svg style="left:1303.0px;top:99.5px" width="24" height="24" viewBox="0 0 24 24"><rect x="1" y="3" width="3" height="3" fill="#d0d0d0"/><rect x="14" y="6" width="3" height="3" fill="#d0d0d0"/><rect x="4" y="15" width="3" height="3" fill="#d0d0d0"/><rect x="12" y="17" width="3" height="3" fill="#d0d0d0"/></svg>
<svg style="left:1318.5px;top:117.5px" width="9" height="5" viewBox="0 0 9 5"><path d="M0 0h9l-4.5 5z" fill="#999"/></svg>
<div class="a" style="left:1332px;top:101px;width:91px;height:22px;background:#f0f0f0;border:1px solid #b9b9b9;border-radius:2px"></div>
<div class="a" style="left:1404px;top:102px;width:1px;height:20px;background:#c8c8c8;"></div>
<svg style="left:1408px;top:104px" width="10" height="16" viewBox="0 0 10 16"><path d="M1 6l4-4 4 4z" fill="#666"/><path d="M1 10l4 4 4-4z" fill="#666"/></svg>
<div class="t" style="left:1337px;top:105.15px;font-size:14px;color:#555;font-weight:normal;font-style:normal;">12</div>
<div class="a" style="left:1424px;top:101px;width:101px;height:22px;background:#fafafa;border:1px solid #b9b9b9;border-radius:2px"></div>
<div class="t" style="left:1429.4px;top:105.15px;font-size:14px;color:#444;font-weight:normal;font-style:normal;">px</div>
<svg style="left:1504.5px;top:109.5px" width="9" height="5" viewBox="0 0 9 5"><path d="M0 0h9l-4.5 5z" fill="#666"/></svg>
<svg style="left:1530.0px;top:99.5px" width="24" height="24" viewBox="0 0 24 24"><path d="M12 12L3 3M12 12l10-3M12 12v10" stroke="#3aa03a" stroke-width="1.6"/><rect x="9.5" y="9.5" width="5" height="5" fill="none" stroke="#555" stroke-width="1.2"/></svg>
<svg style="left:1562.7px;top:99.5px" width="24" height="24" viewBox="0 0 24 24"><path d="M2 2l20 20M22 2L2 22" stroke="#d0d0d0" stroke-width="1.6"/></svg>
<svg style="left:1594.0px;top:99.5px" width="24" height="24" viewBox="0 0 24 24"><path d="M2 4l10 6 10-8-6 10 6 10-10-8-10 6 6-8z" fill="#ddd8c8"/></svg>
<svg style="left:1626.5px;top:109.0px" width="9" height="5" viewBox="0 0 9 5"><path d="M0 0h9l-4.5 5z" fill="#999"/></svg>
<svg style="left:1650.0px;top:103.5px" width="4" height="16" viewBox="0 0 4 16"><rect x="0" y="0" width="1" height="1" fill="#b8b8b8"/><rect x="0" y="3" width="1" height="1" fill="#b8b8b8"/><rect x="0" y="6" width="1" height="1" fill="#b8b8b8"/><rect x="0" y="9" width="1" height="1" fill="#b8b8b8"/><rect x="0" y="12" width="1" height="1" fill="#b8b8b8"/><rect x="0" y="15" width="1" height="1" fill="#b8b8b8"/><rect x="3" y="0" width="1" height="1" fill="#b8b8b8"/><rect x="3" y="3" width="1" height="1" fill="#b8b8b8"/><rect x="3" y="6" width="1" height="1" fill="#b8b8b8"/><rect x="3" y="9" width="1" height="1" fill="#b8b8b8"/><rect x="3" y="12" width="1" height="1" fill="#b8b8b8"/><rect x="3" y="15" width="1" height="1" fill="#b8b8b8"/></svg>
<svg style="left:1662.7px;top:99.5px" width="24" height="24" viewBox="0 0 24 24"><rect x="1" y="1" width="22" height="22" fill="#5aa03c"/><circle cx="13" cy="10" r="6.5" fill="none" stroke="#fff" stroke-width="2"/><path d="M8.5 14.5L3 20" stroke="#fff" stroke-width="2.5"/></svg>
<svg style="left:1695.5px;top:99.5px" width="24" height="24" viewBox="0 0 24 24"><rect x="1" y="2" width="19" height="20" fill="#f8d860"/><path d="M1 8l8 3 5-7 6 2M4 22l4-8 6 2 6-5" stroke="#3a7ad0" stroke-width="2" fill="none"/><rect x="3" y="12" width="3" height="5" fill="#d03030"/><path d="M12 18L23 4" stroke="#7a4a20" stroke-width="3"/><path d="M10 21l2-3" stroke="#222" stroke-width="2"/></svg>
<svg style="left:1733.6px;top:103.5px" width="4" height="16" viewBox="0 0 4 16"><rect x="0" y="0" width="1" height="1" fill="#b8b8b8"/><rect x="0" y="3" width="1" height="1" fill="#b8b8b8"/><rect x="0" y="6" width="1" height="1" fill="#b8b8b8"/><rect x="0" y="9" width="1" height="1" fill="#b8b8b8"/><rect x="0" y="12" width="1" height="1" fill="#b8b8b8"/><rect x="0" y="15" width="1" height="1" fill="#b8b8b8"/><rect x="3" y="0" width="1" height="1" fill="#b8b8b8"/><rect x="3" y="3" width="1" height="1" fill="#b8b8b8"/><rect x="3" y="6" width="1" height="1" fill="#b8b8b8"/><rect x="3" y="9" width="1" height="1" fill="#b8b8b8"/><rect x="3" y="12" width="1" height="1" fill="#b8b8b8"/><rect x="3" y="15" width="1" height="1" fill="#b8b8b8"/></svg>
<svg style="left:1752.0px;top:103.5px" width="4" height="16" viewBox="0 0 4 16"><rect x="0" y="0" width="1" height="1" fill="#b8b8b8"/><rect x="0" y="3" width="1" height="1" fill="#b8b8b8"/><rect x="0" y="6" width="1" height="1" fill="#b8b8b8"/><rect x="0" y="9" width="1" height="1" fill="#b8b8b8"/><rect x="0" y="12" width="1" height="1" fill="#b8b8b8"/><rect x="0" y="15" width="1" height="1" fill="#b8b8b8"/><rect x="3" y="0" width="1" height="1" fill="#b8b8b8"/><rect x="3" y="3" width="1" height="1" fill="#b8b8b8"/><rect x="3" y="6" width="1" height="1" fill="#b8b8b8"/><rect x="3" y="9" width="1" height="1" fill="#b8b8b8"/><rect x="3" y="12" width="1" height="1" fill="#b8b8b8"/><rect x="3" y="15" width="1" height="1" fill="#b8b8b8"/></svg>
<svg style="left:1765.8px;top:99.5px" width="24" height="24" viewBox="0 0 24 24"><path d="M1 1h9l4 4v12H1z" fill="#fff" stroke="#5a7aa8"/><path d="M8 7h9l4 4v12H8z" fill="#fff" stroke="#5a7aa8"/><circle cx="5" cy="9" r="1.3" fill="#e02020"/><circle cx="14" cy="17" r="1.3" fill="#e02020"/></svg>
<svg style="left:1798.6px;top:99.5px" width="24" height="24" viewBox="0 0 24 24"><path d="M2 4l6-2 8 2 6-2v18l-6 2-8-2-6 2z" fill="#a8d08a" stroke="#7aa060"/><circle cx="13" cy="7" r="5" fill="#e02020"/><path d="M11 11l-5 8" stroke="#555" stroke-width="1.5"/></svg>
<svg style="left:1831.4px;top:99.5px" width="24" height="24" viewBox="0 0 24 24"><circle cx="9" cy="9" r="7.5" fill="#d8e8fa" stroke="#2a60b0" stroke-width="1.6"/><circle cx="9" cy="9" r="1.8" fill="#e02020"/><path d="M14 14l7 7" stroke="#d08020" stroke-width="3.5"/></svg>
<svg style="left:1864.0px;top:99.5px" width="24" height="24" viewBox="0 0 24 24"><circle cx="9" cy="9" r="7.5" fill="#d8e8fa" stroke="#2a60b0" stroke-width="1.6"/><circle cx="9" cy="9" r="1.8" fill="#e02020"/><circle cx="19" cy="3" r="1.5" fill="#e02020"/><circle cx="3" cy="20" r="1.8" fill="#e02020"/><circle cx="9" cy="21" r="1.5" fill="#e02020"/><path d="M14 14l7 7" stroke="#d08020" stroke-width="3.5"/></svg>
<div class="t" style="left:1902px;top:103.46px;font-size:16px;color:#000;font-weight:bold;font-style:normal;">»</div>
<svg style="left:2px;top:4px" width="21" height="21" viewBox="0 0 21 21"><circle cx="10" cy="10" r="7.2" fill="none" stroke="#73a52a" stroke-width="3.4"/><path d="M12 12l6 6" stroke="#73a52a" stroke-width="3.6"/><path d="M7 7l6 6" stroke="#ee7913" stroke-width="2"/><circle cx="10" cy="10" r="1.5" fill="#ee7913"/></svg>
<div class="a" style="left:1765px;top:13px;width:12px;height:1.5px;background:#111;"></div>
<svg style="left:1822px;top:8px" width="13" height="13" viewBox="0 0 13 13"><rect x="0.5" y="3.5" width="9" height="9" fill="none" stroke="#222"/><path d="M3.5 3.5V0.5h9v9h-3" fill="none" stroke="#222"/></svg>
<svg style="left:1881px;top:8px" width="13" height="13" viewBox="0 0 13 13"><path d="M0.5 0.5l12 12M12.5 0.5l-12 12" stroke="#222" stroke-width="1.1"/></svg>
<svg style="left:473px;top:136px" width="26" height="12" viewBox="0 0 26 12"><rect x="0.5" y="0.5" width="11" height="11" rx="2" fill="none" stroke="#777"/><rect x="4" y="2.5" width="5" height="5" fill="none" stroke="#666"/><rect x="2.5" y="4.5" width="5" height="5" fill="#f0f0f0" stroke="#666"/><rect x="14.5" y="0.5" width="11" height="11" rx="2" fill="none" stroke="#777"/><path d="M17 3l6 6M23 3l-6 6" stroke="#555" stroke-width="1.8"/></svg>
<svg style="left:473px;top:475px" width="26" height="12" viewBox="0 0 26 12"><rect x="0.5" y="0.5" width="11" height="11" rx="2" fill="none" stroke="#777"/><rect x="4" y="2.5" width="5" height="5" fill="none" stroke="#666"/><rect x="2.5" y="4.5" width="5" height="5" fill="#f0f0f0" stroke="#666"/><rect x="14.5" y="0.5" width="11" height="11" rx="2" fill="none" stroke="#777"/><path d="M17 3l6 6M23 3l-6 6" stroke="#555" stroke-width="1.8"/></svg>
<svg style="left:63.0px;top:158.0px" width="16" height="16" viewBox="0 0 16 16"><path d="M2 9l5-3 4 4-3 5z" fill="#e84040"/><path d="M2 9l5-3 2 2-5 3z" fill="#f0d030"/><path d="M4 8l3-2 1 1-3 2z" fill="#4080d0"/><path d="M7 12l8-10" stroke="#d0a050" stroke-width="2.2"/><path d="M3 10l4 4 3-3-4-4z" fill="#d8a860"/></svg>
<svg style="left:87.7px;top:158.0px" width="16" height="16" viewBox="0 0 16 16"><path d="M1 6h9v10H1z" fill="none" stroke="#777" stroke-width=".9"/><rect x="3" y="3" width="9" height="10" fill="#f0f0f0" stroke="#777" stroke-width=".9"/><path d="M7 1v8a2 2 0 0 0 3 0V3" fill="none" stroke="#3a6aaa" stroke-width=".9"/><circle cx="12.5" cy="13.5" r="3.5" fill="#40a050"/><path d="M12.5 11.5v4M10.5 13.5h4" stroke="#fff" stroke-width="1.2"/></svg>
<svg style="left:114.0px;top:158.0px" width="16" height="16" viewBox="0 0 16 16"><path d="M1 8c3-5 11-5 14 0-3 5-11 5-14 0z" fill="#fff" stroke="#777" stroke-width=".9"/><circle cx="8" cy="8" r="3" fill="#4a7ac0"/><circle cx="8" cy="8" r="1.2" fill="#111"/><path d="M9 12h7l-3.5 4z" fill="#333"/></svg>
<svg style="left:138.0px;top:158.0px" width="16" height="16" viewBox="0 0 16 16"><path d="M1 2h14l-5 6v8l-4-2V8z" fill="#6a9ad0" stroke="#3a6aa8" stroke-width=".7"/><rect x="1.5" y="2" width="13" height="2" fill="#f0e050"/></svg>
<svg style="left:164.0px;top:158.0px" width="16" height="16" viewBox="0 0 16 16"><text x="1" y="12" font-size="14" font-family="Liberation Serif" fill="#c8c8c8">&#949;</text><rect x="8" y="9" width="7" height="7" fill="#ddd"/></svg>
<svg style="left:203.4px;top:158.0px" width="16" height="16" viewBox="0 0 16 16"><path d="M1 2h9M2 2v12" stroke="#888" stroke-width=".9"/><rect x="2.5" y="5" width="3" height="3" fill="none" stroke="#f09020" stroke-width="1.2"/><rect x="2.5" y="11" width="3" height="3" fill="none" stroke="#f09020" stroke-width="1.2"/><path d="M9 1v9H6l5 6 5-6h-3V1z" fill="#4a80c8" stroke="#2a5a9a" stroke-width=".6"/></svg>
<svg style="left:228.6px;top:158.0px" width="16" height="16" viewBox="0 0 16 16"><path d="M1 2h9M2 2v12" stroke="#888" stroke-width=".9"/><rect x="2.5" y="5" width="3" height="3" fill="none" stroke="#f09020" stroke-width="1.2"/><rect x="2.5" y="11" width="3" height="3" fill="none" stroke="#f09020" stroke-width="1.2"/><path d="M9 16V7H6l5-6 5 6h-3v9z" fill="#4a80c8" stroke="#2a5a9a" stroke-width=".6"/></svg>
<svg style="left:252.7px;top:158.0px" width="16" height="16" viewBox="0 0 16 16"><rect x="1" y="1" width="12" height="12" fill="none" stroke="#777" stroke-width="1.2"/><rect x="9" y="10" width="7" height="5" rx="1.5" fill="#e03030"/><path d="M10.5 12.5h4" stroke="#fff" stroke-width="1.2"/></svg>
<svg style="left:186.0px;top:163.5px" width="8" height="5" viewBox="0 0 8 5"><path d="M0 0h8l-4 5z" fill="#aaa"/></svg>
<svg style="left:62.0px;top:497.0px" width="16" height="16" viewBox="0 0 16 16"><rect x="1" y="1" width="11" height="11" fill="none" stroke="#777" stroke-width="1.1"/><circle cx="13" cy="13" r="3" fill="#40a050"/></svg>
<svg style="left:88.0px;top:497.0px" width="16" height="16" viewBox="0 0 16 16"><path d="M2 7a6 6 0 0 1 11-3l1.5-1.5V8H9l2-2a3.5 3.5 0 0 0-6 1z" fill="#3a86d6"/><path d="M14 9a6 6 0 0 1-11 3l-1.5 1.5V8H7l-2 2a3.5 3.5 0 0 0 6-1z" fill="#2f78c8"/></svg>
<svg style="left:113.0px;top:497.0px" width="16" height="16" viewBox="0 0 16 16"><path d="M1 2h14l-5 6v8l-4-2V8z" fill="#6a9ad0" stroke="#3a6aa8" stroke-width=".7"/><rect x="1.5" y="2" width="13" height="2" fill="#f0e050"/></svg>
<svg style="left:138.0px;top:497.0px" width="16" height="16" viewBox="0 0 16 16"><path d="M1 2h9M2 2v12" stroke="#888" stroke-width=".9"/><rect x="2.5" y="5" width="3" height="3" fill="none" stroke="#f09020" stroke-width="1.2"/><rect x="2.5" y="11" width="3" height="3" fill="none" stroke="#f09020" stroke-width="1.2"/><path d="M9 16V7H6l5-6 5 6h-3v9z" fill="#4a80c8" stroke="#2a5a9a" stroke-width=".6"/></svg>
<svg style="left:163.0px;top:497.0px" width="16" height="16" viewBox="0 0 16 16"><circle cx="8" cy="8" r="7" fill="#5a8ad0"/><text x="6" y="13" font-size="10" font-style="italic" font-weight="bold" font-family="Liberation Serif" fill="#fff">i</text></svg>
<svg style="left:270px;top:466px" width="16" height="2" viewBox="0 0 16 2"><rect x="0" y="0" width="1" height="1" fill="#aaa"/><rect x="3" y="0" width="1" height="1" fill="#aaa"/><rect x="6" y="0" width="1" height="1" fill="#aaa"/><rect x="9" y="0" width="1" height="1" fill="#aaa"/><rect x="12" y="0" width="1" height="1" fill="#aaa"/><rect x="15" y="0" width="1" height="1" fill="#aaa"/></svg>
<svg style="left:84.5px;top:186px" width="16" height="16" viewBox="0 0 16 16"><rect x="0.5" y="0.5" width="15" height="15" fill="#fff" stroke="#a8a8a8"/><path d="M3.5 8.5l3 4 6-9" fill="none" stroke="#000" stroke-width="2"/></svg>
<svg style="left:84.5px;top:208px" width="16" height="16" viewBox="0 0 16 16"><rect x="0.5" y="0.5" width="15" height="15" fill="#fff" stroke="#a8a8a8"/><path d="M3.5 8.5l3 4 6-9" fill="none" stroke="#000" stroke-width="2"/></svg>
<svg style="left:109.5px;top:230px" width="16" height="16" viewBox="0 0 16 16"><rect x="0.5" y="0.5" width="15" height="15" fill="#fff" stroke="#a8a8a8"/><path d="M3.5 8.5l3 4 6-9" fill="none" stroke="#000" stroke-width="2"/></svg>
<svg style="left:109.5px;top:252px" width="16" height="16" viewBox="0 0 16 16"><rect x="0.5" y="0.5" width="15" height="15" fill="#fff" stroke="#a8a8a8"/></svg>
<svg style="left:109.5px;top:274px" width="16" height="16" viewBox="0 0 16 16"><rect x="0.5" y="0.5" width="15" height="15" fill="#fff" stroke="#a8a8a8"/></svg>
<svg style="left:84.5px;top:296px" width="16" height="16" viewBox="0 0 16 16"><rect x="0.5" y="0.5" width="15" height="15" fill="#fff" stroke="#a8a8a8"/><path d="M3.5 8.5l3 4 6-9" fill="none" stroke="#000" stroke-width="2"/></svg>
<svg style="left:109.5px;top:340px" width="16" height="16" viewBox="0 0 16 16"><rect x="0.5" y="0.5" width="15" height="15" fill="#fff" stroke="#a8a8a8"/><path d="M3.5 8.5l3 4 6-9" fill="none" stroke="#000" stroke-width="2"/></svg>
<svg style="left:109.5px;top:362px" width="16" height="16" viewBox="0 0 16 16"><rect x="0.5" y="0.5" width="15" height="15" fill="#fff" stroke="#a8a8a8"/></svg>
<svg style="left:109.5px;top:384px" width="16" height="16" viewBox="0 0 16 16"><rect x="0.5" y="0.5" width="15" height="15" fill="#fff" stroke="#a8a8a8"/><path d="M3.5 8.5l3 4 6-9" fill="none" stroke="#000" stroke-width="2"/></svg>
<svg style="left:63.5px;top:213.0px" width="10" height="6" viewBox="0 0 10 6"><path d="M0 0h10l-5 6z" fill="#555"/></svg>
<svg style="left:63.5px;top:301.0px" width="10" height="6" viewBox="0 0 10 6"><path d="M0 0h10l-5 6z" fill="#555"/></svg>
<svg style="left:108.0px;top:185.0px" width="18" height="18" viewBox="0 0 18 18"><path d="M9 1l8 8-8 8-8-8z" fill="#4ea64a" stroke="#3f8f3b"/></svg>
<svg style="left:108.0px;top:207.0px" width="18" height="18" viewBox="0 0 18 18"><path d="M1 9v8h7" fill="none" stroke="#999" stroke-width="1"/><rect x="4" y="4" width="10" height="11" fill="#f2f2f2" stroke="#888"/><rect x="7" y="2" width="10" height="11" fill="#f2f2f2" stroke="#888"/><path d="M10 0v9a2 2 0 0 0 3 0V3" fill="none" stroke="#3a6aaa" stroke-width="1"/></svg>
<svg style="left:108.0px;top:295.0px" width="18" height="18" viewBox="0 0 18 18"><path d="M1 9v8h7" fill="none" stroke="#999" stroke-width="1"/><rect x="4" y="4" width="10" height="11" fill="#f2f2f2" stroke="#888"/><rect x="7" y="2" width="10" height="11" fill="#f2f2f2" stroke="#888"/><path d="M10 0v9a2 2 0 0 0 3 0V3" fill="none" stroke="#3a6aaa" stroke-width="1"/></svg>
<div class="a" style="left:132px;top:238px;width:19px;height:1px;background:#000;"></div>
<div class="a" style="left:132px;top:260px;width:19px;height:1px;background:#c9b496;"></div>
<div class="a" style="left:132px;top:282px;width:19px;height:1px;background:#b8623a;"></div>
<svg style="left:109.5px;top:317.0px" width="18" height="18" viewBox="0 0 18 18"><rect x="1" y="1" width="16" height="17" rx="1" fill="#f2f2f2" stroke="#777"/><path d="M1 5h16M1 9h16M1 13h16M6 5v13" stroke="#888" stroke-width="1"/></svg>
<svg style="left:136.0px;top:342.0px" width="12" height="12" viewBox="0 0 12 12"><circle cx="6" cy="6" r="5" fill="#222"/></svg>
<svg style="left:136.0px;top:364.0px" width="12" height="12" viewBox="0 0 12 12"><circle cx="6" cy="6" r="5" fill="#b53c3c" stroke="#5a2020" stroke-width=".6"/></svg>
<svg style="left:132px;top:383px" width="20" height="19" viewBox="0 0 20 19"><rect x="0.5" y="0.5" width="18" height="18" fill="#e8704b" stroke="#333" stroke-width="1"/></svg>
<div class="a" style="left:494px;top:185px;width:4px;height:18px;background:#dddddd;"></div>
<div class="a" style="left:494px;top:207px;width:4px;height:18px;background:#dddddd;"></div>
<div class="a" style="left:494px;top:229px;width:4px;height:18px;background:#dddddd;"></div>
<div class="a" style="left:494px;top:251px;width:4px;height:18px;background:#dddddd;"></div>
<div class="a" style="left:494px;top:273px;width:4px;height:18px;background:#dddddd;"></div>
<div class="a" style="left:494px;top:295px;width:4px;height:18px;background:#dddddd;"></div>
<div class="a" style="left:494px;top:317px;width:4px;height:18px;background:#dddddd;"></div>
<div class="a" style="left:494px;top:339px;width:4px;height:18px;background:#dddddd;"></div>
<div class="a" style="left:494px;top:361px;width:4px;height:18px;background:#dddddd;"></div>
<div class="a" style="left:494px;top:383px;width:4px;height:18px;background:#dddddd;"></div>
<svg style="left:84.5px;top:524.0px" width="18" height="18" viewBox="0 0 18 18"><path d="M9 1l2.4 5.2 5.6.6-4.2 3.8 1.2 5.6L9 13.4l-5 2.8 1.2-5.6L1 6.8l5.6-.6z" fill="#ffe24a" stroke="#c8a818" stroke-width=".9"/></svg>
<svg style="left:84.5px;top:546.0px" width="18" height="18" viewBox="0 0 18 18"><rect x="1" y="1" width="16" height="16" rx="2" fill="#ececec" stroke="#999"/><path d="M10 1h4v7l-2-1.5-2 1.5z" fill="#4a80c8"/><path d="M4 2v15" stroke="#bbb"/></svg>
<svg style="left:84.5px;top:568.0px" width="18" height="18" viewBox="0 0 18 18"><rect x="1" y="1" width="16" height="16" fill="#f4f4f4" stroke="#888"/><path d="M4 9l5-5 5 5M6 8v6h6V8" fill="none" stroke="#222" stroke-width="1.1"/></svg>
<svg style="left:84.5px;top:590.0px" width="18" height="18" viewBox="0 0 18 18"><path d="M1 3h6l2 2h8v12H1z" fill="#ececec" stroke="#888"/></svg>
<svg style="left:84.5px;top:612.0px" width="18" height="18" viewBox="0 0 18 18"><path d="M1 3h6l2 2h8v12H1z" fill="#ececec" stroke="#888"/></svg>
<svg style="left:84.5px;top:634.0px" width="18" height="18" viewBox="0 0 18 18"><path d="M1 3h6l2 2h8v12H1z" fill="#ececec" stroke="#888"/></svg>
<svg style="left:84.5px;top:656.0px" width="18" height="18" viewBox="0 0 18 18"><path d="M1 8l7 4v6l-7-4z" fill="#d8b020" stroke="#444" stroke-width=".6"/><path d="M8 12l9-4v6l-9 4z" fill="#f6e870" stroke="#444" stroke-width=".6"/><circle cx="9" cy="6" r="5" fill="#7aa2d8"/><path d="M6 4c2 1 3 0 4 2" stroke="#2d5a9a" stroke-width="1.3"/></svg>
<svg style="left:84.5px;top:678.0px" width="18" height="18" viewBox="0 0 18 18"><path d="M1 17C3 10 8 3 17 1c-1 6-6 11-12 13z" fill="#9ab8e0" stroke="#3a6aa8" stroke-width=".8"/><path d="M1 17L13 4" stroke="#3a6aa8" stroke-width=".8"/></svg>
<svg style="left:84.5px;top:700.0px" width="18" height="18" viewBox="0 0 18 18"><path d="M3 3c3-3 9-3 12 0 2 3 1 6-1 8l-1 5-3-3-2 4-1-5c-3 0-5-5-4-9z" fill="#5a7ab0" stroke="#2a3a60" stroke-width=".8"/><circle cx="7" cy="6" r="1" fill="#fff"/></svg>
<svg style="left:84.5px;top:722.0px" width="18" height="18" viewBox="0 0 18 18"><path d="M1 17L5 1l12 8z" fill="#6a8ac0" stroke="#2a4a80" stroke-width=".8"/><path d="M5 1c2 5 2 11-4 16M9 4c1 4 0 9-4 12M13 6c0 4-2 7-5 9" fill="none" stroke="#cfe0f6" stroke-width=".9"/></svg>
<svg style="left:84.5px;top:744.0px" width="18" height="18" viewBox="0 0 18 18"><rect x="1" y="3" width="16" height="12" rx="6" fill="#6a8ac0" stroke="#2a3a60" stroke-width="1.5"/></svg>
<svg style="left:84.5px;top:766.0px" width="18" height="18" viewBox="0 0 18 18"><rect x="1" y="1" width="17" height="17" rx="2" fill="#6f97cf"/><text x="2" y="12" font-size="6.5" font-family="Liberation Sans" fill="#fff">DB2</text></svg>
<svg style="left:84.5px;top:788.0px" width="18" height="18" viewBox="0 0 18 18"><defs><radialGradient id="gg" cx="0.4" cy="0.35" r="0.7"><stop offset="0" stop-color="#e6f0fb"/><stop offset="1" stop-color="#7b9cc8"/></radialGradient></defs><circle cx="9" cy="9" r="8" fill="url(#gg)" stroke="#6a88b4" stroke-width=".9"/><path d="M3.5 6c1.5-1 3.5-1.5 4.5 0 .5 1.5-1.5 2.5-1 4 .5 1.5 2 2.5 1 4.5-1 1-2-1-2.5-2.5C5 10.5 3 9.5 3.5 6zM10 3c2-.5 4.5.5 4 2-.5 1-2 .5-2.5 1.5 0 1 2 1 2.5 2.5.5 2-1 4-2 5.5-1 .5-1-2-1.5-3.5-.5-1-2-1.5-1.5-3 .5-1 2-1 1.5-2.5C10 5 9 4 10 3z" fill="#3a4e70"/></svg>
<svg style="left:84.5px;top:810.0px" width="18" height="18" viewBox="0 0 18 18"><defs><radialGradient id="gg" cx="0.4" cy="0.35" r="0.7"><stop offset="0" stop-color="#e6f0fb"/><stop offset="1" stop-color="#7b9cc8"/></radialGradient></defs><circle cx="9" cy="9" r="8" fill="url(#gg)" stroke="#6a88b4" stroke-width=".9"/><path d="M3.5 6c1.5-1 3.5-1.5 4.5 0 .5 1.5-1.5 2.5-1 4 .5 1.5 2 2.5 1 4.5-1 1-2-1-2.5-2.5C5 10.5 3 9.5 3.5 6zM10 3c2-.5 4.5.5 4 2-.5 1-2 .5-2.5 1.5 0 1 2 1 2.5 2.5.5 2-1 4-2 5.5-1 .5-1-2-1.5-3.5-.5-1-2-1.5-1.5-3 .5-1 2-1 1.5-2.5C10 5 9 4 10 3z" fill="#3a4e70"/></svg>
<svg style="left:84.5px;top:832.0px" width="18" height="18" viewBox="0 0 18 18"><circle cx="9" cy="9" r="8" fill="#4a6a9a" stroke="#2a3a60"/><path d="M1 9h16M2 5h14M2 13h14" stroke="#fff" stroke-width="1"/><ellipse cx="9" cy="9" rx="3.5" ry="8" fill="none" stroke="#fff" stroke-width="1"/></svg>
<svg style="left:84.5px;top:854.0px" width="18" height="18" viewBox="0 0 18 18"><circle cx="9" cy="9" r="8" fill="#fff" stroke="#7a9ac8"/><path d="M1 9h16M9 1v16" stroke="#aac0e0" stroke-width=".8"/><path d="M4 4l4 10 3-10h3" fill="none" stroke="#333" stroke-width="1"/></svg>
<svg style="left:84.5px;top:876.0px" width="18" height="18" viewBox="0 0 18 18"><circle cx="9" cy="9" r="8" fill="#fff" stroke="#7a9ac8"/><path d="M1 9h16M2 5h14M2 13h14M9 1v16" stroke="#8aaad8" stroke-width=".8"/><ellipse cx="9" cy="9" rx="4" ry="8" fill="none" stroke="#8aaad8" stroke-width=".8"/></svg>
<svg style="left:84.5px;top:898.0px" width="18" height="18" viewBox="0 0 18 18"><circle cx="9" cy="9" r="8" fill="url(#gg)" stroke="#6a88b4" stroke-width=".9"/><path d="M3.5 6c1.5-1 3.5-1.5 4.5 0 .5 1.5-1.5 2.5-1 4 .5 1.5 2 2.5 1 4.5-1 1-2-1-2.5-2.5C5 10.5 3 9.5 3.5 6zM10 3c2-.5 4.5.5 4 2-.5 1-2 .5-2.5 1.5 0 1 2 1 2.5 2.5.5 2-1 4-2 5.5-1 .5-1-2-1.5-3.5-.5-1-2-1.5-1.5-3 .5-1 2-1 1.5-2.5C10 5 9 4 10 3z" fill="#3a4e70"/><path d="M2 12l2.5 4 2-3" stroke="#222" stroke-width="1.6" fill="none"/></svg>
<svg style="left:84.5px;top:920.0px" width="18" height="18" viewBox="0 0 18 18"><circle cx="9" cy="9" r="8" fill="#fff" stroke="#7a9ac8" stroke-width=".9"/><path d="M3.5 6c1.5-1 3.5-1.5 4.5 0 .5 1.5-1.5 2.5-1 4 .5 1.5 2 2.5 1 4.5-1 1-2-1-2.5-2.5C5 10.5 3 9.5 3.5 6zM10 3c2-.5 4.5.5 4 2-.5 1-2 .5-2.5 1.5 0 1 2 1 2.5 2.5.5 2-1 4-2 5.5-1 .5-1-2-1.5-3.5-.5-1-2-1.5-1.5-3 .5-1 2-1 1.5-2.5C10 5 9 4 10 3z" fill="#555"/><path d="M2 12l2.5 4 2-3" stroke="#222" stroke-width="1.6" fill="none"/></svg>
<svg style="left:84.5px;top:942.0px" width="18" height="18" viewBox="0 0 18 18"><path d="M9 1v16M1 9h16M3 3l12 12M15 3L3 15" stroke="#5a80b8" stroke-width="3" stroke-linecap="round"/><circle cx="9" cy="9" r="2" fill="#fff"/></svg>
<svg style="left:65.0px;top:550.0px" width="6" height="10" viewBox="0 0 6 10"><path d="M0 0v10l6-5z" fill="#333"/></svg>
<svg style="left:65.0px;top:572.0px" width="6" height="10" viewBox="0 0 6 10"><path d="M0 0v10l6-5z" fill="#333"/></svg>
<svg style="left:65.0px;top:594.0px" width="6" height="10" viewBox="0 0 6 10"><path d="M0 0v10l6-5z" fill="#333"/></svg>
<svg style="left:65.0px;top:616.0px" width="6" height="10" viewBox="0 0 6 10"><path d="M0 0v10l6-5z" fill="#333"/></svg>
<svg style="left:65.0px;top:638.0px" width="6" height="10" viewBox="0 0 6 10"><path d="M0 0v10l6-5z" fill="#333"/></svg>
<svg style="left:65.0px;top:660.0px" width="6" height="10" viewBox="0 0 6 10"><path d="M0 0v10l6-5z" fill="#333"/></svg>
<svg style="left:65.0px;top:682.0px" width="6" height="10" viewBox="0 0 6 10"><path d="M0 0v10l6-5z" fill="#333"/></svg>
<svg style="left:65.0px;top:704.0px" width="6" height="10" viewBox="0 0 6 10"><path d="M0 0v10l6-5z" fill="#333"/></svg>
<svg style="left:65.0px;top:792.0px" width="6" height="10" viewBox="0 0 6 10"><path d="M0 0v10l6-5z" fill="#333"/></svg>
<svg style="left:65.0px;top:814.0px" width="6" height="10" viewBox="0 0 6 10"><path d="M0 0v10l6-5z" fill="#333"/></svg>
<svg style="left:65.0px;top:836.0px" width="6" height="10" viewBox="0 0 6 10"><path d="M0 0v10l6-5z" fill="#333"/></svg>
<svg style="left:65.0px;top:858.0px" width="6" height="10" viewBox="0 0 6 10"><path d="M0 0v10l6-5z" fill="#333"/></svg>
<svg style="left:65.0px;top:880.0px" width="6" height="10" viewBox="0 0 6 10"><path d="M0 0v10l6-5z" fill="#333"/></svg>
<svg style="left:65.0px;top:902.0px" width="6" height="10" viewBox="0 0 6 10"><path d="M0 0v10l6-5z" fill="#333"/></svg>
<svg style="left:65.0px;top:924.0px" width="6" height="10" viewBox="0 0 6 10"><path d="M0 0v10l6-5z" fill="#333"/></svg>
<svg style="left:19px;top:138px" width="18" height="4" viewBox="0 0 18 4"><rect x="0" y="0" width="1" height="1" fill="#b8b8b8"/><rect x="0" y="3" width="1" height="1" fill="#b8b8b8"/><rect x="3" y="0" width="1" height="1" fill="#b8b8b8"/><rect x="3" y="3" width="1" height="1" fill="#b8b8b8"/><rect x="6" y="0" width="1" height="1" fill="#b8b8b8"/><rect x="6" y="3" width="1" height="1" fill="#b8b8b8"/><rect x="9" y="0" width="1" height="1" fill="#b8b8b8"/><rect x="9" y="3" width="1" height="1" fill="#b8b8b8"/><rect x="12" y="0" width="1" height="1" fill="#b8b8b8"/><rect x="12" y="3" width="1" height="1" fill="#b8b8b8"/><rect x="15" y="0" width="1" height="1" fill="#b8b8b8"/><rect x="15" y="3" width="1" height="1" fill="#b8b8b8"/></svg>
<svg style="left:15px;top:149px" width="24" height="24" viewBox="0 0 24 24"><path d="M2 22V2l20 20z" fill="#dedcd8" stroke="#c8c8c8" stroke-width="1.5"/><path d="M6 18V10l8 8z" fill="#f0f0f0" stroke="#c8c8c8"/><path d="M20 6v16M17 9h3M17 12h3M17 15h3" stroke="#c8c8c8"/></svg>
<svg style="left:15px;top:181.5px" width="24" height="24" viewBox="0 0 24 24"><circle cx="4" cy="10" r="3" fill="#dedcd8" stroke="#c8c8c8"/><circle cx="10" cy="4" r="3" fill="#dedcd8" stroke="#c8c8c8"/><rect x="11" y="12" width="11" height="10" rx="1.5" fill="#d6d2c8"/><path d="M13 17h6M17 14.5l2.5 2.5-2.5 2.5" stroke="#fff" stroke-width="1.3" fill="none"/></svg>
<svg style="left:15px;top:214px" width="24" height="24" viewBox="0 0 24 24"><path d="M3 6c0-4 6-5 10-3 5 2 8 1 8 5 0 5-6 3-9 4-4 2-9 2-9-6z" fill="#dedcd8" stroke="#c8c8c8" stroke-width="1.2"/><rect x="14" y="14" width="9" height="9" rx="1.5" fill="#d6d2c8"/><path d="M18.5 15.5v6M15.5 18.5h6" stroke="#fff" stroke-width="1.1"/></svg>
<svg style="left:15px;top:247px" width="24" height="24" viewBox="0 0 24 24"><circle cx="9" cy="9" r="7" fill="#dedcd8" stroke="#c8c8c8"/><path d="M10 10l12 3-4 9-9-3z" fill="#dedcd8" stroke="#c8c8c8"/></svg>
<svg style="left:15px;top:278.5px" width="24" height="24" viewBox="0 0 24 24"><path d="M3 6c0-4 6-5 10-3 5 2 8 1 8 5 0 5-6 3-9 4-4 2-9 2-9-6z" fill="#dedcd8" stroke="#c8c8c8" stroke-width="1.2"/><rect x="14" y="14" width="9" height="9" rx="1.5" fill="#d6d2c8"/><path d="M18.5 15.5v6M15.5 18.5h6" stroke="#fff" stroke-width="1.1"/></svg>
<svg style="left:15px;top:310px" width="24" height="24" viewBox="0 0 24 24"><path d="M3 6c0-4 6-5 10-3 5 2 8 1 8 5 0 5-6 3-9 4-4 2-9 2-9-6z" fill="#dedcd8" stroke="#c8c8c8" stroke-width="1.2"/><path d="M3 18c0-4 4-4 6-3" fill="#dedcd8" stroke="#c8c8c8"/><rect x="14" y="14" width="9" height="9" rx="1.5" fill="#d6d2c8"/><path d="M18.5 15.5v6M15.5 18.5h6" stroke="#fff" stroke-width="1.1"/></svg>
<svg style="left:15px;top:341.5px" width="24" height="24" viewBox="0 0 24 24"><path d="M3 6c0-4 6-5 10-3 5 2 8 1 8 5 0 5-6 3-9 4-4 2-9 2-9-6z" fill="#dedcd8" stroke="#c8c8c8" stroke-width="1.2"/><rect x="14" y="14" width="9" height="9" rx="1.5" fill="#d6d2c8"/><path d="M18.5 15.5v6M15.5 18.5h6" stroke="#fff" stroke-width="1.1"/></svg>
<svg style="left:15px;top:373px" width="24" height="24" viewBox="0 0 24 24"><path d="M3 6c0-4 6-5 10-3 5 2 8 1 8 5 0 5-6 3-9 4-4 2-9 2-9-6z" fill="#dedcd8" stroke="#c8c8c8" stroke-width="1.2"/><rect x="14" y="14" width="9" height="9" rx="1.5" fill="#d6d2c8"/><path d="M18.5 15.5v6M15.5 18.5h6" stroke="#fff" stroke-width="1.1"/></svg>
<svg style="left:15px;top:404.5px" width="24" height="24" viewBox="0 0 24 24"><path d="M3 6c0-4 6-5 10-3 5 2 8 1 8 5 0 5-6 3-9 4-4 2-9 2-9-6z" fill="#dedcd8" stroke="#c8c8c8" stroke-width="1.2"/><rect x="14" y="14" width="9" height="9" rx="1.5" fill="#d6d2c8"/><path d="M18.5 15.5v6M15.5 18.5h6" stroke="#fff" stroke-width="1.1"/></svg>
<svg style="left:15px;top:436px" width="24" height="24" viewBox="0 0 24 24"><path d="M4 4c0-3 14-3 16 1 2 5-6 5-7 9-1 4-6 8-9 4-3-4 0-10 0-14z" fill="#dedcd8" stroke="#c8c8c8"/></svg>
<svg style="left:15px;top:470px" width="24" height="24" viewBox="0 0 24 24"><path d="M6 20c-4-4 0-12 6-15 5-2 9 2 6 6-3 4-8 13-12 9z" fill="#dcdcd6" stroke="#c8c8c8" stroke-width="1.2"/></svg>
<svg style="left:15px;top:501.5px" width="24" height="24" viewBox="0 0 24 24"><path d="M3 2l6 12 5-10" fill="none" stroke="#c8c8c8" stroke-width="1.2"/><rect x="13" y="13" width="10" height="10" rx="1.5" fill="#d6d2c8"/></svg>
<svg style="left:15px;top:533px" width="24" height="24" viewBox="0 0 24 24"><path d="M12 1v22M4 8h16M4 16h16" stroke="#c8c8c8" stroke-width="1.3"/><rect x="17" y="2" width="5" height="5" fill="#ddd"/><rect x="2" y="17" width="5" height="5" fill="#ddd"/></svg>
<svg style="left:15px;top:566px" width="24" height="24" viewBox="0 0 24 24"><path d="M5 4c0-3 6-3 7 0 1-3 7-3 7 0 0 4-5 5-7 8-2-3-7-4-7-8z" fill="#dedcd8" stroke="#c8c8c8"/><circle cx="8" cy="19" r="3" fill="none" stroke="#c8c8c8" stroke-width="1.5"/><circle cx="16" cy="19" r="3" fill="none" stroke="#c8c8c8" stroke-width="1.5"/></svg>
<svg style="left:15px;top:597.5px" width="24" height="24" viewBox="0 0 24 24"><path d="M5 4c0-3 6-3 7 0 1-3 7-3 7 0 0 4-5 5-7 8-2-3-7-4-7-8z" fill="#dedcd8" stroke="#c8c8c8"/><circle cx="8" cy="19" r="3" fill="none" stroke="#c8c8c8" stroke-width="1.5"/><circle cx="16" cy="19" r="3" fill="none" stroke="#c8c8c8" stroke-width="1.5"/></svg>
<svg style="left:15px;top:629px" width="24" height="24" viewBox="0 0 24 24"><path d="M3 6c0-4 7-4 9-2 3-2 9-1 9 3 0 4-7 5-9 6-4 0-9-1-9-7z" fill="#dedcd8" stroke="#c8c8c8"/><path d="M8 13c-3 3-2 6 2 9" stroke="#c8c8c8" stroke-width="1.5" fill="none"/></svg>
<svg style="left:15px;top:662px" width="24" height="24" viewBox="0 0 24 24"><path d="M2 3h20M2 12h20M2 21h20M8 1v6M16 9v6M8 17v6" stroke="#c8c8c8" stroke-width="1.3"/></svg>
<svg style="left:15px;top:693.5px" width="24" height="24" viewBox="0 0 24 24"><path d="M10 2v20M10 2l8 5-8 4" fill="#dedcd8" stroke="#c8c8c8"/><path d="M6 6a9 9 0 0 0 0 12" fill="none" stroke="#c8c8c8" stroke-width="1.3"/></svg>
<svg style="left:37.5px;top:191.0px" width="9" height="5" viewBox="0 0 9 5"><path d="M0 0h9l-4.5 5z" fill="#aaa"/></svg>
<svg style="left:37.5px;top:703.0px" width="9" height="5" viewBox="0 0 9 5"><path d="M0 0h9l-4.5 5z" fill="#aaa"/></svg>
<svg style="left:19px;top:732px" width="18" height="4" viewBox="0 0 18 4"><rect x="0" y="0" width="1" height="1" fill="#b8b8b8"/><rect x="0" y="3" width="1" height="1" fill="#b8b8b8"/><rect x="3" y="0" width="1" height="1" fill="#b8b8b8"/><rect x="3" y="3" width="1" height="1" fill="#b8b8b8"/><rect x="6" y="0" width="1" height="1" fill="#b8b8b8"/><rect x="6" y="3" width="1" height="1" fill="#b8b8b8"/><rect x="9" y="0" width="1" height="1" fill="#b8b8b8"/><rect x="9" y="3" width="1" height="1" fill="#b8b8b8"/><rect x="12" y="0" width="1" height="1" fill="#b8b8b8"/><rect x="12" y="3" width="1" height="1" fill="#b8b8b8"/><rect x="15" y="0" width="1" height="1" fill="#b8b8b8"/><rect x="15" y="3" width="1" height="1" fill="#b8b8b8"/></svg>
<svg style="left:14px;top:743px" width="26" height="26" viewBox="0 0 26 26"><path d="M4 6l8-3 10 4-3 10-10 3z" fill="#5a8ad0" stroke="#2a4a80"/><circle cx="4" cy="6" r="2.5" fill="#f0d020" stroke="#333" stroke-width=".7"/><circle cx="22" cy="7" r="2.5" fill="#f0d020" stroke="#333" stroke-width=".7"/><circle cx="4" cy="22" r="2.5" fill="#f0d020" stroke="#333" stroke-width=".7"/><path d="M14 20l4 4 7-10" fill="none" stroke="#f0d020" stroke-width="2.5"/><path d="M14 20l4 4 7-10" fill="none" stroke="#333" stroke-width=".8"/></svg>
<div class="a" style="left:4px;top:1052px;width:309px;height:24px;background:#fff;border:1px solid #b9b9b9;border-radius:2px"></div>
<div class="t" style="left:33.3px;top:1058.15px;font-size:14px;color:#6d6d6d;font-weight:normal;font-style:normal;transform:scaleX(0.9170);">Digita per localizzare (Ctrl+K)</div>
<svg style="left:12.0px;top:1057.0px" width="14" height="14" viewBox="0 0 14 14"><circle cx="5.5" cy="5.5" r="4.2" fill="none" stroke="#777" stroke-width="1.3"/><path d="M8.5 8.5l4.5 4.5" stroke="#777" stroke-width="1.5"/></svg>
<div class="a" style="left:971.5px;top:1052.5px;width:117px;height:23px;background:#fff;border:1px solid #c4c4c4;border-radius:2px"></div>
<div class="t" style="left:982.1px;top:1058.45px;font-size:14px;color:#000;font-weight:normal;font-style:normal;transform:scaleX(0.9019);">901412,4680705</div>
<svg style="left:1091.7px;top:1053.0px" width="22" height="22" viewBox="0 0 22 22"><path d="M4 4c3-3 10-2 12 3l-8 8c-4-2-6-7-4-11z" fill="#fff" stroke="#222" stroke-width="1.4"/><path d="M7 3l5 7" stroke="#222" stroke-width="1.2"/><circle cx="12" cy="15" r="5" fill="#fff" stroke="#222" stroke-width="1.4"/><circle cx="12" cy="15" r="1.5" fill="#222"/><path d="M17 2l2-1M19 5l2-1M18 8l2 0" stroke="#444" stroke-width="1"/></svg>
<div class="a" style="left:1160.3px;top:1052.5px;width:92px;height:23px;background:#fff;border:1px solid #c4c4c4;border-radius:2px"></div>
<div class="a" style="left:1227.5px;top:1053.5px;width:24px;height:21px;background:#f0f0f0;"></div>
<div class="t" style="left:1163.9px;top:1058.45px;font-size:14px;color:#000;font-weight:normal;font-style:normal;transform:scaleX(0.9202);">1:1745510</div>
<svg style="left:1233.0px;top:1061.5px" width="9" height="5" viewBox="0 0 9 5"><path d="M0 0h9l-4.5 5z" fill="#555"/></svg>
<svg style="left:1264.7px;top:1054.5px" width="16" height="19" viewBox="0 0 16 19"><path d="M4 8V5a4 4 0 0 1 8 0v3" fill="none" stroke="#666" stroke-width="2"/><rect x="1" y="8" width="14" height="10" rx="1.5" fill="#666"/></svg>
<div class="a" style="left:1420.3px;top:1052.5px;width:92px;height:23px;background:#fff;border:1px solid #c4c4c4;border-radius:2px"></div>
<div class="a" style="left:1494px;top:1053.5px;width:1px;height:21px;background:#d0d0d0;"></div>
<div class="t" style="left:1425.2px;top:1058.45px;font-size:14px;color:#000;font-weight:normal;font-style:normal;transform:scaleX(0.9077);">100%</div>
<svg style="left:1498.7px;top:1056.0px" width="10" height="16" viewBox="0 0 10 16"><path d="M1 6l4-4 4 4z" fill="#666"/><path d="M1 10l4 4 4-4z" fill="#666"/></svg>
<div class="a" style="left:1586.9px;top:1052.5px;width:89px;height:23px;background:#fff;border:1px solid #c4c4c4;border-radius:2px"></div>
<div class="a" style="left:1657px;top:1053.5px;width:1px;height:21px;background:#d0d0d0;"></div>
<div class="t" style="left:1592.3px;top:1058.45px;font-size:14px;color:#000;font-weight:normal;font-style:normal;transform:scaleX(0.9361);">0,0 °</div>
<svg style="left:1661.8px;top:1056.0px" width="10" height="16" viewBox="0 0 10 16"><path d="M1 6l4-4 4 4z" fill="#666"/><path d="M1 10l4 4 4-4z" fill="#666"/></svg>
<svg style="left:1682.5px;top:1055px" width="16" height="16" viewBox="0 0 16 16"><rect x="0.5" y="0.5" width="15" height="15" fill="#fff" stroke="#a8a8a8"/><path d="M3.5 8.5l3 4 6-9" fill="none" stroke="#000" stroke-width="2"/></svg>
<svg style="left:1778.0px;top:1055.0px" width="20" height="18" viewBox="0 0 20 18"><ellipse cx="10" cy="9" rx="8.5" ry="7.5" fill="none" stroke="#666" stroke-width="1.3"/><ellipse cx="10" cy="9" rx="3.5" ry="7.5" fill="none" stroke="#666" stroke-width="1.1"/><path d="M1.5 9h17M3 5h14M3 13h14" stroke="#666" stroke-width="1.1"/></svg>
<svg style="left:1892.3px;top:1054.0px" width="21" height="20" viewBox="0 0 21 20"><path d="M10 1c6 0 10 3 10 7.5S16 16 10 16c-1.2 0-2-.1-3-.4L2 19l1.5-4C1.5 13.5 0 11 0 8.5 0 4 4 1 10 1z" fill="#555"/><circle cx="5.5" cy="8.5" r="1.5" fill="#fff"/><circle cx="10" cy="8.5" r="1.5" fill="#fff"/><circle cx="14.5" cy="8.5" r="1.5" fill="#fff"/></svg>
<div class="t" style="left:1392.7px;top:1012.61px;font-size:23.5px;color:#000;font-weight:normal;font-style:normal;transform:scaleX(0.9756);text-shadow:-1.5px -1.5px 0 #fff,1.5px -1.5px 0 #fff,-1.5px 1.5px 0 #fff,1.5px 1.5px 0 #fff,0 -2px 0 #fff,0 2px 0 #fff,-2px 0 0 #fff,2px 0 0 #fff;">© Salvatore Fiandaca QGIS - 3.11.0-Master - 2020</div></body></html>
